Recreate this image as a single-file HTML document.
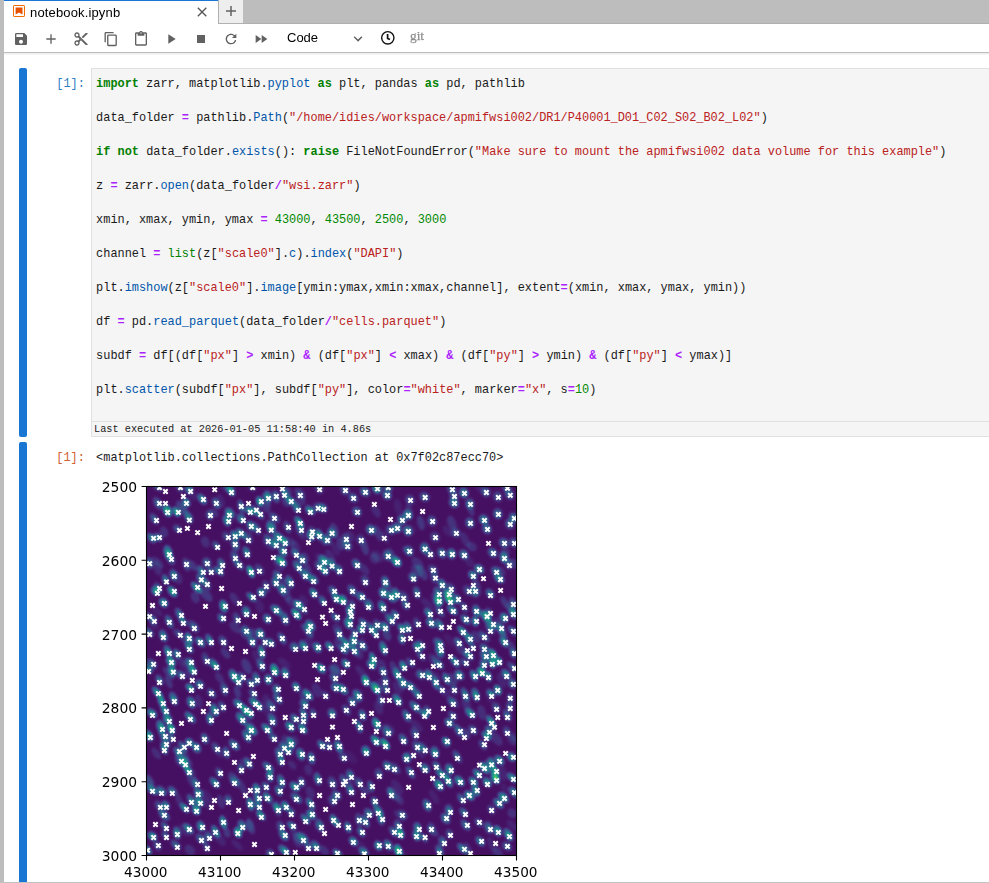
<!DOCTYPE html>
<html>
<head>
<meta charset="utf-8">
<title>notebook.ipynb</title>
<style>
*{box-sizing:border-box;margin:0;padding:0}
html,body{width:989px;height:883px;overflow:hidden;background:#fff}
body{position:relative;font-family:"Liberation Sans",sans-serif;color:#212121}
.abs{position:absolute}
#leftstrip{left:0;top:0;width:4px;height:883px;background:#bdbdbd}
#tabbar{left:0;top:0;width:989px;height:24px;background:#bdbdbd;border-bottom:1px solid #b0b0b0}
#tab{left:4px;top:0;width:214px;height:24px;background:#fff;border-top:1px solid #1976d2}
#tabicon{left:13px;top:5px;width:12px;height:12px}
#tablabel{left:30px;top:5px;font-size:13px;line-height:16px;color:#000;white-space:nowrap;letter-spacing:0.15px}
#tabclose{left:196px;top:6px;width:12px;height:12px}
#addbtn{left:218px;top:0;width:25px;height:24px;background:#eee;border-left:1px solid #b0b0b0;border-bottom:1px solid #b0b0b0}
#toolbar{left:4px;top:24px;width:985px;height:29px;background:#fff;border-bottom:1px solid #bdbdbd}
#tbshadow{left:4px;top:53px;width:985px;height:2px;background:linear-gradient(#e9e9e9,#fbfbfb)}
.tbi{position:absolute;fill:#616161}
#celltype{left:287px;top:30px;font-size:13px;line-height:16px;color:#000}
#git{left:410.4px;top:28.3px;-webkit-text-stroke:0.25px #8e8e8e;font-family:"Liberation Serif",serif;font-size:13.33px;line-height:16px;color:#8e8e8e}
.collapser{position:absolute;left:19px;width:8px;background:#1976d2;border-radius:2px}
.mono{font-family:"Liberation Mono",monospace;font-size:11.917px;line-height:17px;white-space:pre;color:#1a1a1a}
#inprompt{left:56.3px;top:76px;color:#307fc1}
#outprompt{left:56.3px;top:450px;color:#d0602f}
#bottomline{left:0;top:882px;width:989px;height:1px;background:#c2c2c2}
.gray{will-change:transform}
#editor{left:91px;top:68px;width:900px;height:369px;background:#f5f5f5;border:1px solid #e0e0e0}
#code{left:96.1px;top:76px}
#exectime{left:91px;top:421px;width:900px;height:16px;border-top:1px solid #e0e0e0}
#exectxt{left:94px;top:421.5px;font-size:10.27px;line-height:14px;color:#212121}
#outtxt{left:96.1px;top:450px}
.k{color:#008000;font-weight:bold}
.o{color:#aa22ff;font-weight:bold}
.n{color:#008800}
.s{color:#ba2121}
.p{color:#0055aa}
.b{color:#008000}
#plot{left:91px;top:470px}
</style>
</head>
<body>
<div id="tabbar" class="abs"></div>
<div id="leftstrip" class="abs"></div>
<div id="tab" class="abs"></div>
<svg id="tabicon" class="abs" viewBox="0 0 12 12"><rect x="0.5" y="0.5" width="11" height="11" rx="0.6" fill="#fff" stroke="#ef6c00" stroke-width="1"/><path d="M2.6 2.6h6.9v7L6 7.500 2.600 9.600z" fill="#e65100"/></svg>
<div id="tablabel" class="abs gray">notebook.ipynb</div>
<svg id="tabclose" class="abs" viewBox="0 0 12 12"><path d="M1.800 1.800l8.500 8.500M10.300 1.800l-8.500 8.500" stroke="#555" stroke-width="1.300" fill="none"/></svg>
<div id="addbtn" class="abs"></div>
<svg class="abs" style="left:225px;top:5px;width:12px;height:12px" viewBox="0 0 12 12"><path d="M6 1v10M1 6h10" stroke="#616161" stroke-width="1.500" fill="none"/></svg>

<div id="toolbar" class="abs"></div><div id="tbshadow" class="abs"></div>
<!-- toolbar icons -->
<svg class="tbi" style="left:13px;top:31px;width:16px;height:16px" viewBox="0 0 24 24"><path d="M17 3H5c-1.110 0-2 .9-2 2v14c0 1.100.89 2 2 2h14c1.100 0 2-.9 2-2V7l-4-4zm-5 16c-1.660 0-3-1.340-3-3s1.340-3 3-3 3 1.340 3 3-1.340 3-3 3zm3-10H5V5h10v4z"/></svg>
<svg class="tbi" style="left:43px;top:31px;width:16px;height:16px" viewBox="0 0 24 24"><path d="M19 13h-6v6h-2v-6H5v-2h6V5h2v6h6v2z"/></svg>
<svg class="tbi" style="left:73px;top:31px;width:16px;height:16px" viewBox="0 0 24 24"><path d="M9.640 7.640c.23-.5.36-1.050.36-1.640 0-2.210-1.790-4-4-4S2 3.790 2 6s1.790 4 4 4c.59 0 1.140-.13 1.640-.36L10 12l-2.360 2.360C7.140 14.130 6.590 14 6 14c-2.210 0-4 1.790-4 4s1.790 4 4 4 4-1.790 4-4c0-.59-.13-1.140-.36-1.640L12 14l7 7h3v-1L9.640 7.640zM6 8c-1.100 0-2-.89-2-2s.9-2 2-2 2 .89 2 2-.9 2-2 2zm0 12c-1.100 0-2-.89-2-2s.9-2 2-2 2 .89 2 2-.9 2-2 2zm6-7.500c-.28 0-.5-.22-.5-.5s.22-.5.5-.5.500.22.500.5-.22.500-.5.500zM19 3l-6 6 2 2 7-7V3z"/></svg>
<svg class="tbi" style="left:103px;top:31px;width:16px;height:16px" viewBox="0 0 18 18"><path d="M11.900 1H3.200c-.8 0-1.500.7-1.500 1.500v10.200h1.500V2.500h8.700V1zm2.200 2.900h-8c-.8 0-1.500.7-1.500 1.500v10.200c0 .8.700 1.500 1.500 1.500h8c.8 0 1.500-.7 1.500-1.500V5.400c-.1-.8-.7-1.500-1.500-1.500zm0 11.600h-8V5.400h8v10.100z"/></svg>
<svg class="tbi" style="left:133px;top:31px;width:16px;height:16px" viewBox="0 0 24 24"><path d="M19 2h-4.180C14.400.84 13.300 0 12 0c-1.300 0-2.400.84-2.820 2H5c-1.100 0-2 .9-2 2v16c0 1.100.9 2 2 2h14c1.100 0 2-.9 2-2V4c0-1.100-.9-2-2-2zm-7 0c.55 0 1 .45 1 1s-.45 1-1 1-1-.45-1-1 .45-1 1-1zm7 18H5V4h2v3h10V4h2v16z"/></svg>
<svg class="tbi" style="left:163px;top:31px;width:16px;height:16px" viewBox="0 0 24 24"><path d="M8 5v14l11-7z"/></svg>
<svg class="tbi" style="left:193px;top:31px;width:16px;height:16px" viewBox="0 0 24 24"><path d="M6 6h12v12H6z"/></svg>
<svg class="tbi" style="left:223px;top:31px;width:16px;height:16px" viewBox="0 0 18 18"><path d="M9 13.500c-2.490 0-4.500-2.010-4.500-4.500S6.510 4.500 9 4.500c1.240 0 2.360.52 3.170 1.330L10 8h5V3l-1.760 1.760C12.150 3.680 10.660 3 9 3 5.690 3 3.010 5.690 3.010 9S5.690 15 9 15c2.970 0 5.430-2.160 5.900-5h-1.520c-.46 2-2.240 3.500-4.380 3.500z"/></svg>
<svg class="tbi" style="left:253px;top:31px;width:16px;height:16px" viewBox="0 0 24 24"><path d="M4 18l8.500-6L4 6v12zm9-12v12l8.500-6L13 6z"/></svg>
<div id="celltype" class="abs gray">Code</div>
<svg class="tbi" style="left:350px;top:31px;width:16px;height:16px" viewBox="0 0 18 18"><path d="M5.200 5.900L9 9.700l3.800-3.800 1.200 1.200-4.900 5-4.900-5z"/></svg>
<svg class="abs" style="left:380px;top:30px;width:16px;height:16px" viewBox="0 0 16 16"><circle cx="7.800" cy="7.800" r="6.150" fill="none" stroke="#111" stroke-width="1.400"/><path d="M7.600 4.100v4.300l2.400 1.200" fill="none" stroke="#111" stroke-width="1.700"/></svg>
<div id="git" class="abs gray">git</div>

<!-- cell -->
<div class="collapser" style="top:68px;height:369px"></div>
<div class="collapser" style="top:442px;height:460px"></div>
<div id="inprompt" class="abs mono">[1]:</div>
<div id="editor" class="abs"></div>
<div id="code" class="abs mono"><span class="k">import</span> zarr, matplotlib.<span class="p">pyplot</span> <span class="k">as</span> plt, pandas <span class="k">as</span> pd, pathlib

data_folder <span class="o">=</span> pathlib.<span class="p">Path</span>(<span class="s">"/home/idies/workspace/apmifwsi002/DR1/P40001_D01_C02_S02_B02_L02"</span>)

<span class="k">if</span> <span class="k">not</span> data_folder.<span class="p">exists</span>(): <span class="k">raise</span> FileNotFoundError(<span class="s">"Make sure to mount the apmifwsi002 data volume for this example"</span>)

z <span class="o">=</span> zarr.<span class="p">open</span>(data_folder<span class="o">/</span><span class="s">"wsi.zarr"</span>)

xmin, xmax, ymin, ymax <span class="o">=</span> <span class="n">43000</span>, <span class="n">43500</span>, <span class="n">2500</span>, <span class="n">3000</span>

channel <span class="o">=</span> <span class="b">list</span>(z[<span class="s">"scale0"</span>].<span class="p">c</span>).<span class="p">index</span>(<span class="s">"DAPI"</span>)

plt.<span class="p">imshow</span>(z[<span class="s">"scale0"</span>].<span class="p">image</span>[ymin:ymax,xmin:xmax,channel], extent<span class="o">=</span>(xmin, xmax, ymax, ymin))

df <span class="o">=</span> pd.<span class="p">read_parquet</span>(data_folder<span class="o">/</span><span class="s">"cells.parquet"</span>)

subdf <span class="o">=</span> df[(df[<span class="s">"px"</span>] <span class="o">&gt;</span> xmin) <span class="o">&amp;</span> (df[<span class="s">"px"</span>] <span class="o">&lt;</span> xmax) <span class="o">&amp;</span> (df[<span class="s">"py"</span>] <span class="o">&gt;</span> ymin) <span class="o">&amp;</span> (df[<span class="s">"py"</span>] <span class="o">&lt;</span> ymax)]

plt.<span class="p">scatter</span>(subdf[<span class="s">"px"</span>], subdf[<span class="s">"py"</span>], color<span class="o">=</span><span class="s">"white"</span>, marker<span class="o">=</span><span class="s">"x"</span>, s<span class="o">=</span><span class="n">10</span>)</div>
<div id="exectime" class="abs"></div>
<div id="exectxt" class="abs mono" style="font-size:10.27px;line-height:14px">Last executed at 2026-01-05 11:58:40 in 4.86s</div>
<div id="outprompt" class="abs mono">[1]:</div>
<div id="outtxt" class="abs mono">&lt;matplotlib.collections.PathCollection at 0x7f02c87ecc70&gt;</div>

<div id="bottomline" class="abs"></div>
<!-- PLOT -->
<svg id="plot" class="abs gray" width="470" height="413" viewBox="91 470 470 413">
<defs>
<filter id="vir" x="0" y="0" width="100%" height="100%" filterUnits="objectBoundingBox" color-interpolation-filters="sRGB"><feGaussianBlur stdDeviation="1.3"/><feComponentTransfer><feFuncR type="table" tableValues="0.267 0.278 0.282 0.271 0.255 0.231 0.204 0.180 0.161 0.141 0.129 0.122 0.145 0.208 0.306 0.427 0.525 0.647 0.761 0.875 0.992"/><feFuncG type="table" tableValues="0.004 0.075 0.141 0.204 0.267 0.322 0.376 0.427 0.475 0.525 0.569 0.616 0.671 0.718 0.765 0.804 0.835 0.859 0.875 0.890 0.906"/><feFuncB type="table" tableValues="0.329 0.396 0.459 0.498 0.529 0.545 0.553 0.557 0.557 0.557 0.549 0.537 0.510 0.475 0.420 0.349 0.286 0.212 0.137 0.094 0.145"/></feComponentTransfer></filter>
<clipPath id="axclip"><rect x="147" y="487" width="369" height="368"/></clipPath>
</defs>
<g clip-path="url(#axclip)">
<g filter="url(#vir)">
<rect x="141" y="481" width="381" height="380" fill="#0b0b0b"/>
<ellipse cx="157.4" cy="486.3" rx="3.8" ry="6.4" transform="rotate(-47 157.4 486.3)" fill="#fff" fill-opacity="0.14"/>
<ellipse cx="157.8" cy="486.6" rx="1.8" ry="3.1" transform="rotate(-47 157.8 486.6)" fill="#fff" fill-opacity="0.20"/>
<ellipse cx="178.9" cy="486.7" rx="3.5" ry="7.1" transform="rotate(-35 178.9 486.7)" fill="#fff" fill-opacity="0.12"/>
<ellipse cx="179.2" cy="486.8" rx="1.7" ry="3.5" transform="rotate(-35 179.2 486.8)" fill="#fff" fill-opacity="0.18"/>
<ellipse cx="189.0" cy="489.1" rx="4.3" ry="5.3" transform="rotate(-15 189.0 489.1)" fill="#fff" fill-opacity="0.21"/>
<ellipse cx="189.3" cy="489.6" rx="2.1" ry="2.5" transform="rotate(-15 189.3 489.6)" fill="#fff" fill-opacity="0.31"/>
<ellipse cx="230.6" cy="489.9" rx="3.8" ry="6.7" transform="rotate(-29 230.6 489.9)" fill="#fff" fill-opacity="0.25"/>
<ellipse cx="230.8" cy="490.4" rx="1.8" ry="3.3" transform="rotate(-29 230.8 490.4)" fill="#fff" fill-opacity="0.37"/>
<ellipse cx="202.0" cy="499.1" rx="3.9" ry="6.5" transform="rotate(-39 202.0 499.1)" fill="#fff" fill-opacity="0.23"/>
<ellipse cx="202.3" cy="499.1" rx="1.9" ry="3.2" transform="rotate(-39 202.3 499.1)" fill="#fff" fill-opacity="0.33"/>
<ellipse cx="158.0" cy="503.5" rx="4.1" ry="7.2" transform="rotate(-31 158.0 503.5)" fill="#fff" fill-opacity="0.15"/>
<ellipse cx="158.3" cy="503.5" rx="2.1" ry="3.6" transform="rotate(-31 158.3 503.5)" fill="#fff" fill-opacity="0.22"/>
<ellipse cx="186.2" cy="502.3" rx="4.1" ry="5.3" transform="rotate(-32 186.2 502.3)" fill="#fff" fill-opacity="0.24"/>
<ellipse cx="186.3" cy="502.5" rx="2.0" ry="2.5" transform="rotate(-32 186.3 502.5)" fill="#fff" fill-opacity="0.35"/>
<ellipse cx="216.2" cy="503.4" rx="3.9" ry="6.5" transform="rotate(-29 216.2 503.4)" fill="#fff" fill-opacity="0.17"/>
<ellipse cx="216.2" cy="503.4" rx="1.9" ry="3.2" transform="rotate(-29 216.2 503.4)" fill="#fff" fill-opacity="0.24"/>
<ellipse cx="167.4" cy="510.6" rx="4.4" ry="6.7" transform="rotate(-25 167.4 510.6)" fill="#fff" fill-opacity="0.34"/>
<ellipse cx="167.4" cy="511.0" rx="2.2" ry="3.3" transform="rotate(-25 167.4 511.0)" fill="#fff" fill-opacity="0.49"/>
<ellipse cx="176.4" cy="511.8" rx="3.5" ry="5.6" transform="rotate(-33 176.4 511.8)" fill="#fff" fill-opacity="0.34"/>
<ellipse cx="176.8" cy="511.9" rx="1.7" ry="2.6" transform="rotate(-33 176.8 511.9)" fill="#fff" fill-opacity="0.49"/>
<ellipse cx="209.6" cy="515.3" rx="3.8" ry="5.4" transform="rotate(-19 209.6 515.3)" fill="#fff" fill-opacity="0.15"/>
<ellipse cx="209.8" cy="515.4" rx="1.9" ry="2.5" transform="rotate(-19 209.8 515.4)" fill="#fff" fill-opacity="0.22"/>
<ellipse cx="229.6" cy="512.9" rx="4.3" ry="6.0" transform="rotate(-35 229.6 512.9)" fill="#fff" fill-opacity="0.26"/>
<ellipse cx="229.6" cy="513.4" rx="2.2" ry="2.9" transform="rotate(-35 229.6 513.4)" fill="#fff" fill-opacity="0.38"/>
<ellipse cx="154.3" cy="519.0" rx="3.7" ry="6.6" transform="rotate(-33 154.3 519.0)" fill="#fff" fill-opacity="0.15"/>
<ellipse cx="154.8" cy="519.3" rx="1.8" ry="3.2" transform="rotate(-33 154.8 519.3)" fill="#fff" fill-opacity="0.22"/>
<ellipse cx="188.8" cy="517.6" rx="4.0" ry="6.4" transform="rotate(-25 188.8 517.6)" fill="#fff" fill-opacity="0.21"/>
<ellipse cx="188.9" cy="518.1" rx="2.0" ry="3.1" transform="rotate(-25 188.9 518.1)" fill="#fff" fill-opacity="0.30"/>
<ellipse cx="226.7" cy="520.7" rx="3.8" ry="6.1" transform="rotate(-21 226.7 520.7)" fill="#fff" fill-opacity="0.25"/>
<ellipse cx="227.1" cy="520.9" rx="1.9" ry="2.9" transform="rotate(-21 227.1 520.9)" fill="#fff" fill-opacity="0.36"/>
<ellipse cx="177.5" cy="528.7" rx="3.6" ry="5.2" transform="rotate(-48 177.5 528.7)" fill="#fff" fill-opacity="0.14"/>
<ellipse cx="177.9" cy="529.1" rx="1.7" ry="2.4" transform="rotate(-48 177.9 529.1)" fill="#fff" fill-opacity="0.20"/>
<ellipse cx="151.7" cy="538.1" rx="3.8" ry="6.0" transform="rotate(-41 151.7 538.1)" fill="#fff" fill-opacity="0.22"/>
<ellipse cx="152.1" cy="538.1" rx="1.8" ry="2.9" transform="rotate(-41 152.1 538.1)" fill="#fff" fill-opacity="0.32"/>
<ellipse cx="157.9" cy="537.3" rx="3.7" ry="5.4" transform="rotate(-47 157.9 537.3)" fill="#fff" fill-opacity="0.19"/>
<ellipse cx="158.2" cy="537.4" rx="1.8" ry="2.5" transform="rotate(-47 158.2 537.4)" fill="#fff" fill-opacity="0.28"/>
<ellipse cx="226.2" cy="536.4" rx="3.9" ry="5.5" transform="rotate(-31 226.2 536.4)" fill="#fff" fill-opacity="0.11"/>
<ellipse cx="226.7" cy="536.6" rx="1.9" ry="2.6" transform="rotate(-31 226.7 536.6)" fill="#fff" fill-opacity="0.17"/>
<ellipse cx="235.0" cy="535.4" rx="3.6" ry="6.0" transform="rotate(-41 235.0 535.4)" fill="#fff" fill-opacity="0.26"/>
<ellipse cx="235.0" cy="535.6" rx="1.7" ry="2.9" transform="rotate(-41 235.0 535.6)" fill="#fff" fill-opacity="0.38"/>
<ellipse cx="235.0" cy="544.1" rx="4.3" ry="7.5" transform="rotate(-21 235.0 544.1)" fill="#fff" fill-opacity="0.17"/>
<ellipse cx="235.1" cy="544.2" rx="2.1" ry="3.8" transform="rotate(-21 235.1 544.2)" fill="#fff" fill-opacity="0.24"/>
<ellipse cx="216.1" cy="545.4" rx="3.4" ry="5.3" transform="rotate(-37 216.1 545.4)" fill="#fff" fill-opacity="0.15"/>
<ellipse cx="216.4" cy="545.8" rx="1.6" ry="2.4" transform="rotate(-37 216.4 545.8)" fill="#fff" fill-opacity="0.22"/>
<ellipse cx="168.1" cy="552.5" rx="4.4" ry="7.5" transform="rotate(-16 168.1 552.5)" fill="#fff" fill-opacity="0.28"/>
<ellipse cx="168.3" cy="553.0" rx="2.2" ry="3.8" transform="rotate(-16 168.3 553.0)" fill="#fff" fill-opacity="0.40"/>
<ellipse cx="170.4" cy="558.6" rx="4.2" ry="7.3" transform="rotate(-28 170.4 558.6)" fill="#fff" fill-opacity="0.14"/>
<ellipse cx="170.6" cy="558.7" rx="2.1" ry="3.6" transform="rotate(-28 170.6 558.7)" fill="#fff" fill-opacity="0.21"/>
<ellipse cx="234.5" cy="556.2" rx="4.2" ry="7.0" transform="rotate(-17 234.5 556.2)" fill="#fff" fill-opacity="0.12"/>
<ellipse cx="234.7" cy="556.7" rx="2.1" ry="3.5" transform="rotate(-17 234.7 556.7)" fill="#fff" fill-opacity="0.18"/>
<ellipse cx="149.8" cy="563.1" rx="3.8" ry="6.1" transform="rotate(-15 149.8 563.1)" fill="#fff" fill-opacity="0.17"/>
<ellipse cx="149.7" cy="563.2" rx="1.9" ry="2.9" transform="rotate(-15 149.7 563.2)" fill="#fff" fill-opacity="0.25"/>
<ellipse cx="186.3" cy="564.6" rx="3.5" ry="7.1" transform="rotate(-17 186.3 564.6)" fill="#fff" fill-opacity="0.13"/>
<ellipse cx="186.4" cy="564.6" rx="1.7" ry="3.5" transform="rotate(-17 186.4 564.6)" fill="#fff" fill-opacity="0.19"/>
<ellipse cx="206.8" cy="562.4" rx="4.4" ry="5.2" transform="rotate(-45 206.8 562.4)" fill="#fff" fill-opacity="0.17"/>
<ellipse cx="206.9" cy="562.6" rx="2.2" ry="2.4" transform="rotate(-45 206.9 562.6)" fill="#fff" fill-opacity="0.25"/>
<ellipse cx="221.1" cy="563.4" rx="3.7" ry="5.7" transform="rotate(-20 221.1 563.4)" fill="#fff" fill-opacity="0.19"/>
<ellipse cx="221.4" cy="563.9" rx="1.8" ry="2.7" transform="rotate(-20 221.4 563.9)" fill="#fff" fill-opacity="0.27"/>
<ellipse cx="238.5" cy="564.3" rx="3.8" ry="7.3" transform="rotate(-45 238.5 564.3)" fill="#fff" fill-opacity="0.16"/>
<ellipse cx="238.8" cy="564.5" rx="1.8" ry="3.7" transform="rotate(-45 238.8 564.5)" fill="#fff" fill-opacity="0.23"/>
<ellipse cx="201.2" cy="570.9" rx="3.9" ry="6.4" transform="rotate(-32 201.2 570.9)" fill="#fff" fill-opacity="0.18"/>
<ellipse cx="201.7" cy="571.2" rx="1.9" ry="3.1" transform="rotate(-32 201.7 571.2)" fill="#fff" fill-opacity="0.27"/>
<ellipse cx="210.4" cy="570.5" rx="4.1" ry="6.3" transform="rotate(-44 210.4 570.5)" fill="#fff" fill-opacity="0.11"/>
<ellipse cx="210.6" cy="570.9" rx="2.1" ry="3.1" transform="rotate(-44 210.6 570.9)" fill="#fff" fill-opacity="0.16"/>
<ellipse cx="219.0" cy="571.0" rx="3.6" ry="6.5" transform="rotate(-46 219.0 571.0)" fill="#fff" fill-opacity="0.21"/>
<ellipse cx="219.3" cy="571.1" rx="1.8" ry="3.2" transform="rotate(-46 219.3 571.1)" fill="#fff" fill-opacity="0.30"/>
<ellipse cx="173.5" cy="575.1" rx="4.0" ry="6.2" transform="rotate(-17 173.5 575.1)" fill="#fff" fill-opacity="0.21"/>
<ellipse cx="173.6" cy="575.4" rx="2.0" ry="3.0" transform="rotate(-17 173.6 575.4)" fill="#fff" fill-opacity="0.30"/>
<ellipse cx="201.3" cy="579.8" rx="4.1" ry="7.4" transform="rotate(-33 201.3 579.8)" fill="#fff" fill-opacity="0.19"/>
<ellipse cx="201.3" cy="579.8" rx="2.0" ry="3.7" transform="rotate(-33 201.3 579.8)" fill="#fff" fill-opacity="0.28"/>
<ellipse cx="165.4" cy="579.4" rx="3.5" ry="5.5" transform="rotate(-20 165.4 579.4)" fill="#fff" fill-opacity="0.21"/>
<ellipse cx="165.6" cy="579.9" rx="1.7" ry="2.6" transform="rotate(-20 165.6 579.9)" fill="#fff" fill-opacity="0.30"/>
<ellipse cx="206.9" cy="583.7" rx="3.6" ry="7.3" transform="rotate(-22 206.9 583.7)" fill="#fff" fill-opacity="0.12"/>
<ellipse cx="207.0" cy="583.8" rx="1.7" ry="3.6" transform="rotate(-22 207.0 583.8)" fill="#fff" fill-opacity="0.18"/>
<ellipse cx="196.6" cy="587.6" rx="3.8" ry="7.4" transform="rotate(-42 196.6 587.6)" fill="#fff" fill-opacity="0.27"/>
<ellipse cx="196.8" cy="587.6" rx="1.9" ry="3.7" transform="rotate(-42 196.8 587.6)" fill="#fff" fill-opacity="0.39"/>
<ellipse cx="158.0" cy="587.8" rx="3.6" ry="6.0" transform="rotate(-31 158.0 587.8)" fill="#fff" fill-opacity="0.14"/>
<ellipse cx="158.3" cy="588.0" rx="1.7" ry="2.9" transform="rotate(-31 158.3 588.0)" fill="#fff" fill-opacity="0.20"/>
<ellipse cx="172.4" cy="591.6" rx="3.9" ry="6.6" transform="rotate(-38 172.4 591.6)" fill="#fff" fill-opacity="0.30"/>
<ellipse cx="172.8" cy="591.6" rx="1.9" ry="3.3" transform="rotate(-38 172.8 591.6)" fill="#fff" fill-opacity="0.43"/>
<ellipse cx="155.8" cy="591.0" rx="4.2" ry="5.3" transform="rotate(-40 155.8 591.0)" fill="#fff" fill-opacity="0.28"/>
<ellipse cx="156.1" cy="591.5" rx="2.1" ry="2.5" transform="rotate(-40 156.1 591.5)" fill="#fff" fill-opacity="0.41"/>
<ellipse cx="163.6" cy="602.7" rx="4.3" ry="5.5" transform="rotate(-41 163.6 602.7)" fill="#fff" fill-opacity="0.27"/>
<ellipse cx="163.8" cy="602.9" rx="2.2" ry="2.6" transform="rotate(-41 163.8 602.9)" fill="#fff" fill-opacity="0.39"/>
<ellipse cx="223.5" cy="606.2" rx="4.2" ry="6.7" transform="rotate(-16 223.5 606.2)" fill="#fff" fill-opacity="0.29"/>
<ellipse cx="223.9" cy="606.2" rx="2.1" ry="3.3" transform="rotate(-16 223.9 606.2)" fill="#fff" fill-opacity="0.43"/>
<ellipse cx="179.6" cy="614.3" rx="3.7" ry="7.3" transform="rotate(-30 179.6 614.3)" fill="#fff" fill-opacity="0.19"/>
<ellipse cx="180.0" cy="614.6" rx="1.8" ry="3.7" transform="rotate(-30 180.0 614.6)" fill="#fff" fill-opacity="0.28"/>
<ellipse cx="148.2" cy="616.1" rx="3.7" ry="5.7" transform="rotate(-48 148.2 616.1)" fill="#fff" fill-opacity="0.13"/>
<ellipse cx="148.5" cy="616.2" rx="1.8" ry="2.7" transform="rotate(-48 148.5 616.2)" fill="#fff" fill-opacity="0.19"/>
<ellipse cx="221.5" cy="617.9" rx="3.7" ry="5.2" transform="rotate(-38 221.5 617.9)" fill="#fff" fill-opacity="0.20"/>
<ellipse cx="221.9" cy="618.0" rx="1.8" ry="2.4" transform="rotate(-38 221.9 618.0)" fill="#fff" fill-opacity="0.29"/>
<ellipse cx="153.3" cy="620.1" rx="4.2" ry="5.4" transform="rotate(-16 153.3 620.1)" fill="#fff" fill-opacity="0.14"/>
<ellipse cx="153.5" cy="620.4" rx="2.1" ry="2.5" transform="rotate(-16 153.5 620.4)" fill="#fff" fill-opacity="0.21"/>
<ellipse cx="169.2" cy="621.7" rx="3.7" ry="7.5" transform="rotate(-25 169.2 621.7)" fill="#fff" fill-opacity="0.18"/>
<ellipse cx="169.2" cy="621.8" rx="1.8" ry="3.8" transform="rotate(-25 169.2 621.8)" fill="#fff" fill-opacity="0.26"/>
<ellipse cx="183.0" cy="621.4" rx="3.5" ry="5.5" transform="rotate(-48 183.0 621.4)" fill="#fff" fill-opacity="0.18"/>
<ellipse cx="183.1" cy="621.8" rx="1.7" ry="2.6" transform="rotate(-48 183.1 621.8)" fill="#fff" fill-opacity="0.26"/>
<ellipse cx="236.7" cy="618.5" rx="3.7" ry="6.7" transform="rotate(-19 236.7 618.5)" fill="#fff" fill-opacity="0.12"/>
<ellipse cx="237.0" cy="618.9" rx="1.8" ry="3.3" transform="rotate(-19 237.0 618.9)" fill="#fff" fill-opacity="0.18"/>
<ellipse cx="193.6" cy="626.4" rx="4.4" ry="7.4" transform="rotate(-41 193.6 626.4)" fill="#fff" fill-opacity="0.14"/>
<ellipse cx="193.7" cy="626.8" rx="2.2" ry="3.7" transform="rotate(-41 193.7 626.8)" fill="#fff" fill-opacity="0.20"/>
<ellipse cx="148.7" cy="632.3" rx="3.9" ry="6.1" transform="rotate(-50 148.7 632.3)" fill="#fff" fill-opacity="0.16"/>
<ellipse cx="148.9" cy="632.7" rx="1.9" ry="2.9" transform="rotate(-50 148.9 632.7)" fill="#fff" fill-opacity="0.24"/>
<ellipse cx="178.3" cy="633.5" rx="3.4" ry="6.1" transform="rotate(-47 178.3 633.5)" fill="#fff" fill-opacity="0.11"/>
<ellipse cx="178.7" cy="633.8" rx="1.6" ry="3.0" transform="rotate(-47 178.7 633.8)" fill="#fff" fill-opacity="0.16"/>
<ellipse cx="163.3" cy="635.8" rx="4.1" ry="6.7" transform="rotate(-23 163.3 635.8)" fill="#fff" fill-opacity="0.21"/>
<ellipse cx="163.3" cy="636.1" rx="2.1" ry="3.3" transform="rotate(-23 163.3 636.1)" fill="#fff" fill-opacity="0.31"/>
<ellipse cx="189.2" cy="638.4" rx="3.4" ry="6.7" transform="rotate(-24 189.2 638.4)" fill="#fff" fill-opacity="0.28"/>
<ellipse cx="189.2" cy="638.4" rx="1.6" ry="3.3" transform="rotate(-24 189.2 638.4)" fill="#fff" fill-opacity="0.41"/>
<ellipse cx="200.3" cy="642.1" rx="3.9" ry="6.4" transform="rotate(-45 200.3 642.1)" fill="#fff" fill-opacity="0.24"/>
<ellipse cx="200.3" cy="642.2" rx="1.9" ry="3.1" transform="rotate(-45 200.3 642.2)" fill="#fff" fill-opacity="0.35"/>
<ellipse cx="209.4" cy="640.1" rx="3.6" ry="6.8" transform="rotate(-25 209.4 640.1)" fill="#fff" fill-opacity="0.21"/>
<ellipse cx="209.8" cy="640.6" rx="1.8" ry="3.4" transform="rotate(-25 209.8 640.6)" fill="#fff" fill-opacity="0.31"/>
<ellipse cx="223.1" cy="641.2" rx="4.0" ry="6.6" transform="rotate(-30 223.1 641.2)" fill="#fff" fill-opacity="0.13"/>
<ellipse cx="223.2" cy="641.4" rx="2.0" ry="3.3" transform="rotate(-30 223.2 641.4)" fill="#fff" fill-opacity="0.19"/>
<ellipse cx="189.0" cy="647.3" rx="3.5" ry="6.7" transform="rotate(-31 189.0 647.3)" fill="#fff" fill-opacity="0.24"/>
<ellipse cx="189.0" cy="647.7" rx="1.7" ry="3.3" transform="rotate(-31 189.0 647.7)" fill="#fff" fill-opacity="0.35"/>
<ellipse cx="168.1" cy="652.1" rx="3.9" ry="7.4" transform="rotate(-23 168.1 652.1)" fill="#fff" fill-opacity="0.24"/>
<ellipse cx="168.4" cy="652.4" rx="1.9" ry="3.7" transform="rotate(-23 168.4 652.4)" fill="#fff" fill-opacity="0.35"/>
<ellipse cx="176.8" cy="653.9" rx="3.5" ry="5.4" transform="rotate(-27 176.8 653.9)" fill="#fff" fill-opacity="0.24"/>
<ellipse cx="177.2" cy="654.1" rx="1.7" ry="2.5" transform="rotate(-27 177.2 654.1)" fill="#fff" fill-opacity="0.36"/>
<ellipse cx="170.9" cy="661.7" rx="4.1" ry="5.8" transform="rotate(-48 170.9 661.7)" fill="#fff" fill-opacity="0.32"/>
<ellipse cx="171.1" cy="661.9" rx="2.0" ry="2.8" transform="rotate(-48 171.1 661.9)" fill="#fff" fill-opacity="0.47"/>
<ellipse cx="189.8" cy="662.7" rx="4.3" ry="5.5" transform="rotate(-33 189.8 662.7)" fill="#fff" fill-opacity="0.20"/>
<ellipse cx="190.1" cy="662.6" rx="2.2" ry="2.6" transform="rotate(-33 190.1 662.6)" fill="#fff" fill-opacity="0.29"/>
<ellipse cx="205.8" cy="659.2" rx="3.8" ry="7.4" transform="rotate(-20 205.8 659.2)" fill="#fff" fill-opacity="0.11"/>
<ellipse cx="206.2" cy="659.6" rx="1.9" ry="3.7" transform="rotate(-20 206.2 659.6)" fill="#fff" fill-opacity="0.16"/>
<ellipse cx="151.7" cy="664.0" rx="4.4" ry="6.4" transform="rotate(-45 151.7 664.0)" fill="#fff" fill-opacity="0.15"/>
<ellipse cx="152.1" cy="664.0" rx="2.2" ry="3.1" transform="rotate(-45 152.1 664.0)" fill="#fff" fill-opacity="0.21"/>
<ellipse cx="214.2" cy="664.5" rx="3.9" ry="7.3" transform="rotate(-42 214.2 664.5)" fill="#fff" fill-opacity="0.27"/>
<ellipse cx="214.6" cy="665.0" rx="1.9" ry="3.6" transform="rotate(-42 214.6 665.0)" fill="#fff" fill-opacity="0.39"/>
<ellipse cx="148.4" cy="668.7" rx="3.7" ry="6.0" transform="rotate(-45 148.4 668.7)" fill="#fff" fill-opacity="0.19"/>
<ellipse cx="148.5" cy="669.2" rx="1.8" ry="2.9" transform="rotate(-45 148.5 669.2)" fill="#fff" fill-opacity="0.28"/>
<ellipse cx="171.9" cy="670.5" rx="4.3" ry="6.8" transform="rotate(-17 171.9 670.5)" fill="#fff" fill-opacity="0.26"/>
<ellipse cx="172.2" cy="670.8" rx="2.2" ry="3.4" transform="rotate(-17 172.2 670.8)" fill="#fff" fill-opacity="0.37"/>
<ellipse cx="192.4" cy="669.7" rx="3.7" ry="6.2" transform="rotate(-37 192.4 669.7)" fill="#fff" fill-opacity="0.29"/>
<ellipse cx="192.8" cy="670.2" rx="1.8" ry="3.0" transform="rotate(-37 192.8 670.2)" fill="#fff" fill-opacity="0.42"/>
<ellipse cx="180.8" cy="674.8" rx="3.9" ry="5.8" transform="rotate(-41 180.8 674.8)" fill="#fff" fill-opacity="0.16"/>
<ellipse cx="181.2" cy="675.2" rx="1.9" ry="2.8" transform="rotate(-41 181.2 675.2)" fill="#fff" fill-opacity="0.23"/>
<ellipse cx="233.6" cy="675.9" rx="4.3" ry="7.3" transform="rotate(-27 233.6 675.9)" fill="#fff" fill-opacity="0.27"/>
<ellipse cx="233.8" cy="676.0" rx="2.2" ry="3.7" transform="rotate(-27 233.8 676.0)" fill="#fff" fill-opacity="0.39"/>
<ellipse cx="159.5" cy="680.1" rx="3.4" ry="5.9" transform="rotate(-27 159.5 680.1)" fill="#fff" fill-opacity="0.19"/>
<ellipse cx="159.5" cy="680.6" rx="1.6" ry="2.8" transform="rotate(-27 159.5 680.6)" fill="#fff" fill-opacity="0.28"/>
<ellipse cx="238.0" cy="680.6" rx="3.7" ry="7.4" transform="rotate(-23 238.0 680.6)" fill="#fff" fill-opacity="0.17"/>
<ellipse cx="238.1" cy="681.0" rx="1.8" ry="3.7" transform="rotate(-23 238.1 681.0)" fill="#fff" fill-opacity="0.25"/>
<ellipse cx="199.4" cy="684.3" rx="4.3" ry="5.7" transform="rotate(-44 199.4 684.3)" fill="#fff" fill-opacity="0.18"/>
<ellipse cx="199.6" cy="684.7" rx="2.2" ry="2.7" transform="rotate(-44 199.6 684.7)" fill="#fff" fill-opacity="0.26"/>
<ellipse cx="190.1" cy="687.9" rx="3.5" ry="5.6" transform="rotate(-45 190.1 687.9)" fill="#fff" fill-opacity="0.29"/>
<ellipse cx="190.4" cy="688.4" rx="1.7" ry="2.7" transform="rotate(-45 190.4 688.4)" fill="#fff" fill-opacity="0.42"/>
<ellipse cx="224.3" cy="689.2" rx="3.8" ry="6.9" transform="rotate(-18 224.3 689.2)" fill="#fff" fill-opacity="0.16"/>
<ellipse cx="224.6" cy="689.4" rx="1.9" ry="3.4" transform="rotate(-18 224.6 689.4)" fill="#fff" fill-opacity="0.23"/>
<ellipse cx="157.4" cy="692.7" rx="3.5" ry="7.4" transform="rotate(-40 157.4 692.7)" fill="#fff" fill-opacity="0.28"/>
<ellipse cx="157.6" cy="692.9" rx="1.7" ry="3.7" transform="rotate(-40 157.6 692.9)" fill="#fff" fill-opacity="0.41"/>
<ellipse cx="211.6" cy="693.3" rx="3.8" ry="6.1" transform="rotate(-41 211.6 693.3)" fill="#fff" fill-opacity="0.15"/>
<ellipse cx="211.6" cy="693.4" rx="1.9" ry="3.0" transform="rotate(-41 211.6 693.4)" fill="#fff" fill-opacity="0.22"/>
<ellipse cx="173.6" cy="698.7" rx="3.9" ry="7.3" transform="rotate(-24 173.6 698.7)" fill="#fff" fill-opacity="0.22"/>
<ellipse cx="173.8" cy="699.3" rx="1.9" ry="3.6" transform="rotate(-24 173.8 699.3)" fill="#fff" fill-opacity="0.33"/>
<ellipse cx="161.4" cy="701.3" rx="3.6" ry="7.4" transform="rotate(-19 161.4 701.3)" fill="#fff" fill-opacity="0.27"/>
<ellipse cx="161.8" cy="701.7" rx="1.8" ry="3.7" transform="rotate(-19 161.8 701.7)" fill="#fff" fill-opacity="0.40"/>
<ellipse cx="191.2" cy="702.5" rx="4.2" ry="6.7" transform="rotate(-24 191.2 702.5)" fill="#fff" fill-opacity="0.23"/>
<ellipse cx="191.5" cy="702.7" rx="2.1" ry="3.3" transform="rotate(-24 191.5 702.7)" fill="#fff" fill-opacity="0.33"/>
<ellipse cx="222.0" cy="706.6" rx="3.5" ry="5.9" transform="rotate(-27 222.0 706.6)" fill="#fff" fill-opacity="0.15"/>
<ellipse cx="222.3" cy="706.8" rx="1.7" ry="2.8" transform="rotate(-27 222.3 706.8)" fill="#fff" fill-opacity="0.22"/>
<ellipse cx="164.9" cy="710.5" rx="3.8" ry="6.5" transform="rotate(-31 164.9 710.5)" fill="#fff" fill-opacity="0.24"/>
<ellipse cx="165.2" cy="710.7" rx="1.9" ry="3.2" transform="rotate(-31 165.2 710.7)" fill="#fff" fill-opacity="0.35"/>
<ellipse cx="214.7" cy="709.4" rx="3.9" ry="7.2" transform="rotate(-27 214.7 709.4)" fill="#fff" fill-opacity="0.19"/>
<ellipse cx="215.0" cy="709.8" rx="1.9" ry="3.6" transform="rotate(-27 215.0 709.8)" fill="#fff" fill-opacity="0.28"/>
<ellipse cx="238.3" cy="703.6" rx="4.1" ry="6.3" transform="rotate(-49 238.3 703.6)" fill="#fff" fill-opacity="0.23"/>
<ellipse cx="238.6" cy="704.0" rx="2.0" ry="3.1" transform="rotate(-49 238.6 704.0)" fill="#fff" fill-opacity="0.34"/>
<ellipse cx="152.0" cy="713.2" rx="3.8" ry="6.0" transform="rotate(-49 152.0 713.2)" fill="#fff" fill-opacity="0.27"/>
<ellipse cx="152.1" cy="713.6" rx="1.9" ry="2.9" transform="rotate(-49 152.1 713.6)" fill="#fff" fill-opacity="0.40"/>
<ellipse cx="190.2" cy="717.3" rx="3.7" ry="7.4" transform="rotate(-43 190.2 717.3)" fill="#fff" fill-opacity="0.24"/>
<ellipse cx="190.3" cy="717.7" rx="1.8" ry="3.7" transform="rotate(-43 190.3 717.7)" fill="#fff" fill-opacity="0.35"/>
<ellipse cx="209.8" cy="718.9" rx="3.6" ry="6.3" transform="rotate(-16 209.8 718.9)" fill="#fff" fill-opacity="0.24"/>
<ellipse cx="210.2" cy="719.2" rx="1.7" ry="3.1" transform="rotate(-16 210.2 719.2)" fill="#fff" fill-opacity="0.35"/>
<ellipse cx="167.5" cy="718.9" rx="4.4" ry="5.7" transform="rotate(-36 167.5 718.9)" fill="#fff" fill-opacity="0.28"/>
<ellipse cx="167.9" cy="719.4" rx="2.2" ry="2.7" transform="rotate(-36 167.9 719.4)" fill="#fff" fill-opacity="0.40"/>
<ellipse cx="161.1" cy="727.2" rx="4.3" ry="7.5" transform="rotate(-24 161.1 727.2)" fill="#fff" fill-opacity="0.27"/>
<ellipse cx="161.4" cy="727.6" rx="2.2" ry="3.8" transform="rotate(-24 161.4 727.6)" fill="#fff" fill-opacity="0.39"/>
<ellipse cx="170.9" cy="728.2" rx="3.8" ry="6.1" transform="rotate(-26 170.9 728.2)" fill="#fff" fill-opacity="0.35"/>
<ellipse cx="171.2" cy="728.6" rx="1.8" ry="2.9" transform="rotate(-26 171.2 728.6)" fill="#fff" fill-opacity="0.51"/>
<ellipse cx="164.1" cy="736.1" rx="3.6" ry="7.4" transform="rotate(-46 164.1 736.1)" fill="#fff" fill-opacity="0.17"/>
<ellipse cx="164.4" cy="736.2" rx="1.7" ry="3.7" transform="rotate(-46 164.4 736.2)" fill="#fff" fill-opacity="0.25"/>
<ellipse cx="148.7" cy="735.8" rx="4.3" ry="6.1" transform="rotate(-33 148.7 735.8)" fill="#fff" fill-opacity="0.30"/>
<ellipse cx="149.0" cy="736.1" rx="2.2" ry="2.9" transform="rotate(-33 149.0 736.1)" fill="#fff" fill-opacity="0.43"/>
<ellipse cx="171.3" cy="736.8" rx="3.4" ry="7.0" transform="rotate(-21 171.3 736.8)" fill="#fff" fill-opacity="0.12"/>
<ellipse cx="171.7" cy="737.3" rx="1.6" ry="3.5" transform="rotate(-21 171.7 737.3)" fill="#fff" fill-opacity="0.17"/>
<ellipse cx="204.6" cy="738.5" rx="3.7" ry="6.0" transform="rotate(-18 204.6 738.5)" fill="#fff" fill-opacity="0.16"/>
<ellipse cx="204.5" cy="738.6" rx="1.8" ry="2.9" transform="rotate(-18 204.5 738.6)" fill="#fff" fill-opacity="0.23"/>
<ellipse cx="189.4" cy="742.5" rx="4.2" ry="5.2" transform="rotate(-40 189.4 742.5)" fill="#fff" fill-opacity="0.24"/>
<ellipse cx="189.4" cy="742.7" rx="2.1" ry="2.4" transform="rotate(-40 189.4 742.7)" fill="#fff" fill-opacity="0.34"/>
<ellipse cx="165.3" cy="742.4" rx="4.4" ry="7.4" transform="rotate(-33 165.3 742.4)" fill="#fff" fill-opacity="0.11"/>
<ellipse cx="165.5" cy="742.8" rx="2.2" ry="3.7" transform="rotate(-33 165.5 742.8)" fill="#fff" fill-opacity="0.17"/>
<ellipse cx="234.2" cy="744.9" rx="4.1" ry="7.0" transform="rotate(-43 234.2 744.9)" fill="#fff" fill-opacity="0.20"/>
<ellipse cx="234.3" cy="745.0" rx="2.1" ry="3.5" transform="rotate(-43 234.3 745.0)" fill="#fff" fill-opacity="0.29"/>
<ellipse cx="182.7" cy="746.8" rx="3.5" ry="7.0" transform="rotate(-37 182.7 746.8)" fill="#fff" fill-opacity="0.17"/>
<ellipse cx="183.1" cy="746.9" rx="1.7" ry="3.5" transform="rotate(-37 183.1 746.9)" fill="#fff" fill-opacity="0.24"/>
<ellipse cx="196.5" cy="747.7" rx="4.4" ry="5.9" transform="rotate(-30 196.5 747.7)" fill="#fff" fill-opacity="0.23"/>
<ellipse cx="196.5" cy="747.6" rx="2.2" ry="2.8" transform="rotate(-30 196.5 747.6)" fill="#fff" fill-opacity="0.34"/>
<ellipse cx="216.0" cy="747.9" rx="3.8" ry="6.8" transform="rotate(-32 216.0 747.9)" fill="#fff" fill-opacity="0.12"/>
<ellipse cx="216.3" cy="748.2" rx="1.9" ry="3.4" transform="rotate(-32 216.3 748.2)" fill="#fff" fill-opacity="0.18"/>
<ellipse cx="164.2" cy="748.5" rx="3.5" ry="6.7" transform="rotate(-20 164.2 748.5)" fill="#fff" fill-opacity="0.23"/>
<ellipse cx="164.3" cy="748.9" rx="1.7" ry="3.3" transform="rotate(-20 164.3 748.9)" fill="#fff" fill-opacity="0.33"/>
<ellipse cx="177.7" cy="751.4" rx="3.6" ry="5.8" transform="rotate(-43 177.7 751.4)" fill="#fff" fill-opacity="0.18"/>
<ellipse cx="178.0" cy="751.4" rx="1.8" ry="2.7" transform="rotate(-43 178.0 751.4)" fill="#fff" fill-opacity="0.26"/>
<ellipse cx="226.3" cy="752.6" rx="3.6" ry="6.4" transform="rotate(-14 226.3 752.6)" fill="#fff" fill-opacity="0.17"/>
<ellipse cx="226.4" cy="752.7" rx="1.8" ry="3.1" transform="rotate(-14 226.4 752.7)" fill="#fff" fill-opacity="0.24"/>
<ellipse cx="179.4" cy="759.4" rx="4.3" ry="7.1" transform="rotate(-21 179.4 759.4)" fill="#fff" fill-opacity="0.13"/>
<ellipse cx="179.8" cy="759.8" rx="2.2" ry="3.6" transform="rotate(-21 179.8 759.8)" fill="#fff" fill-opacity="0.19"/>
<ellipse cx="184.4" cy="762.8" rx="4.3" ry="6.1" transform="rotate(-17 184.4 762.8)" fill="#fff" fill-opacity="0.28"/>
<ellipse cx="184.6" cy="763.2" rx="2.1" ry="2.9" transform="rotate(-17 184.6 763.2)" fill="#fff" fill-opacity="0.41"/>
<ellipse cx="188.1" cy="770.2" rx="3.6" ry="6.6" transform="rotate(-29 188.1 770.2)" fill="#fff" fill-opacity="0.28"/>
<ellipse cx="188.3" cy="770.7" rx="1.7" ry="3.3" transform="rotate(-29 188.3 770.7)" fill="#fff" fill-opacity="0.40"/>
<ellipse cx="219.2" cy="772.7" rx="3.4" ry="5.7" transform="rotate(-27 219.2 772.7)" fill="#fff" fill-opacity="0.15"/>
<ellipse cx="219.4" cy="772.8" rx="1.6" ry="2.7" transform="rotate(-27 219.4 772.8)" fill="#fff" fill-opacity="0.23"/>
<ellipse cx="195.7" cy="782.9" rx="3.5" ry="6.5" transform="rotate(-21 195.7 782.9)" fill="#fff" fill-opacity="0.16"/>
<ellipse cx="196.0" cy="783.2" rx="1.7" ry="3.2" transform="rotate(-21 196.0 783.2)" fill="#fff" fill-opacity="0.24"/>
<ellipse cx="214.8" cy="782.6" rx="3.8" ry="6.8" transform="rotate(-44 214.8 782.6)" fill="#fff" fill-opacity="0.22"/>
<ellipse cx="215.1" cy="783.0" rx="1.9" ry="3.4" transform="rotate(-44 215.1 783.0)" fill="#fff" fill-opacity="0.32"/>
<ellipse cx="234.7" cy="781.7" rx="4.3" ry="6.2" transform="rotate(-37 234.7 781.7)" fill="#fff" fill-opacity="0.16"/>
<ellipse cx="234.6" cy="782.1" rx="2.1" ry="3.0" transform="rotate(-37 234.6 782.1)" fill="#fff" fill-opacity="0.24"/>
<ellipse cx="152.3" cy="789.7" rx="3.8" ry="7.3" transform="rotate(-50 152.3 789.7)" fill="#fff" fill-opacity="0.24"/>
<ellipse cx="152.3" cy="790.1" rx="1.9" ry="3.6" transform="rotate(-50 152.3 790.1)" fill="#fff" fill-opacity="0.35"/>
<ellipse cx="161.5" cy="790.9" rx="4.0" ry="6.5" transform="rotate(-49 161.5 790.9)" fill="#fff" fill-opacity="0.19"/>
<ellipse cx="161.5" cy="791.4" rx="2.0" ry="3.2" transform="rotate(-49 161.5 791.4)" fill="#fff" fill-opacity="0.28"/>
<ellipse cx="172.4" cy="791.0" rx="3.9" ry="5.9" transform="rotate(-45 172.4 791.0)" fill="#fff" fill-opacity="0.18"/>
<ellipse cx="172.3" cy="791.5" rx="1.9" ry="2.8" transform="rotate(-45 172.3 791.5)" fill="#fff" fill-opacity="0.25"/>
<ellipse cx="198.5" cy="793.1" rx="4.3" ry="5.5" transform="rotate(-43 198.5 793.1)" fill="#fff" fill-opacity="0.25"/>
<ellipse cx="198.5" cy="793.4" rx="2.2" ry="2.6" transform="rotate(-43 198.5 793.4)" fill="#fff" fill-opacity="0.37"/>
<ellipse cx="191.2" cy="800.3" rx="3.6" ry="7.1" transform="rotate(-28 191.2 800.3)" fill="#fff" fill-opacity="0.18"/>
<ellipse cx="191.2" cy="800.7" rx="1.7" ry="3.5" transform="rotate(-28 191.2 800.7)" fill="#fff" fill-opacity="0.26"/>
<ellipse cx="199.5" cy="801.8" rx="3.8" ry="5.7" transform="rotate(-43 199.5 801.8)" fill="#fff" fill-opacity="0.26"/>
<ellipse cx="199.7" cy="802.1" rx="1.9" ry="2.7" transform="rotate(-43 199.7 802.1)" fill="#fff" fill-opacity="0.38"/>
<ellipse cx="228.1" cy="799.7" rx="4.0" ry="5.3" transform="rotate(-18 228.1 799.7)" fill="#fff" fill-opacity="0.15"/>
<ellipse cx="228.2" cy="800.2" rx="2.0" ry="2.5" transform="rotate(-18 228.2 800.2)" fill="#fff" fill-opacity="0.22"/>
<ellipse cx="159.2" cy="806.4" rx="3.7" ry="6.6" transform="rotate(-30 159.2 806.4)" fill="#fff" fill-opacity="0.13"/>
<ellipse cx="159.5" cy="806.6" rx="1.8" ry="3.3" transform="rotate(-30 159.5 806.6)" fill="#fff" fill-opacity="0.19"/>
<ellipse cx="165.5" cy="805.4" rx="4.0" ry="5.3" transform="rotate(-34 165.5 805.4)" fill="#fff" fill-opacity="0.23"/>
<ellipse cx="165.7" cy="805.8" rx="2.0" ry="2.4" transform="rotate(-34 165.7 805.8)" fill="#fff" fill-opacity="0.33"/>
<ellipse cx="184.7" cy="807.9" rx="3.5" ry="6.3" transform="rotate(-44 184.7 807.9)" fill="#fff" fill-opacity="0.25"/>
<ellipse cx="185.0" cy="808.2" rx="1.7" ry="3.1" transform="rotate(-44 185.0 808.2)" fill="#fff" fill-opacity="0.36"/>
<ellipse cx="196.2" cy="810.1" rx="4.1" ry="5.4" transform="rotate(-27 196.2 810.1)" fill="#fff" fill-opacity="0.31"/>
<ellipse cx="196.3" cy="810.3" rx="2.1" ry="2.5" transform="rotate(-27 196.3 810.3)" fill="#fff" fill-opacity="0.45"/>
<ellipse cx="164.0" cy="815.0" rx="4.4" ry="7.2" transform="rotate(-45 164.0 815.0)" fill="#fff" fill-opacity="0.18"/>
<ellipse cx="164.1" cy="815.1" rx="2.2" ry="3.6" transform="rotate(-45 164.1 815.1)" fill="#fff" fill-opacity="0.26"/>
<ellipse cx="223.3" cy="822.4" rx="3.6" ry="7.3" transform="rotate(-16 223.3 822.4)" fill="#fff" fill-opacity="0.28"/>
<ellipse cx="223.4" cy="822.4" rx="1.7" ry="3.7" transform="rotate(-16 223.4 822.4)" fill="#fff" fill-opacity="0.41"/>
<ellipse cx="200.7" cy="826.2" rx="4.2" ry="5.8" transform="rotate(-18 200.7 826.2)" fill="#fff" fill-opacity="0.24"/>
<ellipse cx="201.1" cy="826.4" rx="2.1" ry="2.8" transform="rotate(-18 201.1 826.4)" fill="#fff" fill-opacity="0.35"/>
<ellipse cx="164.8" cy="826.2" rx="3.4" ry="5.9" transform="rotate(-32 164.8 826.2)" fill="#fff" fill-opacity="0.15"/>
<ellipse cx="165.1" cy="826.7" rx="1.6" ry="2.8" transform="rotate(-32 165.1 826.7)" fill="#fff" fill-opacity="0.21"/>
<ellipse cx="188.5" cy="828.6" rx="3.5" ry="7.0" transform="rotate(-44 188.5 828.6)" fill="#fff" fill-opacity="0.23"/>
<ellipse cx="188.7" cy="828.7" rx="1.7" ry="3.5" transform="rotate(-44 188.7 828.7)" fill="#fff" fill-opacity="0.33"/>
<ellipse cx="215.7" cy="831.5" rx="3.5" ry="7.2" transform="rotate(-29 215.7 831.5)" fill="#fff" fill-opacity="0.26"/>
<ellipse cx="215.7" cy="831.7" rx="1.7" ry="3.6" transform="rotate(-29 215.7 831.7)" fill="#fff" fill-opacity="0.38"/>
<ellipse cx="177.0" cy="833.0" rx="3.8" ry="6.5" transform="rotate(-14 177.0 833.0)" fill="#fff" fill-opacity="0.25"/>
<ellipse cx="177.1" cy="833.3" rx="1.8" ry="3.2" transform="rotate(-14 177.1 833.3)" fill="#fff" fill-opacity="0.36"/>
<ellipse cx="238.0" cy="832.4" rx="4.0" ry="5.8" transform="rotate(-20 238.0 832.4)" fill="#fff" fill-opacity="0.35"/>
<ellipse cx="237.9" cy="832.6" rx="2.0" ry="2.8" transform="rotate(-20 237.9 832.6)" fill="#fff" fill-opacity="0.51"/>
<ellipse cx="152.4" cy="836.2" rx="4.0" ry="5.5" transform="rotate(-49 152.4 836.2)" fill="#fff" fill-opacity="0.28"/>
<ellipse cx="152.7" cy="836.5" rx="2.0" ry="2.6" transform="rotate(-49 152.7 836.5)" fill="#fff" fill-opacity="0.40"/>
<ellipse cx="165.2" cy="835.0" rx="3.4" ry="5.3" transform="rotate(-26 165.2 835.0)" fill="#fff" fill-opacity="0.13"/>
<ellipse cx="165.5" cy="835.5" rx="1.6" ry="2.4" transform="rotate(-26 165.5 835.5)" fill="#fff" fill-opacity="0.19"/>
<ellipse cx="208.4" cy="836.0" rx="4.0" ry="5.7" transform="rotate(-29 208.4 836.0)" fill="#fff" fill-opacity="0.15"/>
<ellipse cx="208.7" cy="836.5" rx="2.0" ry="2.7" transform="rotate(-29 208.7 836.5)" fill="#fff" fill-opacity="0.22"/>
<ellipse cx="201.2" cy="838.9" rx="4.3" ry="6.7" transform="rotate(-47 201.2 838.9)" fill="#fff" fill-opacity="0.15"/>
<ellipse cx="201.2" cy="839.2" rx="2.2" ry="3.3" transform="rotate(-47 201.2 839.2)" fill="#fff" fill-opacity="0.22"/>
<ellipse cx="157.3" cy="845.6" rx="4.0" ry="6.0" transform="rotate(-30 157.3 845.6)" fill="#fff" fill-opacity="0.11"/>
<ellipse cx="157.5" cy="845.6" rx="2.0" ry="2.9" transform="rotate(-30 157.5 845.6)" fill="#fff" fill-opacity="0.16"/>
<ellipse cx="175.8" cy="844.7" rx="3.8" ry="6.4" transform="rotate(-48 175.8 844.7)" fill="#fff" fill-opacity="0.15"/>
<ellipse cx="176.1" cy="845.3" rx="1.9" ry="3.1" transform="rotate(-48 176.1 845.3)" fill="#fff" fill-opacity="0.22"/>
<ellipse cx="206.7" cy="847.2" rx="3.6" ry="5.5" transform="rotate(-16 206.7 847.2)" fill="#fff" fill-opacity="0.11"/>
<ellipse cx="206.8" cy="847.5" rx="1.7" ry="2.6" transform="rotate(-16 206.8 847.5)" fill="#fff" fill-opacity="0.16"/>
<ellipse cx="147.5" cy="849.9" rx="3.4" ry="5.9" transform="rotate(-39 147.5 849.9)" fill="#fff" fill-opacity="0.25"/>
<ellipse cx="147.5" cy="850.0" rx="1.6" ry="2.8" transform="rotate(-39 147.5 850.0)" fill="#fff" fill-opacity="0.37"/>
<ellipse cx="251.6" cy="485.5" rx="4.1" ry="6.3" transform="rotate(-23 251.6 485.5)" fill="#fff" fill-opacity="0.11"/>
<ellipse cx="251.8" cy="485.9" rx="2.1" ry="3.0" transform="rotate(-23 251.8 485.9)" fill="#fff" fill-opacity="0.16"/>
<ellipse cx="319.0" cy="488.1" rx="4.4" ry="6.5" transform="rotate(-23 319.0 488.1)" fill="#fff" fill-opacity="0.11"/>
<ellipse cx="319.2" cy="488.4" rx="2.4" ry="3.5" transform="rotate(-23 319.2 488.4)" fill="#fff" fill-opacity="0.14"/>
<ellipse cx="284.6" cy="493.1" rx="4.0" ry="5.8" transform="rotate(-31 284.6 493.1)" fill="#fff" fill-opacity="0.19"/>
<ellipse cx="284.6" cy="493.5" rx="2.0" ry="2.8" transform="rotate(-31 284.6 493.5)" fill="#fff" fill-opacity="0.27"/>
<ellipse cx="300.0" cy="493.7" rx="4.3" ry="6.9" transform="rotate(-42 300.0 493.7)" fill="#fff" fill-opacity="0.11"/>
<ellipse cx="300.1" cy="494.0" rx="2.2" ry="3.4" transform="rotate(-42 300.1 494.0)" fill="#fff" fill-opacity="0.16"/>
<ellipse cx="275.8" cy="496.7" rx="4.1" ry="6.7" transform="rotate(-17 275.8 496.7)" fill="#fff" fill-opacity="0.17"/>
<ellipse cx="275.9" cy="496.6" rx="2.0" ry="3.3" transform="rotate(-17 275.9 496.6)" fill="#fff" fill-opacity="0.24"/>
<ellipse cx="267.7" cy="496.6" rx="4.1" ry="6.2" transform="rotate(-19 267.7 496.6)" fill="#fff" fill-opacity="0.26"/>
<ellipse cx="267.8" cy="496.9" rx="2.1" ry="3.0" transform="rotate(-19 267.8 496.9)" fill="#fff" fill-opacity="0.37"/>
<ellipse cx="259.5" cy="501.6" rx="3.4" ry="5.5" transform="rotate(-17 259.5 501.6)" fill="#fff" fill-opacity="0.33"/>
<ellipse cx="259.9" cy="501.6" rx="1.6" ry="2.6" transform="rotate(-17 259.9 501.6)" fill="#fff" fill-opacity="0.48"/>
<ellipse cx="290.8" cy="501.0" rx="4.0" ry="6.8" transform="rotate(-49 290.8 501.0)" fill="#fff" fill-opacity="0.24"/>
<ellipse cx="290.9" cy="501.1" rx="2.0" ry="3.4" transform="rotate(-49 290.9 501.1)" fill="#fff" fill-opacity="0.36"/>
<ellipse cx="241.2" cy="506.5" rx="3.5" ry="7.2" transform="rotate(-20 241.2 506.5)" fill="#fff" fill-opacity="0.17"/>
<ellipse cx="241.2" cy="506.5" rx="1.7" ry="3.6" transform="rotate(-20 241.2 506.5)" fill="#fff" fill-opacity="0.25"/>
<ellipse cx="317.9" cy="507.5" rx="4.4" ry="5.4" transform="rotate(-46 317.9 507.5)" fill="#fff" fill-opacity="0.12"/>
<ellipse cx="317.9" cy="507.7" rx="2.4" ry="2.7" transform="rotate(-46 317.9 507.7)" fill="#fff" fill-opacity="0.16"/>
<ellipse cx="322.5" cy="508.0" rx="4.4" ry="5.6" transform="rotate(-46 322.5 508.0)" fill="#fff" fill-opacity="0.20"/>
<ellipse cx="322.7" cy="508.2" rx="2.5" ry="2.9" transform="rotate(-46 322.7 508.2)" fill="#fff" fill-opacity="0.26"/>
<ellipse cx="254.9" cy="510.3" rx="3.8" ry="6.8" transform="rotate(-40 254.9 510.3)" fill="#fff" fill-opacity="0.11"/>
<ellipse cx="255.2" cy="510.3" rx="1.8" ry="3.4" transform="rotate(-40 255.2 510.3)" fill="#fff" fill-opacity="0.17"/>
<ellipse cx="249.9" cy="510.6" rx="3.8" ry="6.1" transform="rotate(-49 249.9 510.6)" fill="#fff" fill-opacity="0.26"/>
<ellipse cx="250.0" cy="510.9" rx="1.9" ry="3.0" transform="rotate(-49 250.0 510.9)" fill="#fff" fill-opacity="0.38"/>
<ellipse cx="296.7" cy="507.6" rx="4.2" ry="5.4" transform="rotate(-19 296.7 507.6)" fill="#fff" fill-opacity="0.20"/>
<ellipse cx="297.1" cy="508.2" rx="2.1" ry="2.5" transform="rotate(-19 297.1 508.2)" fill="#fff" fill-opacity="0.30"/>
<ellipse cx="310.1" cy="510.3" rx="4.0" ry="6.3" transform="rotate(-50 310.1 510.3)" fill="#fff" fill-opacity="0.23"/>
<ellipse cx="310.1" cy="510.7" rx="2.1" ry="3.2" transform="rotate(-50 310.1 510.7)" fill="#fff" fill-opacity="0.32"/>
<ellipse cx="258.9" cy="513.7" rx="3.7" ry="7.4" transform="rotate(-41 258.9 513.7)" fill="#fff" fill-opacity="0.17"/>
<ellipse cx="259.2" cy="513.9" rx="1.8" ry="3.7" transform="rotate(-41 259.2 513.9)" fill="#fff" fill-opacity="0.25"/>
<ellipse cx="274.2" cy="517.5" rx="4.1" ry="7.0" transform="rotate(-47 274.2 517.5)" fill="#fff" fill-opacity="0.13"/>
<ellipse cx="274.2" cy="517.7" rx="2.0" ry="3.5" transform="rotate(-47 274.2 517.7)" fill="#fff" fill-opacity="0.19"/>
<ellipse cx="241.3" cy="518.4" rx="4.3" ry="5.4" transform="rotate(-18 241.3 518.4)" fill="#fff" fill-opacity="0.18"/>
<ellipse cx="241.7" cy="518.8" rx="2.2" ry="2.5" transform="rotate(-18 241.7 518.8)" fill="#fff" fill-opacity="0.26"/>
<ellipse cx="299.3" cy="522.2" rx="3.6" ry="7.2" transform="rotate(-36 299.3 522.2)" fill="#fff" fill-opacity="0.27"/>
<ellipse cx="299.5" cy="522.4" rx="1.8" ry="3.6" transform="rotate(-36 299.5 522.4)" fill="#fff" fill-opacity="0.39"/>
<ellipse cx="251.3" cy="525.7" rx="3.6" ry="6.0" transform="rotate(-37 251.3 525.7)" fill="#fff" fill-opacity="0.24"/>
<ellipse cx="251.3" cy="525.9" rx="1.7" ry="2.9" transform="rotate(-37 251.3 525.9)" fill="#fff" fill-opacity="0.35"/>
<ellipse cx="287.4" cy="527.2" rx="3.5" ry="6.5" transform="rotate(-22 287.4 527.2)" fill="#fff" fill-opacity="0.14"/>
<ellipse cx="287.6" cy="527.3" rx="1.7" ry="3.2" transform="rotate(-22 287.6 527.3)" fill="#fff" fill-opacity="0.20"/>
<ellipse cx="256.7" cy="528.4" rx="3.6" ry="7.1" transform="rotate(-25 256.7 528.4)" fill="#fff" fill-opacity="0.14"/>
<ellipse cx="257.0" cy="528.8" rx="1.7" ry="3.6" transform="rotate(-25 257.0 528.8)" fill="#fff" fill-opacity="0.21"/>
<ellipse cx="270.9" cy="527.7" rx="4.4" ry="5.6" transform="rotate(-38 270.9 527.7)" fill="#fff" fill-opacity="0.20"/>
<ellipse cx="271.0" cy="528.2" rx="2.2" ry="2.7" transform="rotate(-38 271.0 528.2)" fill="#fff" fill-opacity="0.29"/>
<ellipse cx="300.3" cy="528.3" rx="4.1" ry="7.0" transform="rotate(-15 300.3 528.3)" fill="#fff" fill-opacity="0.13"/>
<ellipse cx="300.5" cy="528.7" rx="2.1" ry="3.5" transform="rotate(-15 300.5 528.7)" fill="#fff" fill-opacity="0.18"/>
<ellipse cx="312.1" cy="531.3" rx="4.0" ry="5.4" transform="rotate(-36 312.1 531.3)" fill="#fff" fill-opacity="0.12"/>
<ellipse cx="312.1" cy="531.5" rx="2.1" ry="2.7" transform="rotate(-36 312.1 531.5)" fill="#fff" fill-opacity="0.17"/>
<ellipse cx="240.9" cy="533.3" rx="3.8" ry="6.6" transform="rotate(-45 240.9 533.3)" fill="#fff" fill-opacity="0.22"/>
<ellipse cx="241.0" cy="533.3" rx="1.9" ry="3.2" transform="rotate(-45 241.0 533.3)" fill="#fff" fill-opacity="0.32"/>
<ellipse cx="331.8" cy="532.9" rx="4.4" ry="5.8" transform="rotate(-35 331.8 532.9)" fill="#fff" fill-opacity="0.18"/>
<ellipse cx="331.8" cy="533.0" rx="2.6" ry="3.2" transform="rotate(-35 331.8 533.0)" fill="#fff" fill-opacity="0.23"/>
<ellipse cx="318.9" cy="534.4" rx="4.0" ry="6.1" transform="rotate(-27 318.9 534.4)" fill="#fff" fill-opacity="0.24"/>
<ellipse cx="319.0" cy="534.8" rx="2.2" ry="3.2" transform="rotate(-27 319.0 534.8)" fill="#fff" fill-opacity="0.32"/>
<ellipse cx="310.6" cy="535.9" rx="4.0" ry="5.8" transform="rotate(-27 310.6 535.9)" fill="#fff" fill-opacity="0.24"/>
<ellipse cx="310.9" cy="536.1" rx="2.1" ry="2.9" transform="rotate(-27 310.9 536.1)" fill="#fff" fill-opacity="0.32"/>
<ellipse cx="278.3" cy="537.0" rx="4.2" ry="6.7" transform="rotate(-43 278.3 537.0)" fill="#fff" fill-opacity="0.23"/>
<ellipse cx="278.5" cy="537.3" rx="2.1" ry="3.3" transform="rotate(-43 278.5 537.3)" fill="#fff" fill-opacity="0.33"/>
<ellipse cx="247.5" cy="538.0" rx="4.3" ry="7.0" transform="rotate(-44 247.5 538.0)" fill="#fff" fill-opacity="0.12"/>
<ellipse cx="247.7" cy="538.5" rx="2.2" ry="3.5" transform="rotate(-44 247.7 538.5)" fill="#fff" fill-opacity="0.17"/>
<ellipse cx="326.7" cy="539.3" rx="4.5" ry="6.3" transform="rotate(-32 326.7 539.3)" fill="#fff" fill-opacity="0.18"/>
<ellipse cx="326.8" cy="539.5" rx="2.5" ry="3.5" transform="rotate(-32 326.8 539.5)" fill="#fff" fill-opacity="0.23"/>
<ellipse cx="268.4" cy="539.8" rx="3.5" ry="7.0" transform="rotate(-36 268.4 539.8)" fill="#fff" fill-opacity="0.15"/>
<ellipse cx="268.4" cy="540.1" rx="1.7" ry="3.5" transform="rotate(-36 268.4 540.1)" fill="#fff" fill-opacity="0.21"/>
<ellipse cx="284.0" cy="541.4" rx="4.1" ry="6.2" transform="rotate(-35 284.0 541.4)" fill="#fff" fill-opacity="0.29"/>
<ellipse cx="284.3" cy="541.8" rx="2.0" ry="3.0" transform="rotate(-35 284.3 541.8)" fill="#fff" fill-opacity="0.42"/>
<ellipse cx="275.1" cy="543.3" rx="4.2" ry="5.7" transform="rotate(-31 275.1 543.3)" fill="#fff" fill-opacity="0.24"/>
<ellipse cx="275.4" cy="543.8" rx="2.1" ry="2.7" transform="rotate(-31 275.4 543.8)" fill="#fff" fill-opacity="0.35"/>
<ellipse cx="282.8" cy="551.4" rx="4.0" ry="6.3" transform="rotate(-27 282.8 551.4)" fill="#fff" fill-opacity="0.25"/>
<ellipse cx="283.2" cy="551.4" rx="2.0" ry="3.0" transform="rotate(-27 283.2 551.4)" fill="#fff" fill-opacity="0.36"/>
<ellipse cx="246.5" cy="552.2" rx="3.7" ry="6.3" transform="rotate(-21 246.5 552.2)" fill="#fff" fill-opacity="0.22"/>
<ellipse cx="246.7" cy="552.7" rx="1.8" ry="3.0" transform="rotate(-21 246.7 552.7)" fill="#fff" fill-opacity="0.32"/>
<ellipse cx="295.2" cy="553.1" rx="3.7" ry="6.1" transform="rotate(-40 295.2 553.1)" fill="#fff" fill-opacity="0.17"/>
<ellipse cx="295.5" cy="553.5" rx="1.8" ry="2.9" transform="rotate(-40 295.5 553.5)" fill="#fff" fill-opacity="0.25"/>
<ellipse cx="301.8" cy="559.6" rx="3.9" ry="6.3" transform="rotate(-39 301.8 559.6)" fill="#fff" fill-opacity="0.16"/>
<ellipse cx="302.0" cy="559.8" rx="1.9" ry="3.1" transform="rotate(-39 302.0 559.8)" fill="#fff" fill-opacity="0.23"/>
<ellipse cx="324.1" cy="560.4" rx="4.4" ry="6.8" transform="rotate(-48 324.1 560.4)" fill="#fff" fill-opacity="0.25"/>
<ellipse cx="324.2" cy="560.8" rx="2.4" ry="3.6" transform="rotate(-48 324.2 560.8)" fill="#fff" fill-opacity="0.34"/>
<ellipse cx="280.8" cy="560.9" rx="4.1" ry="7.4" transform="rotate(-50 280.8 560.9)" fill="#fff" fill-opacity="0.33"/>
<ellipse cx="281.1" cy="561.4" rx="2.0" ry="3.7" transform="rotate(-50 281.1 561.4)" fill="#fff" fill-opacity="0.48"/>
<ellipse cx="319.2" cy="565.4" rx="4.4" ry="5.6" transform="rotate(-38 319.2 565.4)" fill="#fff" fill-opacity="0.14"/>
<ellipse cx="319.3" cy="565.8" rx="2.3" ry="2.8" transform="rotate(-38 319.3 565.8)" fill="#fff" fill-opacity="0.20"/>
<ellipse cx="331.8" cy="564.4" rx="4.4" ry="6.8" transform="rotate(-26 331.8 564.4)" fill="#fff" fill-opacity="0.20"/>
<ellipse cx="331.9" cy="564.8" rx="2.4" ry="3.7" transform="rotate(-26 331.9 564.8)" fill="#fff" fill-opacity="0.26"/>
<ellipse cx="297.8" cy="566.3" rx="4.0" ry="7.2" transform="rotate(-34 297.8 566.3)" fill="#fff" fill-opacity="0.20"/>
<ellipse cx="298.1" cy="566.7" rx="2.0" ry="3.6" transform="rotate(-34 298.1 566.7)" fill="#fff" fill-opacity="0.30"/>
<ellipse cx="324.4" cy="570.2" rx="4.1" ry="5.6" transform="rotate(-33 324.4 570.2)" fill="#fff" fill-opacity="0.29"/>
<ellipse cx="324.6" cy="570.5" rx="2.2" ry="2.8" transform="rotate(-33 324.6 570.5)" fill="#fff" fill-opacity="0.39"/>
<ellipse cx="259.4" cy="569.6" rx="4.1" ry="6.5" transform="rotate(-33 259.4 569.6)" fill="#fff" fill-opacity="0.11"/>
<ellipse cx="259.4" cy="570.0" rx="2.0" ry="3.2" transform="rotate(-33 259.4 570.0)" fill="#fff" fill-opacity="0.16"/>
<ellipse cx="250.7" cy="571.6" rx="3.4" ry="6.7" transform="rotate(-27 250.7 571.6)" fill="#fff" fill-opacity="0.39"/>
<ellipse cx="250.8" cy="571.8" rx="1.6" ry="3.3" transform="rotate(-27 250.8 571.8)" fill="#fff" fill-opacity="0.57"/>
<ellipse cx="277.4" cy="575.7" rx="4.3" ry="6.3" transform="rotate(-32 277.4 575.7)" fill="#fff" fill-opacity="0.17"/>
<ellipse cx="277.9" cy="575.9" rx="2.2" ry="3.1" transform="rotate(-32 277.9 575.9)" fill="#fff" fill-opacity="0.24"/>
<ellipse cx="305.0" cy="574.3" rx="4.0" ry="6.3" transform="rotate(-37 305.0 574.3)" fill="#fff" fill-opacity="0.17"/>
<ellipse cx="305.1" cy="574.7" rx="2.0" ry="3.1" transform="rotate(-37 305.1 574.7)" fill="#fff" fill-opacity="0.24"/>
<ellipse cx="275.2" cy="582.2" rx="4.2" ry="5.9" transform="rotate(-20 275.2 582.2)" fill="#fff" fill-opacity="0.18"/>
<ellipse cx="275.4" cy="582.5" rx="2.1" ry="2.8" transform="rotate(-20 275.4 582.5)" fill="#fff" fill-opacity="0.27"/>
<ellipse cx="289.9" cy="581.6" rx="3.7" ry="7.0" transform="rotate(-26 289.9 581.6)" fill="#fff" fill-opacity="0.20"/>
<ellipse cx="290.2" cy="582.0" rx="1.8" ry="3.5" transform="rotate(-26 290.2 582.0)" fill="#fff" fill-opacity="0.29"/>
<ellipse cx="312.7" cy="579.1" rx="4.3" ry="6.8" transform="rotate(-49 312.7 579.1)" fill="#fff" fill-opacity="0.22"/>
<ellipse cx="312.9" cy="579.6" rx="2.2" ry="3.4" transform="rotate(-49 312.9 579.6)" fill="#fff" fill-opacity="0.31"/>
<ellipse cx="266.1" cy="586.5" rx="4.1" ry="6.6" transform="rotate(-17 266.1 586.5)" fill="#fff" fill-opacity="0.11"/>
<ellipse cx="266.1" cy="586.5" rx="2.0" ry="3.2" transform="rotate(-17 266.1 586.5)" fill="#fff" fill-opacity="0.16"/>
<ellipse cx="281.8" cy="589.6" rx="4.1" ry="6.6" transform="rotate(-25 281.8 589.6)" fill="#fff" fill-opacity="0.22"/>
<ellipse cx="282.1" cy="589.7" rx="2.0" ry="3.2" transform="rotate(-25 282.1 589.7)" fill="#fff" fill-opacity="0.32"/>
<ellipse cx="261.4" cy="592.6" rx="4.2" ry="5.3" transform="rotate(-43 261.4 592.6)" fill="#fff" fill-opacity="0.24"/>
<ellipse cx="261.4" cy="592.8" rx="2.1" ry="2.5" transform="rotate(-43 261.4 592.8)" fill="#fff" fill-opacity="0.36"/>
<ellipse cx="313.5" cy="592.8" rx="3.8" ry="5.8" transform="rotate(-30 313.5 592.8)" fill="#fff" fill-opacity="0.25"/>
<ellipse cx="313.7" cy="593.2" rx="1.9" ry="2.8" transform="rotate(-30 313.7 593.2)" fill="#fff" fill-opacity="0.36"/>
<ellipse cx="251.5" cy="597.1" rx="3.4" ry="6.5" transform="rotate(-48 251.5 597.1)" fill="#fff" fill-opacity="0.22"/>
<ellipse cx="251.9" cy="597.1" rx="1.6" ry="3.2" transform="rotate(-48 251.9 597.1)" fill="#fff" fill-opacity="0.32"/>
<ellipse cx="298.6" cy="604.6" rx="4.0" ry="6.1" transform="rotate(-49 298.6 604.6)" fill="#fff" fill-opacity="0.27"/>
<ellipse cx="298.5" cy="604.6" rx="2.0" ry="2.9" transform="rotate(-49 298.5 604.6)" fill="#fff" fill-opacity="0.40"/>
<ellipse cx="322.4" cy="600.7" rx="3.6" ry="5.7" transform="rotate(-27 322.4 600.7)" fill="#fff" fill-opacity="0.18"/>
<ellipse cx="322.8" cy="601.3" rx="1.7" ry="2.7" transform="rotate(-27 322.8 601.3)" fill="#fff" fill-opacity="0.26"/>
<ellipse cx="302.4" cy="608.9" rx="3.5" ry="7.2" transform="rotate(-47 302.4 608.9)" fill="#fff" fill-opacity="0.13"/>
<ellipse cx="302.8" cy="609.0" rx="1.7" ry="3.6" transform="rotate(-47 302.8 609.0)" fill="#fff" fill-opacity="0.19"/>
<ellipse cx="276.2" cy="610.0" rx="4.1" ry="7.0" transform="rotate(-48 276.2 610.0)" fill="#fff" fill-opacity="0.24"/>
<ellipse cx="276.3" cy="610.1" rx="2.1" ry="3.5" transform="rotate(-48 276.3 610.1)" fill="#fff" fill-opacity="0.35"/>
<ellipse cx="246.1" cy="611.7" rx="4.4" ry="5.8" transform="rotate(-16 246.1 611.7)" fill="#fff" fill-opacity="0.23"/>
<ellipse cx="246.2" cy="612.3" rx="2.2" ry="2.8" transform="rotate(-16 246.2 612.3)" fill="#fff" fill-opacity="0.34"/>
<ellipse cx="296.3" cy="614.0" rx="3.6" ry="6.9" transform="rotate(-39 296.3 614.0)" fill="#fff" fill-opacity="0.36"/>
<ellipse cx="296.3" cy="614.3" rx="1.7" ry="3.4" transform="rotate(-39 296.3 614.3)" fill="#fff" fill-opacity="0.53"/>
<ellipse cx="267.2" cy="618.7" rx="4.2" ry="5.5" transform="rotate(-26 267.2 618.7)" fill="#fff" fill-opacity="0.21"/>
<ellipse cx="267.4" cy="618.9" rx="2.1" ry="2.6" transform="rotate(-26 267.4 618.9)" fill="#fff" fill-opacity="0.31"/>
<ellipse cx="284.7" cy="618.5" rx="4.2" ry="7.4" transform="rotate(-22 284.7 618.5)" fill="#fff" fill-opacity="0.18"/>
<ellipse cx="284.9" cy="618.9" rx="2.1" ry="3.7" transform="rotate(-22 284.9 618.9)" fill="#fff" fill-opacity="0.27"/>
<ellipse cx="310.4" cy="625.4" rx="4.4" ry="6.6" transform="rotate(-38 310.4 625.4)" fill="#fff" fill-opacity="0.23"/>
<ellipse cx="310.5" cy="625.6" rx="2.2" ry="3.2" transform="rotate(-38 310.5 625.6)" fill="#fff" fill-opacity="0.34"/>
<ellipse cx="246.5" cy="631.0" rx="4.0" ry="6.8" transform="rotate(-36 246.5 631.0)" fill="#fff" fill-opacity="0.19"/>
<ellipse cx="246.5" cy="631.0" rx="2.0" ry="3.3" transform="rotate(-36 246.5 631.0)" fill="#fff" fill-opacity="0.27"/>
<ellipse cx="308.4" cy="628.7" rx="4.2" ry="6.5" transform="rotate(-35 308.4 628.7)" fill="#fff" fill-opacity="0.11"/>
<ellipse cx="308.5" cy="629.2" rx="2.1" ry="3.2" transform="rotate(-35 308.5 629.2)" fill="#fff" fill-opacity="0.16"/>
<ellipse cx="260.3" cy="633.5" rx="4.3" ry="5.8" transform="rotate(-29 260.3 633.5)" fill="#fff" fill-opacity="0.25"/>
<ellipse cx="260.4" cy="633.7" rx="2.1" ry="2.8" transform="rotate(-29 260.4 633.7)" fill="#fff" fill-opacity="0.37"/>
<ellipse cx="282.0" cy="638.5" rx="3.6" ry="7.0" transform="rotate(-30 282.0 638.5)" fill="#fff" fill-opacity="0.17"/>
<ellipse cx="282.1" cy="638.5" rx="1.7" ry="3.5" transform="rotate(-30 282.1 638.5)" fill="#fff" fill-opacity="0.25"/>
<ellipse cx="252.1" cy="642.1" rx="3.7" ry="5.7" transform="rotate(-33 252.1 642.1)" fill="#fff" fill-opacity="0.22"/>
<ellipse cx="252.2" cy="642.2" rx="1.8" ry="2.7" transform="rotate(-33 252.2 642.2)" fill="#fff" fill-opacity="0.32"/>
<ellipse cx="265.3" cy="642.4" rx="4.0" ry="5.7" transform="rotate(-22 265.3 642.4)" fill="#fff" fill-opacity="0.13"/>
<ellipse cx="265.3" cy="642.4" rx="2.0" ry="2.7" transform="rotate(-22 265.3 642.4)" fill="#fff" fill-opacity="0.18"/>
<ellipse cx="270.9" cy="642.6" rx="3.6" ry="5.6" transform="rotate(-43 270.9 642.6)" fill="#fff" fill-opacity="0.19"/>
<ellipse cx="271.0" cy="642.9" rx="1.7" ry="2.7" transform="rotate(-43 271.0 642.9)" fill="#fff" fill-opacity="0.28"/>
<ellipse cx="294.3" cy="646.9" rx="4.4" ry="5.3" transform="rotate(-45 294.3 646.9)" fill="#fff" fill-opacity="0.18"/>
<ellipse cx="294.5" cy="647.4" rx="2.2" ry="2.5" transform="rotate(-45 294.5 647.4)" fill="#fff" fill-opacity="0.26"/>
<ellipse cx="303.4" cy="645.8" rx="3.9" ry="6.0" transform="rotate(-29 303.4 645.8)" fill="#fff" fill-opacity="0.25"/>
<ellipse cx="303.8" cy="646.4" rx="1.9" ry="2.9" transform="rotate(-29 303.8 646.4)" fill="#fff" fill-opacity="0.36"/>
<ellipse cx="317.3" cy="647.5" rx="4.2" ry="5.8" transform="rotate(-30 317.3 647.5)" fill="#fff" fill-opacity="0.26"/>
<ellipse cx="317.6" cy="647.5" rx="2.1" ry="2.8" transform="rotate(-30 317.6 647.5)" fill="#fff" fill-opacity="0.38"/>
<ellipse cx="329.3" cy="646.0" rx="3.6" ry="5.3" transform="rotate(-41 329.3 646.0)" fill="#fff" fill-opacity="0.25"/>
<ellipse cx="329.6" cy="646.5" rx="1.7" ry="2.5" transform="rotate(-41 329.6 646.5)" fill="#fff" fill-opacity="0.37"/>
<ellipse cx="261.6" cy="651.9" rx="3.5" ry="7.3" transform="rotate(-16 261.6 651.9)" fill="#fff" fill-opacity="0.26"/>
<ellipse cx="261.8" cy="652.2" rx="1.7" ry="3.7" transform="rotate(-16 261.8 652.2)" fill="#fff" fill-opacity="0.38"/>
<ellipse cx="261.1" cy="665.0" rx="4.1" ry="7.4" transform="rotate(-27 261.1 665.0)" fill="#fff" fill-opacity="0.16"/>
<ellipse cx="261.4" cy="665.3" rx="2.0" ry="3.7" transform="rotate(-27 261.4 665.3)" fill="#fff" fill-opacity="0.23"/>
<ellipse cx="321.2" cy="668.2" rx="3.7" ry="5.3" transform="rotate(-42 321.2 668.2)" fill="#fff" fill-opacity="0.28"/>
<ellipse cx="321.4" cy="668.2" rx="1.8" ry="2.5" transform="rotate(-42 321.4 668.2)" fill="#fff" fill-opacity="0.41"/>
<ellipse cx="274.7" cy="670.0" rx="4.0" ry="6.8" transform="rotate(-22 274.7 670.0)" fill="#fff" fill-opacity="0.37"/>
<ellipse cx="274.6" cy="670.5" rx="2.0" ry="3.4" transform="rotate(-22 274.6 670.5)" fill="#fff" fill-opacity="0.53"/>
<ellipse cx="285.2" cy="673.0" rx="4.0" ry="5.9" transform="rotate(-26 285.2 673.0)" fill="#fff" fill-opacity="0.24"/>
<ellipse cx="285.2" cy="673.5" rx="2.0" ry="2.8" transform="rotate(-26 285.2 673.5)" fill="#fff" fill-opacity="0.35"/>
<ellipse cx="241.6" cy="676.7" rx="3.6" ry="5.6" transform="rotate(-33 241.6 676.7)" fill="#fff" fill-opacity="0.16"/>
<ellipse cx="241.9" cy="676.9" rx="1.8" ry="2.6" transform="rotate(-33 241.9 676.9)" fill="#fff" fill-opacity="0.23"/>
<ellipse cx="268.4" cy="679.4" rx="4.3" ry="5.7" transform="rotate(-17 268.4 679.4)" fill="#fff" fill-opacity="0.25"/>
<ellipse cx="268.4" cy="679.5" rx="2.2" ry="2.7" transform="rotate(-17 268.4 679.5)" fill="#fff" fill-opacity="0.37"/>
<ellipse cx="256.3" cy="678.6" rx="4.0" ry="7.1" transform="rotate(-17 256.3 678.6)" fill="#fff" fill-opacity="0.19"/>
<ellipse cx="256.5" cy="679.0" rx="2.0" ry="3.6" transform="rotate(-17 256.5 679.0)" fill="#fff" fill-opacity="0.27"/>
<ellipse cx="250.9" cy="683.3" rx="3.5" ry="5.7" transform="rotate(-45 250.9 683.3)" fill="#fff" fill-opacity="0.19"/>
<ellipse cx="251.0" cy="683.5" rx="1.6" ry="2.7" transform="rotate(-45 251.0 683.5)" fill="#fff" fill-opacity="0.28"/>
<ellipse cx="296.2" cy="686.8" rx="3.7" ry="5.6" transform="rotate(-35 296.2 686.8)" fill="#fff" fill-opacity="0.26"/>
<ellipse cx="296.3" cy="687.2" rx="1.8" ry="2.6" transform="rotate(-35 296.3 687.2)" fill="#fff" fill-opacity="0.38"/>
<ellipse cx="276.4" cy="689.3" rx="4.4" ry="5.5" transform="rotate(-17 276.4 689.3)" fill="#fff" fill-opacity="0.20"/>
<ellipse cx="276.8" cy="689.3" rx="2.2" ry="2.6" transform="rotate(-17 276.8 689.3)" fill="#fff" fill-opacity="0.29"/>
<ellipse cx="253.2" cy="693.8" rx="3.6" ry="5.8" transform="rotate(-40 253.2 693.8)" fill="#fff" fill-opacity="0.15"/>
<ellipse cx="253.4" cy="693.7" rx="1.7" ry="2.8" transform="rotate(-40 253.4 693.7)" fill="#fff" fill-opacity="0.21"/>
<ellipse cx="308.1" cy="694.5" rx="3.5" ry="7.3" transform="rotate(-40 308.1 694.5)" fill="#fff" fill-opacity="0.27"/>
<ellipse cx="308.1" cy="694.9" rx="1.6" ry="3.6" transform="rotate(-40 308.1 694.9)" fill="#fff" fill-opacity="0.40"/>
<ellipse cx="325.4" cy="695.2" rx="3.4" ry="5.5" transform="rotate(-38 325.4 695.2)" fill="#fff" fill-opacity="0.11"/>
<ellipse cx="325.4" cy="695.5" rx="1.6" ry="2.6" transform="rotate(-38 325.4 695.5)" fill="#fff" fill-opacity="0.16"/>
<ellipse cx="277.8" cy="698.9" rx="3.5" ry="6.5" transform="rotate(-42 277.8 698.9)" fill="#fff" fill-opacity="0.19"/>
<ellipse cx="278.1" cy="699.0" rx="1.7" ry="3.2" transform="rotate(-42 278.1 699.0)" fill="#fff" fill-opacity="0.27"/>
<ellipse cx="254.0" cy="702.3" rx="3.9" ry="6.6" transform="rotate(-47 254.0 702.3)" fill="#fff" fill-opacity="0.25"/>
<ellipse cx="254.3" cy="702.7" rx="1.9" ry="3.2" transform="rotate(-47 254.3 702.7)" fill="#fff" fill-opacity="0.37"/>
<ellipse cx="259.1" cy="705.9" rx="3.5" ry="5.7" transform="rotate(-29 259.1 705.9)" fill="#fff" fill-opacity="0.23"/>
<ellipse cx="259.2" cy="706.2" rx="1.7" ry="2.7" transform="rotate(-29 259.2 706.2)" fill="#fff" fill-opacity="0.34"/>
<ellipse cx="271.5" cy="705.8" rx="4.3" ry="7.1" transform="rotate(-38 271.5 705.8)" fill="#fff" fill-opacity="0.12"/>
<ellipse cx="271.7" cy="706.3" rx="2.1" ry="3.6" transform="rotate(-38 271.7 706.3)" fill="#fff" fill-opacity="0.17"/>
<ellipse cx="304.2" cy="704.1" rx="4.2" ry="5.6" transform="rotate(-40 304.2 704.1)" fill="#fff" fill-opacity="0.19"/>
<ellipse cx="304.5" cy="704.6" rx="2.1" ry="2.7" transform="rotate(-40 304.5 704.6)" fill="#fff" fill-opacity="0.28"/>
<ellipse cx="244.7" cy="709.8" rx="3.9" ry="6.2" transform="rotate(-31 244.7 709.8)" fill="#fff" fill-opacity="0.32"/>
<ellipse cx="245.1" cy="709.9" rx="1.9" ry="3.0" transform="rotate(-31 245.1 709.9)" fill="#fff" fill-opacity="0.47"/>
<ellipse cx="249.4" cy="713.2" rx="4.2" ry="6.1" transform="rotate(-24 249.4 713.2)" fill="#fff" fill-opacity="0.26"/>
<ellipse cx="249.8" cy="713.2" rx="2.1" ry="2.9" transform="rotate(-24 249.8 713.2)" fill="#fff" fill-opacity="0.38"/>
<ellipse cx="303.6" cy="713.3" rx="3.4" ry="6.4" transform="rotate(-31 303.6 713.3)" fill="#fff" fill-opacity="0.20"/>
<ellipse cx="303.6" cy="713.7" rx="1.6" ry="3.1" transform="rotate(-31 303.6 713.7)" fill="#fff" fill-opacity="0.29"/>
<ellipse cx="313.0" cy="713.2" rx="3.5" ry="5.3" transform="rotate(-21 313.0 713.2)" fill="#fff" fill-opacity="0.13"/>
<ellipse cx="313.2" cy="713.6" rx="1.7" ry="2.4" transform="rotate(-21 313.2 713.6)" fill="#fff" fill-opacity="0.19"/>
<ellipse cx="332.0" cy="713.3" rx="4.3" ry="5.4" transform="rotate(-25 332.0 713.3)" fill="#fff" fill-opacity="0.21"/>
<ellipse cx="332.1" cy="713.8" rx="2.2" ry="2.5" transform="rotate(-25 332.1 713.8)" fill="#fff" fill-opacity="0.31"/>
<ellipse cx="294.5" cy="718.4" rx="3.8" ry="5.5" transform="rotate(-40 294.5 718.4)" fill="#fff" fill-opacity="0.20"/>
<ellipse cx="294.9" cy="718.6" rx="1.9" ry="2.6" transform="rotate(-40 294.9 718.6)" fill="#fff" fill-opacity="0.29"/>
<ellipse cx="303.5" cy="719.9" rx="4.2" ry="5.6" transform="rotate(-23 303.5 719.9)" fill="#fff" fill-opacity="0.14"/>
<ellipse cx="303.5" cy="720.2" rx="2.1" ry="2.6" transform="rotate(-23 303.5 720.2)" fill="#fff" fill-opacity="0.20"/>
<ellipse cx="241.3" cy="718.4" rx="4.2" ry="7.4" transform="rotate(-36 241.3 718.4)" fill="#fff" fill-opacity="0.26"/>
<ellipse cx="241.6" cy="718.8" rx="2.1" ry="3.7" transform="rotate(-36 241.6 718.8)" fill="#fff" fill-opacity="0.37"/>
<ellipse cx="272.3" cy="719.7" rx="4.2" ry="7.3" transform="rotate(-21 272.3 719.7)" fill="#fff" fill-opacity="0.19"/>
<ellipse cx="272.4" cy="720.2" rx="2.1" ry="3.7" transform="rotate(-21 272.4 720.2)" fill="#fff" fill-opacity="0.27"/>
<ellipse cx="290.0" cy="726.3" rx="4.0" ry="6.2" transform="rotate(-41 290.0 726.3)" fill="#fff" fill-opacity="0.28"/>
<ellipse cx="290.3" cy="726.5" rx="2.0" ry="3.0" transform="rotate(-41 290.3 726.5)" fill="#fff" fill-opacity="0.41"/>
<ellipse cx="251.5" cy="729.6" rx="4.2" ry="7.4" transform="rotate(-45 251.5 729.6)" fill="#fff" fill-opacity="0.31"/>
<ellipse cx="251.5" cy="729.7" rx="2.1" ry="3.7" transform="rotate(-45 251.5 729.7)" fill="#fff" fill-opacity="0.45"/>
<ellipse cx="266.9" cy="728.5" rx="3.7" ry="6.7" transform="rotate(-49 266.9 728.5)" fill="#fff" fill-opacity="0.27"/>
<ellipse cx="267.0" cy="728.9" rx="1.8" ry="3.3" transform="rotate(-49 267.0 728.9)" fill="#fff" fill-opacity="0.39"/>
<ellipse cx="302.6" cy="728.5" rx="3.8" ry="6.4" transform="rotate(-41 302.6 728.5)" fill="#fff" fill-opacity="0.27"/>
<ellipse cx="302.6" cy="728.9" rx="1.9" ry="3.1" transform="rotate(-41 302.6 728.9)" fill="#fff" fill-opacity="0.40"/>
<ellipse cx="246.9" cy="736.1" rx="3.9" ry="7.4" transform="rotate(-29 246.9 736.1)" fill="#fff" fill-opacity="0.22"/>
<ellipse cx="247.2" cy="736.4" rx="1.9" ry="3.7" transform="rotate(-29 247.2 736.4)" fill="#fff" fill-opacity="0.33"/>
<ellipse cx="273.0" cy="737.3" rx="3.8" ry="5.9" transform="rotate(-45 273.0 737.3)" fill="#fff" fill-opacity="0.14"/>
<ellipse cx="273.3" cy="737.8" rx="1.9" ry="2.8" transform="rotate(-45 273.3 737.8)" fill="#fff" fill-opacity="0.20"/>
<ellipse cx="290.9" cy="743.0" rx="3.6" ry="6.7" transform="rotate(-29 290.9 743.0)" fill="#fff" fill-opacity="0.26"/>
<ellipse cx="290.9" cy="743.3" rx="1.7" ry="3.3" transform="rotate(-29 290.9 743.3)" fill="#fff" fill-opacity="0.37"/>
<ellipse cx="321.6" cy="744.8" rx="3.6" ry="5.8" transform="rotate(-39 321.6 744.8)" fill="#fff" fill-opacity="0.22"/>
<ellipse cx="321.7" cy="745.1" rx="1.7" ry="2.7" transform="rotate(-39 321.7 745.1)" fill="#fff" fill-opacity="0.32"/>
<ellipse cx="328.6" cy="745.6" rx="4.0" ry="5.7" transform="rotate(-19 328.6 745.6)" fill="#fff" fill-opacity="0.11"/>
<ellipse cx="328.8" cy="746.0" rx="2.0" ry="2.7" transform="rotate(-19 328.8 746.0)" fill="#fff" fill-opacity="0.16"/>
<ellipse cx="283.4" cy="745.7" rx="4.3" ry="5.4" transform="rotate(-44 283.4 745.7)" fill="#fff" fill-opacity="0.16"/>
<ellipse cx="283.6" cy="746.3" rx="2.2" ry="2.5" transform="rotate(-44 283.6 746.3)" fill="#fff" fill-opacity="0.24"/>
<ellipse cx="288.1" cy="750.2" rx="4.4" ry="5.7" transform="rotate(-46 288.1 750.2)" fill="#fff" fill-opacity="0.19"/>
<ellipse cx="288.2" cy="750.7" rx="2.2" ry="2.7" transform="rotate(-46 288.2 750.7)" fill="#fff" fill-opacity="0.27"/>
<ellipse cx="279.4" cy="753.8" rx="4.2" ry="7.2" transform="rotate(-28 279.4 753.8)" fill="#fff" fill-opacity="0.17"/>
<ellipse cx="279.6" cy="753.9" rx="2.1" ry="3.6" transform="rotate(-28 279.6 753.9)" fill="#fff" fill-opacity="0.25"/>
<ellipse cx="300.6" cy="754.2" rx="4.3" ry="6.8" transform="rotate(-22 300.6 754.2)" fill="#fff" fill-opacity="0.24"/>
<ellipse cx="301.0" cy="754.2" rx="2.2" ry="3.4" transform="rotate(-22 301.0 754.2)" fill="#fff" fill-opacity="0.35"/>
<ellipse cx="311.4" cy="758.2" rx="3.8" ry="6.5" transform="rotate(-15 311.4 758.2)" fill="#fff" fill-opacity="0.21"/>
<ellipse cx="311.4" cy="758.2" rx="1.9" ry="3.2" transform="rotate(-15 311.4 758.2)" fill="#fff" fill-opacity="0.31"/>
<ellipse cx="248.3" cy="762.9" rx="3.7" ry="6.9" transform="rotate(-34 248.3 762.9)" fill="#fff" fill-opacity="0.18"/>
<ellipse cx="248.5" cy="763.1" rx="1.8" ry="3.4" transform="rotate(-34 248.5 763.1)" fill="#fff" fill-opacity="0.26"/>
<ellipse cx="280.6" cy="760.5" rx="3.8" ry="6.3" transform="rotate(-19 280.6 760.5)" fill="#fff" fill-opacity="0.17"/>
<ellipse cx="281.0" cy="760.9" rx="1.9" ry="3.1" transform="rotate(-19 281.0 760.9)" fill="#fff" fill-opacity="0.24"/>
<ellipse cx="268.3" cy="767.3" rx="3.7" ry="7.3" transform="rotate(-47 268.3 767.3)" fill="#fff" fill-opacity="0.21"/>
<ellipse cx="268.3" cy="767.4" rx="1.8" ry="3.7" transform="rotate(-47 268.3 767.4)" fill="#fff" fill-opacity="0.31"/>
<ellipse cx="240.8" cy="769.2" rx="3.4" ry="5.2" transform="rotate(-17 240.8 769.2)" fill="#fff" fill-opacity="0.15"/>
<ellipse cx="241.0" cy="769.4" rx="1.6" ry="2.4" transform="rotate(-17 241.0 769.4)" fill="#fff" fill-opacity="0.21"/>
<ellipse cx="269.8" cy="775.8" rx="3.9" ry="6.4" transform="rotate(-14 269.8 775.8)" fill="#fff" fill-opacity="0.25"/>
<ellipse cx="269.9" cy="776.1" rx="1.9" ry="3.1" transform="rotate(-14 269.9 776.1)" fill="#fff" fill-opacity="0.36"/>
<ellipse cx="317.6" cy="778.9" rx="3.9" ry="6.8" transform="rotate(-16 317.6 778.9)" fill="#fff" fill-opacity="0.21"/>
<ellipse cx="318.0" cy="779.2" rx="1.9" ry="3.3" transform="rotate(-16 318.0 779.2)" fill="#fff" fill-opacity="0.31"/>
<ellipse cx="281.2" cy="781.5" rx="3.9" ry="7.4" transform="rotate(-18 281.2 781.5)" fill="#fff" fill-opacity="0.21"/>
<ellipse cx="281.5" cy="781.6" rx="1.9" ry="3.7" transform="rotate(-18 281.5 781.6)" fill="#fff" fill-opacity="0.30"/>
<ellipse cx="301.6" cy="782.1" rx="3.7" ry="5.6" transform="rotate(-21 301.6 782.1)" fill="#fff" fill-opacity="0.17"/>
<ellipse cx="301.6" cy="782.1" rx="1.8" ry="2.6" transform="rotate(-21 301.6 782.1)" fill="#fff" fill-opacity="0.25"/>
<ellipse cx="332.5" cy="782.9" rx="4.4" ry="7.1" transform="rotate(-25 332.5 782.9)" fill="#fff" fill-opacity="0.13"/>
<ellipse cx="332.5" cy="783.3" rx="2.2" ry="3.5" transform="rotate(-25 332.5 783.3)" fill="#fff" fill-opacity="0.19"/>
<ellipse cx="265.7" cy="786.4" rx="3.6" ry="5.6" transform="rotate(-32 265.7 786.4)" fill="#fff" fill-opacity="0.16"/>
<ellipse cx="265.8" cy="786.6" rx="1.7" ry="2.7" transform="rotate(-32 265.8 786.6)" fill="#fff" fill-opacity="0.23"/>
<ellipse cx="294.9" cy="786.7" rx="4.2" ry="6.1" transform="rotate(-48 294.9 786.7)" fill="#fff" fill-opacity="0.28"/>
<ellipse cx="295.2" cy="786.9" rx="2.1" ry="3.0" transform="rotate(-48 295.2 786.9)" fill="#fff" fill-opacity="0.41"/>
<ellipse cx="256.6" cy="788.5" rx="3.9" ry="5.7" transform="rotate(-26 256.6 788.5)" fill="#fff" fill-opacity="0.26"/>
<ellipse cx="256.7" cy="788.9" rx="1.9" ry="2.7" transform="rotate(-26 256.7 788.9)" fill="#fff" fill-opacity="0.38"/>
<ellipse cx="278.6" cy="790.8" rx="3.5" ry="6.1" transform="rotate(-29 278.6 790.8)" fill="#fff" fill-opacity="0.20"/>
<ellipse cx="278.9" cy="790.9" rx="1.7" ry="3.0" transform="rotate(-29 278.9 790.9)" fill="#fff" fill-opacity="0.30"/>
<ellipse cx="257.4" cy="798.0" rx="3.5" ry="7.1" transform="rotate(-28 257.4 798.0)" fill="#fff" fill-opacity="0.20"/>
<ellipse cx="257.8" cy="798.1" rx="1.7" ry="3.5" transform="rotate(-28 257.8 798.1)" fill="#fff" fill-opacity="0.29"/>
<ellipse cx="267.4" cy="797.4" rx="3.5" ry="5.8" transform="rotate(-44 267.4 797.4)" fill="#fff" fill-opacity="0.24"/>
<ellipse cx="267.4" cy="797.7" rx="1.7" ry="2.8" transform="rotate(-44 267.4 797.7)" fill="#fff" fill-opacity="0.34"/>
<ellipse cx="296.5" cy="798.0" rx="4.0" ry="7.2" transform="rotate(-48 296.5 798.0)" fill="#fff" fill-opacity="0.19"/>
<ellipse cx="296.5" cy="798.3" rx="2.0" ry="3.6" transform="rotate(-48 296.5 798.3)" fill="#fff" fill-opacity="0.28"/>
<ellipse cx="250.3" cy="804.1" rx="3.7" ry="7.2" transform="rotate(-16 250.3 804.1)" fill="#fff" fill-opacity="0.26"/>
<ellipse cx="250.3" cy="804.2" rx="1.8" ry="3.6" transform="rotate(-16 250.3 804.2)" fill="#fff" fill-opacity="0.38"/>
<ellipse cx="310.4" cy="803.9" rx="3.6" ry="7.4" transform="rotate(-32 310.4 803.9)" fill="#fff" fill-opacity="0.22"/>
<ellipse cx="310.7" cy="804.0" rx="1.8" ry="3.7" transform="rotate(-32 310.7 804.0)" fill="#fff" fill-opacity="0.31"/>
<ellipse cx="257.8" cy="805.7" rx="3.6" ry="7.0" transform="rotate(-33 257.8 805.7)" fill="#fff" fill-opacity="0.16"/>
<ellipse cx="258.1" cy="806.1" rx="1.8" ry="3.5" transform="rotate(-33 258.1 806.1)" fill="#fff" fill-opacity="0.24"/>
<ellipse cx="285.1" cy="805.9" rx="3.9" ry="5.5" transform="rotate(-30 285.1 805.9)" fill="#fff" fill-opacity="0.28"/>
<ellipse cx="285.4" cy="806.2" rx="1.9" ry="2.6" transform="rotate(-30 285.4 806.2)" fill="#fff" fill-opacity="0.41"/>
<ellipse cx="276.9" cy="807.8" rx="3.7" ry="5.6" transform="rotate(-41 276.9 807.8)" fill="#fff" fill-opacity="0.26"/>
<ellipse cx="277.2" cy="808.3" rx="1.8" ry="2.7" transform="rotate(-41 277.2 808.3)" fill="#fff" fill-opacity="0.37"/>
<ellipse cx="291.1" cy="812.1" rx="3.7" ry="5.4" transform="rotate(-25 291.1 812.1)" fill="#fff" fill-opacity="0.17"/>
<ellipse cx="291.2" cy="812.6" rx="1.8" ry="2.5" transform="rotate(-25 291.2 812.6)" fill="#fff" fill-opacity="0.25"/>
<ellipse cx="311.1" cy="814.6" rx="4.1" ry="6.0" transform="rotate(-44 311.1 814.6)" fill="#fff" fill-opacity="0.26"/>
<ellipse cx="311.4" cy="814.6" rx="2.1" ry="2.9" transform="rotate(-44 311.4 814.6)" fill="#fff" fill-opacity="0.37"/>
<ellipse cx="260.9" cy="815.3" rx="3.5" ry="6.2" transform="rotate(-42 260.9 815.3)" fill="#fff" fill-opacity="0.28"/>
<ellipse cx="261.0" cy="815.7" rx="1.7" ry="3.0" transform="rotate(-42 261.0 815.7)" fill="#fff" fill-opacity="0.40"/>
<ellipse cx="305.5" cy="819.1" rx="3.6" ry="6.6" transform="rotate(-41 305.5 819.1)" fill="#fff" fill-opacity="0.21"/>
<ellipse cx="305.5" cy="819.6" rx="1.7" ry="3.2" transform="rotate(-41 305.5 819.6)" fill="#fff" fill-opacity="0.31"/>
<ellipse cx="241.8" cy="825.6" rx="4.1" ry="6.1" transform="rotate(-22 241.8 825.6)" fill="#fff" fill-opacity="0.21"/>
<ellipse cx="242.0" cy="826.0" rx="2.0" ry="2.9" transform="rotate(-22 242.0 826.0)" fill="#fff" fill-opacity="0.30"/>
<ellipse cx="280.5" cy="826.3" rx="4.1" ry="5.9" transform="rotate(-19 280.5 826.3)" fill="#fff" fill-opacity="0.13"/>
<ellipse cx="280.8" cy="826.6" rx="2.0" ry="2.8" transform="rotate(-19 280.8 826.6)" fill="#fff" fill-opacity="0.18"/>
<ellipse cx="291.6" cy="825.8" rx="3.6" ry="5.9" transform="rotate(-48 291.6 825.8)" fill="#fff" fill-opacity="0.20"/>
<ellipse cx="291.9" cy="825.9" rx="1.8" ry="2.8" transform="rotate(-48 291.9 825.9)" fill="#fff" fill-opacity="0.29"/>
<ellipse cx="319.6" cy="825.5" rx="4.3" ry="7.2" transform="rotate(-22 319.6 825.5)" fill="#fff" fill-opacity="0.18"/>
<ellipse cx="320.0" cy="825.9" rx="2.1" ry="3.6" transform="rotate(-22 320.0 825.9)" fill="#fff" fill-opacity="0.26"/>
<ellipse cx="283.7" cy="835.1" rx="4.1" ry="6.7" transform="rotate(-35 283.7 835.1)" fill="#fff" fill-opacity="0.23"/>
<ellipse cx="284.1" cy="835.1" rx="2.0" ry="3.3" transform="rotate(-35 284.1 835.1)" fill="#fff" fill-opacity="0.33"/>
<ellipse cx="303.0" cy="837.8" rx="4.1" ry="7.3" transform="rotate(-46 303.0 837.8)" fill="#fff" fill-opacity="0.22"/>
<ellipse cx="303.1" cy="838.4" rx="2.1" ry="3.7" transform="rotate(-46 303.1 838.4)" fill="#fff" fill-opacity="0.32"/>
<ellipse cx="307.8" cy="846.3" rx="3.7" ry="5.3" transform="rotate(-36 307.8 846.3)" fill="#fff" fill-opacity="0.14"/>
<ellipse cx="308.0" cy="846.7" rx="1.8" ry="2.5" transform="rotate(-36 308.0 846.7)" fill="#fff" fill-opacity="0.21"/>
<ellipse cx="315.3" cy="845.7" rx="4.1" ry="6.2" transform="rotate(-41 315.3 845.7)" fill="#fff" fill-opacity="0.21"/>
<ellipse cx="315.5" cy="846.3" rx="2.0" ry="3.0" transform="rotate(-41 315.5 846.3)" fill="#fff" fill-opacity="0.31"/>
<ellipse cx="284.3" cy="850.4" rx="4.0" ry="7.2" transform="rotate(-48 284.3 850.4)" fill="#fff" fill-opacity="0.25"/>
<ellipse cx="284.7" cy="850.8" rx="2.0" ry="3.6" transform="rotate(-48 284.7 850.8)" fill="#fff" fill-opacity="0.36"/>
<ellipse cx="270.2" cy="854.0" rx="4.1" ry="5.4" transform="rotate(-23 270.2 854.0)" fill="#fff" fill-opacity="0.15"/>
<ellipse cx="270.4" cy="854.1" rx="2.0" ry="2.5" transform="rotate(-23 270.4 854.1)" fill="#fff" fill-opacity="0.21"/>
<ellipse cx="344.9" cy="489.9" rx="4.6" ry="5.9" transform="rotate(-16 344.9 489.9)" fill="#fff" fill-opacity="0.13"/>
<ellipse cx="345.0" cy="490.1" rx="2.9" ry="3.5" transform="rotate(-16 345.0 490.1)" fill="#fff" fill-opacity="0.15"/>
<ellipse cx="364.9" cy="491.8" rx="4.7" ry="5.9" transform="rotate(-48 364.9 491.8)" fill="#fff" fill-opacity="0.16"/>
<ellipse cx="365.0" cy="491.9" rx="3.2" ry="3.7" transform="rotate(-48 365.0 491.9)" fill="#fff" fill-opacity="0.16"/>
<ellipse cx="376.9" cy="488.3" rx="4.8" ry="5.8" transform="rotate(-25 376.9 488.3)" fill="#fff" fill-opacity="0.25"/>
<ellipse cx="377.0" cy="488.5" rx="3.3" ry="3.7" transform="rotate(-25 377.0 488.5)" fill="#fff" fill-opacity="0.25"/>
<ellipse cx="387.7" cy="487.0" rx="4.8" ry="5.8" transform="rotate(-48 387.7 487.0)" fill="#fff" fill-opacity="0.14"/>
<ellipse cx="387.9" cy="487.1" rx="3.3" ry="3.7" transform="rotate(-48 387.9 487.1)" fill="#fff" fill-opacity="0.14"/>
<ellipse cx="386.9" cy="494.9" rx="4.8" ry="5.8" transform="rotate(-41 386.9 494.9)" fill="#fff" fill-opacity="0.16"/>
<ellipse cx="387.0" cy="495.0" rx="3.3" ry="3.7" transform="rotate(-41 387.0 495.0)" fill="#fff" fill-opacity="0.16"/>
<ellipse cx="353.1" cy="497.7" rx="4.6" ry="6.0" transform="rotate(-45 353.1 497.7)" fill="#fff" fill-opacity="0.13"/>
<ellipse cx="353.2" cy="497.8" rx="2.9" ry="3.6" transform="rotate(-45 353.2 497.8)" fill="#fff" fill-opacity="0.14"/>
<ellipse cx="409.9" cy="499.8" rx="4.8" ry="5.8" transform="rotate(-28 409.9 499.8)" fill="#fff" fill-opacity="0.10"/>
<ellipse cx="410.0" cy="499.9" rx="3.3" ry="3.7" transform="rotate(-28 410.0 499.9)" fill="#fff" fill-opacity="0.10"/>
<ellipse cx="424.6" cy="496.9" rx="4.8" ry="5.8" transform="rotate(-48 424.6 496.9)" fill="#fff" fill-opacity="0.12"/>
<ellipse cx="424.7" cy="497.0" rx="3.3" ry="3.7" transform="rotate(-48 424.7 497.0)" fill="#fff" fill-opacity="0.12"/>
<ellipse cx="357.0" cy="511.7" rx="4.6" ry="5.7" transform="rotate(-44 357.0 511.7)" fill="#fff" fill-opacity="0.15"/>
<ellipse cx="357.1" cy="511.9" rx="2.9" ry="3.5" transform="rotate(-44 357.1 511.9)" fill="#fff" fill-opacity="0.16"/>
<ellipse cx="407.8" cy="514.9" rx="4.8" ry="5.8" transform="rotate(-46 407.8 514.9)" fill="#fff" fill-opacity="0.20"/>
<ellipse cx="407.9" cy="515.0" rx="3.3" ry="3.7" transform="rotate(-46 407.9 515.0)" fill="#fff" fill-opacity="0.20"/>
<ellipse cx="401.8" cy="519.8" rx="4.8" ry="5.8" transform="rotate(-16 401.8 519.8)" fill="#fff" fill-opacity="0.16"/>
<ellipse cx="401.9" cy="520.0" rx="3.3" ry="3.7" transform="rotate(-16 401.9 520.0)" fill="#fff" fill-opacity="0.16"/>
<ellipse cx="396.9" cy="527.8" rx="4.8" ry="5.8" transform="rotate(-43 396.9 527.8)" fill="#fff" fill-opacity="0.18"/>
<ellipse cx="397.0" cy="528.0" rx="3.3" ry="3.7" transform="rotate(-43 397.0 528.0)" fill="#fff" fill-opacity="0.18"/>
<ellipse cx="370.9" cy="529.8" rx="4.8" ry="5.8" transform="rotate(-38 370.9 529.8)" fill="#fff" fill-opacity="0.18"/>
<ellipse cx="371.0" cy="530.0" rx="3.3" ry="3.7" transform="rotate(-38 371.0 530.0)" fill="#fff" fill-opacity="0.18"/>
<ellipse cx="390.9" cy="529.8" rx="4.8" ry="5.8" transform="rotate(-41 390.9 529.8)" fill="#fff" fill-opacity="0.12"/>
<ellipse cx="391.0" cy="530.0" rx="3.3" ry="3.7" transform="rotate(-41 391.0 530.0)" fill="#fff" fill-opacity="0.12"/>
<ellipse cx="407.8" cy="530.9" rx="4.8" ry="5.8" transform="rotate(-32 407.8 530.9)" fill="#fff" fill-opacity="0.19"/>
<ellipse cx="407.9" cy="531.0" rx="3.3" ry="3.7" transform="rotate(-32 407.9 531.0)" fill="#fff" fill-opacity="0.19"/>
<ellipse cx="345.6" cy="538.4" rx="4.3" ry="5.7" transform="rotate(-15 345.6 538.4)" fill="#fff" fill-opacity="0.11"/>
<ellipse cx="345.8" cy="538.6" rx="2.7" ry="3.3" transform="rotate(-15 345.8 538.6)" fill="#fff" fill-opacity="0.13"/>
<ellipse cx="360.6" cy="539.8" rx="4.7" ry="6.0" transform="rotate(-19 360.6 539.8)" fill="#fff" fill-opacity="0.08"/>
<ellipse cx="360.7" cy="539.9" rx="3.1" ry="3.7" transform="rotate(-19 360.7 539.9)" fill="#fff" fill-opacity="0.09"/>
<ellipse cx="347.2" cy="545.3" rx="4.6" ry="6.2" transform="rotate(-34 347.2 545.3)" fill="#fff" fill-opacity="0.15"/>
<ellipse cx="347.3" cy="545.6" rx="2.8" ry="3.6" transform="rotate(-34 347.3 545.6)" fill="#fff" fill-opacity="0.18"/>
<ellipse cx="408.9" cy="550.6" rx="4.6" ry="5.8" transform="rotate(-37 408.9 550.6)" fill="#fff" fill-opacity="0.14"/>
<ellipse cx="409.0" cy="550.7" rx="3.0" ry="3.5" transform="rotate(-37 409.0 550.7)" fill="#fff" fill-opacity="0.15"/>
<ellipse cx="424.6" cy="548.3" rx="4.7" ry="6.0" transform="rotate(-15 424.6 548.3)" fill="#fff" fill-opacity="0.20"/>
<ellipse cx="424.7" cy="548.5" rx="3.1" ry="3.7" transform="rotate(-15 424.7 548.5)" fill="#fff" fill-opacity="0.21"/>
<ellipse cx="387.7" cy="555.5" rx="4.6" ry="6.2" transform="rotate(-29 387.7 555.5)" fill="#fff" fill-opacity="0.17"/>
<ellipse cx="387.9" cy="555.6" rx="2.9" ry="3.7" transform="rotate(-29 387.9 555.6)" fill="#fff" fill-opacity="0.19"/>
<ellipse cx="396.5" cy="561.7" rx="4.5" ry="6.1" transform="rotate(-43 396.5 561.7)" fill="#fff" fill-opacity="0.30"/>
<ellipse cx="396.7" cy="561.8" rx="2.8" ry="3.6" transform="rotate(-43 396.7 561.8)" fill="#fff" fill-opacity="0.34"/>
<ellipse cx="356.3" cy="564.1" rx="4.3" ry="6.1" transform="rotate(-31 356.3 564.1)" fill="#fff" fill-opacity="0.18"/>
<ellipse cx="356.5" cy="564.4" rx="2.5" ry="3.5" transform="rotate(-31 356.5 564.4)" fill="#fff" fill-opacity="0.22"/>
<ellipse cx="338.8" cy="569.9" rx="3.9" ry="5.8" transform="rotate(-19 338.8 569.9)" fill="#fff" fill-opacity="0.19"/>
<ellipse cx="338.9" cy="570.2" rx="2.1" ry="3.0" transform="rotate(-19 338.9 570.2)" fill="#fff" fill-opacity="0.25"/>
<ellipse cx="412.9" cy="577.4" rx="4.3" ry="5.6" transform="rotate(-29 412.9 577.4)" fill="#fff" fill-opacity="0.18"/>
<ellipse cx="413.1" cy="577.7" rx="2.5" ry="3.0" transform="rotate(-29 413.1 577.7)" fill="#fff" fill-opacity="0.23"/>
<ellipse cx="365.0" cy="580.7" rx="4.4" ry="6.2" transform="rotate(-19 365.0 580.7)" fill="#fff" fill-opacity="0.11"/>
<ellipse cx="365.1" cy="581.1" rx="2.5" ry="3.4" transform="rotate(-19 365.1 581.1)" fill="#fff" fill-opacity="0.14"/>
<ellipse cx="385.3" cy="581.6" rx="4.1" ry="6.0" transform="rotate(-20 385.3 581.6)" fill="#fff" fill-opacity="0.21"/>
<ellipse cx="385.4" cy="581.7" rx="2.3" ry="3.2" transform="rotate(-20 385.4 581.7)" fill="#fff" fill-opacity="0.27"/>
<ellipse cx="332.7" cy="590.5" rx="3.9" ry="5.8" transform="rotate(-48 332.7 590.5)" fill="#fff" fill-opacity="0.13"/>
<ellipse cx="333.1" cy="590.7" rx="2.0" ry="2.9" transform="rotate(-48 333.1 590.7)" fill="#fff" fill-opacity="0.18"/>
<ellipse cx="352.3" cy="590.4" rx="4.2" ry="7.0" transform="rotate(-35 352.3 590.4)" fill="#fff" fill-opacity="0.15"/>
<ellipse cx="352.4" cy="590.6" rx="2.2" ry="3.7" transform="rotate(-35 352.4 590.6)" fill="#fff" fill-opacity="0.21"/>
<ellipse cx="383.0" cy="593.0" rx="4.3" ry="5.9" transform="rotate(-23 383.0 593.0)" fill="#fff" fill-opacity="0.24"/>
<ellipse cx="383.1" cy="593.1" rx="2.3" ry="3.1" transform="rotate(-23 383.1 593.1)" fill="#fff" fill-opacity="0.33"/>
<ellipse cx="416.8" cy="592.5" rx="3.7" ry="6.6" transform="rotate(-16 416.8 592.5)" fill="#fff" fill-opacity="0.16"/>
<ellipse cx="416.9" cy="592.9" rx="2.0" ry="3.5" transform="rotate(-16 416.9 592.9)" fill="#fff" fill-opacity="0.22"/>
<ellipse cx="396.0" cy="594.0" rx="3.9" ry="6.6" transform="rotate(-17 396.0 594.0)" fill="#fff" fill-opacity="0.24"/>
<ellipse cx="396.3" cy="594.3" rx="2.0" ry="3.4" transform="rotate(-17 396.3 594.3)" fill="#fff" fill-opacity="0.32"/>
<ellipse cx="361.0" cy="596.4" rx="4.3" ry="5.5" transform="rotate(-49 361.0 596.4)" fill="#fff" fill-opacity="0.20"/>
<ellipse cx="361.3" cy="596.6" rx="2.3" ry="2.7" transform="rotate(-49 361.3 596.6)" fill="#fff" fill-opacity="0.28"/>
<ellipse cx="391.0" cy="597.0" rx="4.1" ry="7.0" transform="rotate(-45 391.0 597.0)" fill="#fff" fill-opacity="0.22"/>
<ellipse cx="391.1" cy="597.1" rx="2.2" ry="3.7" transform="rotate(-45 391.1 597.1)" fill="#fff" fill-opacity="0.30"/>
<ellipse cx="403.3" cy="596.1" rx="4.4" ry="6.3" transform="rotate(-45 403.3 596.1)" fill="#fff" fill-opacity="0.11"/>
<ellipse cx="403.4" cy="596.6" rx="2.3" ry="3.2" transform="rotate(-45 403.4 596.6)" fill="#fff" fill-opacity="0.15"/>
<ellipse cx="336.2" cy="598.0" rx="3.7" ry="6.3" transform="rotate(-36 336.2 598.0)" fill="#fff" fill-opacity="0.25"/>
<ellipse cx="336.3" cy="598.3" rx="1.8" ry="3.1" transform="rotate(-36 336.3 598.3)" fill="#fff" fill-opacity="0.35"/>
<ellipse cx="342.6" cy="599.9" rx="4.3" ry="5.7" transform="rotate(-38 342.6 599.9)" fill="#fff" fill-opacity="0.32"/>
<ellipse cx="342.8" cy="600.4" rx="2.2" ry="2.8" transform="rotate(-38 342.8 600.4)" fill="#fff" fill-opacity="0.46"/>
<ellipse cx="405.5" cy="604.3" rx="3.8" ry="6.1" transform="rotate(-29 405.5 604.3)" fill="#fff" fill-opacity="0.17"/>
<ellipse cx="406.0" cy="604.5" rx="1.9" ry="3.0" transform="rotate(-29 406.0 604.5)" fill="#fff" fill-opacity="0.24"/>
<ellipse cx="351.9" cy="604.5" rx="3.6" ry="5.3" transform="rotate(-14 351.9 604.5)" fill="#fff" fill-opacity="0.11"/>
<ellipse cx="352.1" cy="604.8" rx="1.8" ry="2.5" transform="rotate(-14 352.1 604.8)" fill="#fff" fill-opacity="0.16"/>
<ellipse cx="368.7" cy="604.8" rx="4.4" ry="6.4" transform="rotate(-30 368.7 604.8)" fill="#fff" fill-opacity="0.20"/>
<ellipse cx="368.7" cy="605.3" rx="2.2" ry="3.2" transform="rotate(-30 368.7 605.3)" fill="#fff" fill-opacity="0.28"/>
<ellipse cx="382.3" cy="606.6" rx="4.1" ry="6.6" transform="rotate(-22 382.3 606.6)" fill="#fff" fill-opacity="0.24"/>
<ellipse cx="382.6" cy="606.9" rx="2.0" ry="3.3" transform="rotate(-22 382.6 606.9)" fill="#fff" fill-opacity="0.35"/>
<ellipse cx="350.0" cy="610.4" rx="4.2" ry="5.9" transform="rotate(-25 350.0 610.4)" fill="#fff" fill-opacity="0.26"/>
<ellipse cx="350.1" cy="610.6" rx="2.1" ry="2.8" transform="rotate(-25 350.1 610.6)" fill="#fff" fill-opacity="0.38"/>
<ellipse cx="350.1" cy="616.6" rx="3.7" ry="5.3" transform="rotate(-35 350.1 616.6)" fill="#fff" fill-opacity="0.17"/>
<ellipse cx="350.3" cy="616.5" rx="1.8" ry="2.5" transform="rotate(-35 350.3 616.5)" fill="#fff" fill-opacity="0.25"/>
<ellipse cx="335.3" cy="617.3" rx="3.5" ry="6.0" transform="rotate(-42 335.3 617.3)" fill="#fff" fill-opacity="0.17"/>
<ellipse cx="335.7" cy="617.3" rx="1.7" ry="2.9" transform="rotate(-42 335.7 617.3)" fill="#fff" fill-opacity="0.25"/>
<ellipse cx="395.0" cy="614.5" rx="3.5" ry="5.6" transform="rotate(-39 395.0 614.5)" fill="#fff" fill-opacity="0.19"/>
<ellipse cx="395.3" cy="614.9" rx="1.7" ry="2.6" transform="rotate(-39 395.3 614.9)" fill="#fff" fill-opacity="0.27"/>
<ellipse cx="390.3" cy="619.2" rx="4.0" ry="7.3" transform="rotate(-38 390.3 619.2)" fill="#fff" fill-opacity="0.21"/>
<ellipse cx="390.7" cy="619.6" rx="2.0" ry="3.7" transform="rotate(-38 390.7 619.6)" fill="#fff" fill-opacity="0.30"/>
<ellipse cx="348.4" cy="623.2" rx="4.3" ry="6.2" transform="rotate(-22 348.4 623.2)" fill="#fff" fill-opacity="0.28"/>
<ellipse cx="348.8" cy="623.4" rx="2.2" ry="3.0" transform="rotate(-22 348.8 623.4)" fill="#fff" fill-opacity="0.41"/>
<ellipse cx="362.9" cy="622.4" rx="3.7" ry="5.6" transform="rotate(-49 362.9 622.4)" fill="#fff" fill-opacity="0.16"/>
<ellipse cx="363.0" cy="622.8" rx="1.8" ry="2.6" transform="rotate(-49 363.0 622.8)" fill="#fff" fill-opacity="0.23"/>
<ellipse cx="377.1" cy="625.4" rx="3.6" ry="6.7" transform="rotate(-19 377.1 625.4)" fill="#fff" fill-opacity="0.15"/>
<ellipse cx="377.1" cy="625.4" rx="1.7" ry="3.3" transform="rotate(-19 377.1 625.4)" fill="#fff" fill-opacity="0.21"/>
<ellipse cx="416.8" cy="623.3" rx="3.5" ry="6.0" transform="rotate(-18 416.8 623.3)" fill="#fff" fill-opacity="0.12"/>
<ellipse cx="417.2" cy="623.5" rx="1.7" ry="2.9" transform="rotate(-18 417.2 623.5)" fill="#fff" fill-opacity="0.18"/>
<ellipse cx="384.9" cy="626.9" rx="4.1" ry="6.0" transform="rotate(-42 384.9 626.9)" fill="#fff" fill-opacity="0.22"/>
<ellipse cx="385.0" cy="627.2" rx="2.1" ry="2.9" transform="rotate(-42 385.0 627.2)" fill="#fff" fill-opacity="0.32"/>
<ellipse cx="361.1" cy="629.1" rx="4.0" ry="5.3" transform="rotate(-35 361.1 629.1)" fill="#fff" fill-opacity="0.28"/>
<ellipse cx="361.4" cy="629.3" rx="2.0" ry="2.5" transform="rotate(-35 361.4 629.3)" fill="#fff" fill-opacity="0.41"/>
<ellipse cx="371.7" cy="627.8" rx="4.0" ry="7.3" transform="rotate(-50 371.7 627.8)" fill="#fff" fill-opacity="0.16"/>
<ellipse cx="371.6" cy="628.3" rx="2.0" ry="3.7" transform="rotate(-50 371.6 628.3)" fill="#fff" fill-opacity="0.23"/>
<ellipse cx="402.0" cy="627.9" rx="3.5" ry="5.6" transform="rotate(-47 402.0 627.9)" fill="#fff" fill-opacity="0.24"/>
<ellipse cx="402.1" cy="628.4" rx="1.7" ry="2.6" transform="rotate(-47 402.1 628.4)" fill="#fff" fill-opacity="0.35"/>
<ellipse cx="407.8" cy="627.5" rx="4.1" ry="6.5" transform="rotate(-29 407.8 627.5)" fill="#fff" fill-opacity="0.18"/>
<ellipse cx="408.0" cy="627.9" rx="2.0" ry="3.2" transform="rotate(-29 408.0 627.9)" fill="#fff" fill-opacity="0.27"/>
<ellipse cx="339.2" cy="634.6" rx="3.7" ry="7.0" transform="rotate(-23 339.2 634.6)" fill="#fff" fill-opacity="0.16"/>
<ellipse cx="339.3" cy="634.6" rx="1.8" ry="3.5" transform="rotate(-23 339.3 634.6)" fill="#fff" fill-opacity="0.23"/>
<ellipse cx="354.3" cy="633.7" rx="3.4" ry="5.5" transform="rotate(-16 354.3 633.7)" fill="#fff" fill-opacity="0.16"/>
<ellipse cx="354.5" cy="633.8" rx="1.6" ry="2.6" transform="rotate(-16 354.5 633.8)" fill="#fff" fill-opacity="0.23"/>
<ellipse cx="374.3" cy="633.2" rx="3.5" ry="6.9" transform="rotate(-42 374.3 633.2)" fill="#fff" fill-opacity="0.17"/>
<ellipse cx="374.7" cy="633.6" rx="1.7" ry="3.4" transform="rotate(-42 374.7 633.6)" fill="#fff" fill-opacity="0.25"/>
<ellipse cx="401.6" cy="638.8" rx="3.5" ry="6.0" transform="rotate(-16 401.6 638.8)" fill="#fff" fill-opacity="0.21"/>
<ellipse cx="402.0" cy="638.9" rx="1.7" ry="2.9" transform="rotate(-16 402.0 638.9)" fill="#fff" fill-opacity="0.30"/>
<ellipse cx="353.4" cy="640.6" rx="4.4" ry="5.8" transform="rotate(-22 353.4 640.6)" fill="#fff" fill-opacity="0.25"/>
<ellipse cx="353.6" cy="640.7" rx="2.2" ry="2.7" transform="rotate(-22 353.6 640.7)" fill="#fff" fill-opacity="0.36"/>
<ellipse cx="346.0" cy="643.0" rx="3.5" ry="7.3" transform="rotate(-38 346.0 643.0)" fill="#fff" fill-opacity="0.25"/>
<ellipse cx="346.1" cy="643.5" rx="1.7" ry="3.6" transform="rotate(-38 346.1 643.5)" fill="#fff" fill-opacity="0.36"/>
<ellipse cx="362.5" cy="645.6" rx="3.8" ry="6.5" transform="rotate(-48 362.5 645.6)" fill="#fff" fill-opacity="0.18"/>
<ellipse cx="362.5" cy="645.6" rx="1.9" ry="3.2" transform="rotate(-48 362.5 645.6)" fill="#fff" fill-opacity="0.26"/>
<ellipse cx="420.9" cy="645.0" rx="3.6" ry="6.2" transform="rotate(-41 420.9 645.0)" fill="#fff" fill-opacity="0.15"/>
<ellipse cx="421.2" cy="645.1" rx="1.8" ry="3.0" transform="rotate(-41 421.2 645.1)" fill="#fff" fill-opacity="0.22"/>
<ellipse cx="343.2" cy="649.2" rx="3.6" ry="6.5" transform="rotate(-42 343.2 649.2)" fill="#fff" fill-opacity="0.16"/>
<ellipse cx="343.3" cy="649.2" rx="1.7" ry="3.2" transform="rotate(-42 343.3 649.2)" fill="#fff" fill-opacity="0.24"/>
<ellipse cx="417.5" cy="647.0" rx="3.9" ry="6.0" transform="rotate(-40 417.5 647.0)" fill="#fff" fill-opacity="0.24"/>
<ellipse cx="417.5" cy="647.5" rx="1.9" ry="2.9" transform="rotate(-40 417.5 647.5)" fill="#fff" fill-opacity="0.35"/>
<ellipse cx="354.4" cy="649.7" rx="3.6" ry="7.2" transform="rotate(-29 354.4 649.7)" fill="#fff" fill-opacity="0.22"/>
<ellipse cx="354.4" cy="650.1" rx="1.7" ry="3.6" transform="rotate(-29 354.4 650.1)" fill="#fff" fill-opacity="0.31"/>
<ellipse cx="383.4" cy="648.2" rx="3.7" ry="7.5" transform="rotate(-19 383.4 648.2)" fill="#fff" fill-opacity="0.26"/>
<ellipse cx="383.8" cy="648.6" rx="1.8" ry="3.8" transform="rotate(-19 383.8 648.6)" fill="#fff" fill-opacity="0.38"/>
<ellipse cx="420.8" cy="655.7" rx="3.5" ry="6.9" transform="rotate(-45 420.8 655.7)" fill="#fff" fill-opacity="0.11"/>
<ellipse cx="421.1" cy="655.8" rx="1.7" ry="3.4" transform="rotate(-45 421.1 655.8)" fill="#fff" fill-opacity="0.16"/>
<ellipse cx="372.8" cy="659.1" rx="3.4" ry="7.5" transform="rotate(-18 372.8 659.1)" fill="#fff" fill-opacity="0.27"/>
<ellipse cx="373.1" cy="659.2" rx="1.6" ry="3.8" transform="rotate(-18 373.1 659.2)" fill="#fff" fill-opacity="0.40"/>
<ellipse cx="410.4" cy="662.7" rx="3.5" ry="6.2" transform="rotate(-42 410.4 662.7)" fill="#fff" fill-opacity="0.12"/>
<ellipse cx="410.9" cy="662.7" rx="1.7" ry="3.0" transform="rotate(-42 410.9 662.7)" fill="#fff" fill-opacity="0.17"/>
<ellipse cx="345.7" cy="663.6" rx="3.8" ry="5.5" transform="rotate(-32 345.7 663.6)" fill="#fff" fill-opacity="0.26"/>
<ellipse cx="346.1" cy="663.7" rx="1.9" ry="2.6" transform="rotate(-32 346.1 663.7)" fill="#fff" fill-opacity="0.38"/>
<ellipse cx="371.5" cy="664.7" rx="3.9" ry="6.0" transform="rotate(-46 371.5 664.7)" fill="#fff" fill-opacity="0.24"/>
<ellipse cx="371.5" cy="665.0" rx="1.9" ry="2.9" transform="rotate(-46 371.5 665.0)" fill="#fff" fill-opacity="0.35"/>
<ellipse cx="403.1" cy="665.7" rx="3.6" ry="5.8" transform="rotate(-24 403.1 665.7)" fill="#fff" fill-opacity="0.28"/>
<ellipse cx="403.4" cy="666.2" rx="1.7" ry="2.8" transform="rotate(-24 403.4 666.2)" fill="#fff" fill-opacity="0.41"/>
<ellipse cx="383.0" cy="671.5" rx="4.1" ry="5.2" transform="rotate(-37 383.0 671.5)" fill="#fff" fill-opacity="0.18"/>
<ellipse cx="383.1" cy="671.7" rx="2.0" ry="2.4" transform="rotate(-37 383.1 671.7)" fill="#fff" fill-opacity="0.26"/>
<ellipse cx="397.1" cy="673.9" rx="3.8" ry="6.9" transform="rotate(-19 397.1 673.9)" fill="#fff" fill-opacity="0.23"/>
<ellipse cx="397.4" cy="674.2" rx="1.9" ry="3.4" transform="rotate(-19 397.4 674.2)" fill="#fff" fill-opacity="0.34"/>
<ellipse cx="420.4" cy="674.5" rx="4.4" ry="5.5" transform="rotate(-35 420.4 674.5)" fill="#fff" fill-opacity="0.18"/>
<ellipse cx="420.8" cy="674.7" rx="2.2" ry="2.6" transform="rotate(-35 420.8 674.7)" fill="#fff" fill-opacity="0.26"/>
<ellipse cx="333.8" cy="678.3" rx="3.6" ry="5.8" transform="rotate(-36 333.8 678.3)" fill="#fff" fill-opacity="0.15"/>
<ellipse cx="334.1" cy="678.3" rx="1.7" ry="2.7" transform="rotate(-36 334.1 678.3)" fill="#fff" fill-opacity="0.23"/>
<ellipse cx="365.6" cy="680.7" rx="4.0" ry="5.9" transform="rotate(-25 365.6 680.7)" fill="#fff" fill-opacity="0.38"/>
<ellipse cx="365.7" cy="681.0" rx="2.0" ry="2.8" transform="rotate(-25 365.7 681.0)" fill="#fff" fill-opacity="0.55"/>
<ellipse cx="385.7" cy="680.4" rx="4.0" ry="6.4" transform="rotate(-19 385.7 680.4)" fill="#fff" fill-opacity="0.11"/>
<ellipse cx="385.7" cy="680.9" rx="2.0" ry="3.1" transform="rotate(-19 385.7 680.9)" fill="#fff" fill-opacity="0.16"/>
<ellipse cx="402.9" cy="682.6" rx="3.9" ry="6.1" transform="rotate(-24 402.9 682.6)" fill="#fff" fill-opacity="0.24"/>
<ellipse cx="403.0" cy="682.8" rx="1.9" ry="2.9" transform="rotate(-24 403.0 682.8)" fill="#fff" fill-opacity="0.35"/>
<ellipse cx="410.4" cy="686.2" rx="3.7" ry="6.6" transform="rotate(-42 410.4 686.2)" fill="#fff" fill-opacity="0.22"/>
<ellipse cx="410.5" cy="686.5" rx="1.8" ry="3.2" transform="rotate(-42 410.5 686.5)" fill="#fff" fill-opacity="0.32"/>
<ellipse cx="335.5" cy="687.4" rx="4.3" ry="5.5" transform="rotate(-42 335.5 687.4)" fill="#fff" fill-opacity="0.20"/>
<ellipse cx="335.7" cy="687.7" rx="2.2" ry="2.6" transform="rotate(-42 335.7 687.7)" fill="#fff" fill-opacity="0.29"/>
<ellipse cx="342.7" cy="689.1" rx="3.9" ry="7.1" transform="rotate(-44 342.7 689.1)" fill="#fff" fill-opacity="0.25"/>
<ellipse cx="342.8" cy="689.1" rx="1.9" ry="3.5" transform="rotate(-44 342.8 689.1)" fill="#fff" fill-opacity="0.37"/>
<ellipse cx="375.6" cy="688.1" rx="4.2" ry="7.1" transform="rotate(-36 375.6 688.1)" fill="#fff" fill-opacity="0.37"/>
<ellipse cx="376.0" cy="688.6" rx="2.1" ry="3.5" transform="rotate(-36 376.0 688.6)" fill="#fff" fill-opacity="0.54"/>
<ellipse cx="385.5" cy="688.8" rx="3.9" ry="6.4" transform="rotate(-21 385.5 688.8)" fill="#fff" fill-opacity="0.13"/>
<ellipse cx="385.9" cy="689.1" rx="1.9" ry="3.1" transform="rotate(-21 385.9 689.1)" fill="#fff" fill-opacity="0.19"/>
<ellipse cx="357.5" cy="695.7" rx="4.2" ry="7.0" transform="rotate(-33 357.5 695.7)" fill="#fff" fill-opacity="0.23"/>
<ellipse cx="357.9" cy="695.8" rx="2.1" ry="3.5" transform="rotate(-33 357.9 695.8)" fill="#fff" fill-opacity="0.34"/>
<ellipse cx="417.3" cy="694.2" rx="3.8" ry="6.0" transform="rotate(-37 417.3 694.2)" fill="#fff" fill-opacity="0.20"/>
<ellipse cx="417.7" cy="694.7" rx="1.8" ry="2.9" transform="rotate(-37 417.7 694.7)" fill="#fff" fill-opacity="0.29"/>
<ellipse cx="380.9" cy="700.1" rx="3.7" ry="5.8" transform="rotate(-24 380.9 700.1)" fill="#fff" fill-opacity="0.12"/>
<ellipse cx="381.3" cy="700.2" rx="1.8" ry="2.8" transform="rotate(-24 381.3 700.2)" fill="#fff" fill-opacity="0.17"/>
<ellipse cx="397.3" cy="699.9" rx="4.0" ry="7.0" transform="rotate(-35 397.3 699.9)" fill="#fff" fill-opacity="0.26"/>
<ellipse cx="397.5" cy="700.4" rx="2.0" ry="3.5" transform="rotate(-35 397.5 700.4)" fill="#fff" fill-opacity="0.38"/>
<ellipse cx="352.3" cy="701.6" rx="4.0" ry="6.1" transform="rotate(-39 352.3 701.6)" fill="#fff" fill-opacity="0.17"/>
<ellipse cx="352.3" cy="702.0" rx="2.0" ry="3.0" transform="rotate(-39 352.3 702.0)" fill="#fff" fill-opacity="0.25"/>
<ellipse cx="415.2" cy="706.7" rx="4.1" ry="7.4" transform="rotate(-43 415.2 706.7)" fill="#fff" fill-opacity="0.21"/>
<ellipse cx="415.4" cy="706.9" rx="2.1" ry="3.7" transform="rotate(-43 415.4 706.9)" fill="#fff" fill-opacity="0.31"/>
<ellipse cx="346.4" cy="709.9" rx="3.9" ry="6.4" transform="rotate(-36 346.4 709.9)" fill="#fff" fill-opacity="0.12"/>
<ellipse cx="346.4" cy="710.0" rx="1.9" ry="3.1" transform="rotate(-36 346.4 710.0)" fill="#fff" fill-opacity="0.18"/>
<ellipse cx="362.5" cy="715.0" rx="3.9" ry="6.2" transform="rotate(-20 362.5 715.0)" fill="#fff" fill-opacity="0.19"/>
<ellipse cx="362.5" cy="715.3" rx="1.9" ry="3.0" transform="rotate(-20 362.5 715.3)" fill="#fff" fill-opacity="0.28"/>
<ellipse cx="406.5" cy="715.7" rx="3.8" ry="6.9" transform="rotate(-26 406.5 715.7)" fill="#fff" fill-opacity="0.20"/>
<ellipse cx="406.9" cy="715.8" rx="1.9" ry="3.4" transform="rotate(-26 406.9 715.8)" fill="#fff" fill-opacity="0.29"/>
<ellipse cx="424.3" cy="714.0" rx="3.5" ry="5.7" transform="rotate(-46 424.3 714.0)" fill="#fff" fill-opacity="0.25"/>
<ellipse cx="424.4" cy="714.5" rx="1.7" ry="2.7" transform="rotate(-46 424.4 714.5)" fill="#fff" fill-opacity="0.36"/>
<ellipse cx="376.3" cy="723.6" rx="3.9" ry="6.8" transform="rotate(-25 376.3 723.6)" fill="#fff" fill-opacity="0.32"/>
<ellipse cx="376.7" cy="723.8" rx="1.9" ry="3.4" transform="rotate(-25 376.7 723.8)" fill="#fff" fill-opacity="0.46"/>
<ellipse cx="359.0" cy="726.3" rx="3.5" ry="7.2" transform="rotate(-21 359.0 726.3)" fill="#fff" fill-opacity="0.21"/>
<ellipse cx="359.3" cy="726.5" rx="1.7" ry="3.6" transform="rotate(-21 359.3 726.5)" fill="#fff" fill-opacity="0.31"/>
<ellipse cx="387.7" cy="732.1" rx="4.3" ry="5.8" transform="rotate(-39 387.7 732.1)" fill="#fff" fill-opacity="0.16"/>
<ellipse cx="387.9" cy="732.4" rx="2.1" ry="2.8" transform="rotate(-39 387.9 732.4)" fill="#fff" fill-opacity="0.23"/>
<ellipse cx="414.9" cy="733.3" rx="4.3" ry="7.0" transform="rotate(-19 414.9 733.3)" fill="#fff" fill-opacity="0.12"/>
<ellipse cx="415.2" cy="733.8" rx="2.1" ry="3.5" transform="rotate(-19 415.2 733.8)" fill="#fff" fill-opacity="0.17"/>
<ellipse cx="403.3" cy="739.3" rx="3.8" ry="6.5" transform="rotate(-32 403.3 739.3)" fill="#fff" fill-opacity="0.18"/>
<ellipse cx="403.4" cy="739.8" rx="1.8" ry="3.2" transform="rotate(-32 403.4 739.8)" fill="#fff" fill-opacity="0.26"/>
<ellipse cx="375.6" cy="740.5" rx="3.8" ry="6.4" transform="rotate(-39 375.6 740.5)" fill="#fff" fill-opacity="0.32"/>
<ellipse cx="375.8" cy="740.9" rx="1.9" ry="3.1" transform="rotate(-39 375.8 740.9)" fill="#fff" fill-opacity="0.46"/>
<ellipse cx="338.5" cy="746.5" rx="4.0" ry="7.0" transform="rotate(-24 338.5 746.5)" fill="#fff" fill-opacity="0.25"/>
<ellipse cx="338.7" cy="746.5" rx="2.0" ry="3.5" transform="rotate(-24 338.7 746.5)" fill="#fff" fill-opacity="0.36"/>
<ellipse cx="385.4" cy="743.9" rx="3.4" ry="6.7" transform="rotate(-34 385.4 743.9)" fill="#fff" fill-opacity="0.37"/>
<ellipse cx="385.4" cy="744.4" rx="1.6" ry="3.3" transform="rotate(-34 385.4 744.4)" fill="#fff" fill-opacity="0.54"/>
<ellipse cx="416.9" cy="746.7" rx="3.9" ry="7.0" transform="rotate(-30 416.9 746.7)" fill="#fff" fill-opacity="0.14"/>
<ellipse cx="417.1" cy="746.9" rx="1.9" ry="3.5" transform="rotate(-30 417.1 746.9)" fill="#fff" fill-opacity="0.21"/>
<ellipse cx="423.3" cy="748.0" rx="3.6" ry="7.3" transform="rotate(-45 423.3 748.0)" fill="#fff" fill-opacity="0.15"/>
<ellipse cx="423.7" cy="748.5" rx="1.7" ry="3.7" transform="rotate(-45 423.7 748.5)" fill="#fff" fill-opacity="0.21"/>
<ellipse cx="365.9" cy="751.1" rx="4.3" ry="5.8" transform="rotate(-26 365.9 751.1)" fill="#fff" fill-opacity="0.28"/>
<ellipse cx="366.0" cy="751.5" rx="2.2" ry="2.8" transform="rotate(-26 366.0 751.5)" fill="#fff" fill-opacity="0.40"/>
<ellipse cx="343.0" cy="757.2" rx="4.0" ry="5.7" transform="rotate(-39 343.0 757.2)" fill="#fff" fill-opacity="0.12"/>
<ellipse cx="343.3" cy="757.5" rx="2.0" ry="2.7" transform="rotate(-39 343.3 757.5)" fill="#fff" fill-opacity="0.17"/>
<ellipse cx="406.7" cy="757.8" rx="4.2" ry="5.5" transform="rotate(-20 406.7 757.8)" fill="#fff" fill-opacity="0.27"/>
<ellipse cx="406.7" cy="758.1" rx="2.1" ry="2.6" transform="rotate(-20 406.7 758.1)" fill="#fff" fill-opacity="0.39"/>
<ellipse cx="387.1" cy="765.8" rx="3.9" ry="5.4" transform="rotate(-30 387.1 765.8)" fill="#fff" fill-opacity="0.22"/>
<ellipse cx="387.1" cy="766.1" rx="1.9" ry="2.5" transform="rotate(-30 387.1 766.1)" fill="#fff" fill-opacity="0.32"/>
<ellipse cx="394.5" cy="768.3" rx="4.4" ry="7.3" transform="rotate(-46 394.5 768.3)" fill="#fff" fill-opacity="0.13"/>
<ellipse cx="394.5" cy="768.6" rx="2.2" ry="3.7" transform="rotate(-46 394.5 768.6)" fill="#fff" fill-opacity="0.19"/>
<ellipse cx="410.5" cy="772.4" rx="3.5" ry="7.3" transform="rotate(-32 410.5 772.4)" fill="#fff" fill-opacity="0.17"/>
<ellipse cx="410.7" cy="772.4" rx="1.7" ry="3.7" transform="rotate(-32 410.7 772.4)" fill="#fff" fill-opacity="0.25"/>
<ellipse cx="424.9" cy="768.3" rx="4.3" ry="5.8" transform="rotate(-45 424.9 768.3)" fill="#fff" fill-opacity="0.21"/>
<ellipse cx="425.0" cy="768.7" rx="2.2" ry="2.8" transform="rotate(-45 425.0 768.7)" fill="#fff" fill-opacity="0.30"/>
<ellipse cx="378.8" cy="773.7" rx="4.3" ry="6.0" transform="rotate(-15 378.8 773.7)" fill="#fff" fill-opacity="0.12"/>
<ellipse cx="378.9" cy="774.3" rx="2.2" ry="2.9" transform="rotate(-15 378.9 774.3)" fill="#fff" fill-opacity="0.17"/>
<ellipse cx="350.0" cy="774.8" rx="4.2" ry="5.6" transform="rotate(-23 350.0 774.8)" fill="#fff" fill-opacity="0.19"/>
<ellipse cx="350.3" cy="775.4" rx="2.1" ry="2.6" transform="rotate(-23 350.3 775.4)" fill="#fff" fill-opacity="0.28"/>
<ellipse cx="343.4" cy="780.1" rx="3.9" ry="6.6" transform="rotate(-22 343.4 780.1)" fill="#fff" fill-opacity="0.13"/>
<ellipse cx="343.8" cy="780.3" rx="1.9" ry="3.2" transform="rotate(-22 343.8 780.3)" fill="#fff" fill-opacity="0.18"/>
<ellipse cx="358.6" cy="782.2" rx="4.1" ry="6.1" transform="rotate(-37 358.6 782.2)" fill="#fff" fill-opacity="0.13"/>
<ellipse cx="359.0" cy="782.7" rx="2.0" ry="2.9" transform="rotate(-37 359.0 782.7)" fill="#fff" fill-opacity="0.19"/>
<ellipse cx="370.6" cy="786.4" rx="3.5" ry="6.3" transform="rotate(-19 370.6 786.4)" fill="#fff" fill-opacity="0.17"/>
<ellipse cx="371.0" cy="786.5" rx="1.7" ry="3.1" transform="rotate(-19 371.0 786.5)" fill="#fff" fill-opacity="0.24"/>
<ellipse cx="350.5" cy="790.7" rx="3.9" ry="5.6" transform="rotate(-33 350.5 790.7)" fill="#fff" fill-opacity="0.20"/>
<ellipse cx="350.7" cy="791.0" rx="1.9" ry="2.6" transform="rotate(-33 350.7 791.0)" fill="#fff" fill-opacity="0.30"/>
<ellipse cx="336.5" cy="795.4" rx="4.3" ry="5.8" transform="rotate(-45 336.5 795.4)" fill="#fff" fill-opacity="0.18"/>
<ellipse cx="336.7" cy="795.4" rx="2.2" ry="2.7" transform="rotate(-45 336.7 795.4)" fill="#fff" fill-opacity="0.26"/>
<ellipse cx="391.1" cy="793.2" rx="3.6" ry="6.8" transform="rotate(-29 391.1 793.2)" fill="#fff" fill-opacity="0.20"/>
<ellipse cx="391.2" cy="793.7" rx="1.8" ry="3.4" transform="rotate(-29 391.2 793.7)" fill="#fff" fill-opacity="0.29"/>
<ellipse cx="332.6" cy="800.5" rx="4.3" ry="5.9" transform="rotate(-31 332.6 800.5)" fill="#fff" fill-opacity="0.12"/>
<ellipse cx="333.0" cy="800.7" rx="2.2" ry="2.8" transform="rotate(-31 333.0 800.7)" fill="#fff" fill-opacity="0.17"/>
<ellipse cx="374.6" cy="801.7" rx="3.6" ry="5.3" transform="rotate(-24 374.6 801.7)" fill="#fff" fill-opacity="0.21"/>
<ellipse cx="374.8" cy="801.7" rx="1.8" ry="2.5" transform="rotate(-24 374.8 801.7)" fill="#fff" fill-opacity="0.31"/>
<ellipse cx="378.4" cy="810.7" rx="3.9" ry="7.1" transform="rotate(-38 378.4 810.7)" fill="#fff" fill-opacity="0.23"/>
<ellipse cx="378.4" cy="811.2" rx="1.9" ry="3.5" transform="rotate(-38 378.4 811.2)" fill="#fff" fill-opacity="0.34"/>
<ellipse cx="368.8" cy="813.0" rx="4.1" ry="5.8" transform="rotate(-47 368.8 813.0)" fill="#fff" fill-opacity="0.18"/>
<ellipse cx="368.9" cy="813.5" rx="2.1" ry="2.7" transform="rotate(-47 368.9 813.5)" fill="#fff" fill-opacity="0.27"/>
<ellipse cx="402.5" cy="814.9" rx="4.4" ry="6.0" transform="rotate(-42 402.5 814.9)" fill="#fff" fill-opacity="0.13"/>
<ellipse cx="402.5" cy="815.0" rx="2.2" ry="2.9" transform="rotate(-42 402.5 815.0)" fill="#fff" fill-opacity="0.20"/>
<ellipse cx="380.8" cy="818.5" rx="4.0" ry="6.9" transform="rotate(-17 380.8 818.5)" fill="#fff" fill-opacity="0.20"/>
<ellipse cx="381.2" cy="818.7" rx="2.0" ry="3.4" transform="rotate(-17 381.2 818.7)" fill="#fff" fill-opacity="0.29"/>
<ellipse cx="333.7" cy="819.7" rx="3.6" ry="6.0" transform="rotate(-24 333.7 819.7)" fill="#fff" fill-opacity="0.25"/>
<ellipse cx="333.7" cy="819.9" rx="1.7" ry="2.9" transform="rotate(-24 333.7 819.9)" fill="#fff" fill-opacity="0.36"/>
<ellipse cx="359.2" cy="820.1" rx="4.1" ry="7.3" transform="rotate(-16 359.2 820.1)" fill="#fff" fill-opacity="0.13"/>
<ellipse cx="359.2" cy="820.2" rx="2.1" ry="3.6" transform="rotate(-16 359.2 820.2)" fill="#fff" fill-opacity="0.19"/>
<ellipse cx="365.6" cy="821.2" rx="3.7" ry="7.2" transform="rotate(-22 365.6 821.2)" fill="#fff" fill-opacity="0.19"/>
<ellipse cx="365.6" cy="821.4" rx="1.8" ry="3.6" transform="rotate(-22 365.6 821.4)" fill="#fff" fill-opacity="0.27"/>
<ellipse cx="336.9" cy="823.1" rx="4.2" ry="5.8" transform="rotate(-22 336.9 823.1)" fill="#fff" fill-opacity="0.13"/>
<ellipse cx="337.2" cy="823.6" rx="2.1" ry="2.7" transform="rotate(-22 337.2 823.6)" fill="#fff" fill-opacity="0.19"/>
<ellipse cx="398.1" cy="826.0" rx="4.1" ry="6.8" transform="rotate(-17 398.1 826.0)" fill="#fff" fill-opacity="0.15"/>
<ellipse cx="398.4" cy="826.0" rx="2.1" ry="3.3" transform="rotate(-17 398.4 826.0)" fill="#fff" fill-opacity="0.22"/>
<ellipse cx="347.9" cy="827.2" rx="3.5" ry="6.1" transform="rotate(-20 347.9 827.2)" fill="#fff" fill-opacity="0.23"/>
<ellipse cx="348.0" cy="827.2" rx="1.7" ry="3.0" transform="rotate(-20 348.0 827.2)" fill="#fff" fill-opacity="0.33"/>
<ellipse cx="417.3" cy="827.0" rx="3.9" ry="5.2" transform="rotate(-21 417.3 827.0)" fill="#fff" fill-opacity="0.21"/>
<ellipse cx="417.7" cy="827.5" rx="1.9" ry="2.4" transform="rotate(-21 417.7 827.5)" fill="#fff" fill-opacity="0.31"/>
<ellipse cx="361.2" cy="832.1" rx="3.6" ry="6.0" transform="rotate(-34 361.2 832.1)" fill="#fff" fill-opacity="0.18"/>
<ellipse cx="361.5" cy="832.2" rx="1.7" ry="2.9" transform="rotate(-34 361.5 832.2)" fill="#fff" fill-opacity="0.27"/>
<ellipse cx="393.8" cy="832.0" rx="3.8" ry="6.8" transform="rotate(-40 393.8 832.0)" fill="#fff" fill-opacity="0.16"/>
<ellipse cx="394.0" cy="832.1" rx="1.9" ry="3.4" transform="rotate(-40 394.0 832.1)" fill="#fff" fill-opacity="0.23"/>
<ellipse cx="400.6" cy="833.6" rx="3.7" ry="5.6" transform="rotate(-20 400.6 833.6)" fill="#fff" fill-opacity="0.34"/>
<ellipse cx="400.5" cy="834.0" rx="1.8" ry="2.7" transform="rotate(-20 400.5 834.0)" fill="#fff" fill-opacity="0.49"/>
<ellipse cx="416.6" cy="835.3" rx="3.9" ry="6.1" transform="rotate(-18 416.6 835.3)" fill="#fff" fill-opacity="0.27"/>
<ellipse cx="416.5" cy="835.6" rx="1.9" ry="2.9" transform="rotate(-18 416.5 835.6)" fill="#fff" fill-opacity="0.39"/>
<ellipse cx="423.3" cy="837.5" rx="3.4" ry="6.4" transform="rotate(-44 423.3 837.5)" fill="#fff" fill-opacity="0.14"/>
<ellipse cx="423.7" cy="837.5" rx="1.6" ry="3.1" transform="rotate(-44 423.7 837.5)" fill="#fff" fill-opacity="0.21"/>
<ellipse cx="353.2" cy="841.2" rx="4.0" ry="5.4" transform="rotate(-37 353.2 841.2)" fill="#fff" fill-opacity="0.25"/>
<ellipse cx="353.3" cy="841.4" rx="2.0" ry="2.5" transform="rotate(-37 353.3 841.4)" fill="#fff" fill-opacity="0.37"/>
<ellipse cx="378.3" cy="845.6" rx="4.0" ry="5.4" transform="rotate(-26 378.3 845.6)" fill="#fff" fill-opacity="0.27"/>
<ellipse cx="378.5" cy="845.6" rx="2.0" ry="2.5" transform="rotate(-26 378.5 845.6)" fill="#fff" fill-opacity="0.40"/>
<ellipse cx="388.3" cy="845.1" rx="4.1" ry="6.4" transform="rotate(-36 388.3 845.1)" fill="#fff" fill-opacity="0.23"/>
<ellipse cx="388.3" cy="845.4" rx="2.0" ry="3.1" transform="rotate(-36 388.3 845.4)" fill="#fff" fill-opacity="0.33"/>
<ellipse cx="398.3" cy="850.8" rx="4.0" ry="6.8" transform="rotate(-20 398.3 850.8)" fill="#fff" fill-opacity="0.39"/>
<ellipse cx="398.5" cy="850.9" rx="2.0" ry="3.3" transform="rotate(-20 398.5 850.9)" fill="#fff" fill-opacity="0.57"/>
<ellipse cx="337.6" cy="853.3" rx="3.5" ry="5.9" transform="rotate(-49 337.6 853.3)" fill="#fff" fill-opacity="0.24"/>
<ellipse cx="337.5" cy="853.4" rx="1.7" ry="2.8" transform="rotate(-49 337.5 853.4)" fill="#fff" fill-opacity="0.35"/>
<ellipse cx="363.8" cy="852.0" rx="4.1" ry="6.1" transform="rotate(-48 363.8 852.0)" fill="#fff" fill-opacity="0.21"/>
<ellipse cx="363.9" cy="852.4" rx="2.1" ry="2.9" transform="rotate(-48 363.9 852.4)" fill="#fff" fill-opacity="0.31"/>
<ellipse cx="451.8" cy="489.1" rx="4.8" ry="5.8" transform="rotate(-35 451.8 489.1)" fill="#fff" fill-opacity="0.11"/>
<ellipse cx="451.9" cy="489.2" rx="3.3" ry="3.7" transform="rotate(-35 451.9 489.2)" fill="#fff" fill-opacity="0.11"/>
<ellipse cx="463.9" cy="492.8" rx="4.8" ry="5.8" transform="rotate(-25 463.9 492.8)" fill="#fff" fill-opacity="0.20"/>
<ellipse cx="464.0" cy="492.9" rx="3.3" ry="3.7" transform="rotate(-25 464.0 492.9)" fill="#fff" fill-opacity="0.20"/>
<ellipse cx="485.8" cy="491.9" rx="4.8" ry="5.8" transform="rotate(-31 485.8 491.9)" fill="#fff" fill-opacity="0.12"/>
<ellipse cx="485.9" cy="492.1" rx="3.3" ry="3.7" transform="rotate(-31 485.9 492.1)" fill="#fff" fill-opacity="0.12"/>
<ellipse cx="506.9" cy="487.7" rx="4.8" ry="5.8" transform="rotate(-36 506.9 487.7)" fill="#fff" fill-opacity="0.08"/>
<ellipse cx="507.0" cy="487.8" rx="3.3" ry="3.7" transform="rotate(-36 507.0 487.8)" fill="#fff" fill-opacity="0.08"/>
<ellipse cx="453.9" cy="495.9" rx="4.8" ry="5.8" transform="rotate(-34 453.9 495.9)" fill="#fff" fill-opacity="0.10"/>
<ellipse cx="454.0" cy="496.1" rx="3.3" ry="3.7" transform="rotate(-34 454.0 496.1)" fill="#fff" fill-opacity="0.10"/>
<ellipse cx="497.8" cy="496.8" rx="4.8" ry="5.8" transform="rotate(-17 497.8 496.8)" fill="#fff" fill-opacity="0.11"/>
<ellipse cx="497.9" cy="496.9" rx="3.3" ry="3.7" transform="rotate(-17 497.9 496.9)" fill="#fff" fill-opacity="0.11"/>
<ellipse cx="509.7" cy="494.7" rx="4.8" ry="5.8" transform="rotate(-33 509.7 494.7)" fill="#fff" fill-opacity="0.10"/>
<ellipse cx="509.8" cy="494.8" rx="3.3" ry="3.7" transform="rotate(-33 509.8 494.8)" fill="#fff" fill-opacity="0.10"/>
<ellipse cx="453.9" cy="502.8" rx="4.8" ry="5.8" transform="rotate(-40 453.9 502.8)" fill="#fff" fill-opacity="0.19"/>
<ellipse cx="454.0" cy="502.9" rx="3.3" ry="3.7" transform="rotate(-40 454.0 502.9)" fill="#fff" fill-opacity="0.19"/>
<ellipse cx="469.9" cy="503.8" rx="4.8" ry="5.8" transform="rotate(-16 469.9 503.8)" fill="#fff" fill-opacity="0.15"/>
<ellipse cx="470.0" cy="504.0" rx="3.3" ry="3.7" transform="rotate(-16 470.0 504.0)" fill="#fff" fill-opacity="0.15"/>
<ellipse cx="497.8" cy="513.8" rx="4.8" ry="5.8" transform="rotate(-21 497.8 513.8)" fill="#fff" fill-opacity="0.16"/>
<ellipse cx="497.9" cy="514.0" rx="3.3" ry="3.7" transform="rotate(-21 497.9 514.0)" fill="#fff" fill-opacity="0.16"/>
<ellipse cx="513.7" cy="517.8" rx="4.8" ry="5.8" transform="rotate(-36 513.7 517.8)" fill="#fff" fill-opacity="0.16"/>
<ellipse cx="513.8" cy="518.0" rx="3.3" ry="3.7" transform="rotate(-36 513.8 518.0)" fill="#fff" fill-opacity="0.16"/>
<ellipse cx="432.0" cy="520.9" rx="4.8" ry="5.8" transform="rotate(-19 432.0 520.9)" fill="#fff" fill-opacity="0.12"/>
<ellipse cx="432.1" cy="521.0" rx="3.3" ry="3.7" transform="rotate(-19 432.1 521.0)" fill="#fff" fill-opacity="0.12"/>
<ellipse cx="483.9" cy="519.8" rx="4.8" ry="5.8" transform="rotate(-35 483.9 519.8)" fill="#fff" fill-opacity="0.20"/>
<ellipse cx="484.0" cy="520.0" rx="3.3" ry="3.7" transform="rotate(-35 484.0 520.0)" fill="#fff" fill-opacity="0.20"/>
<ellipse cx="469.9" cy="522.8" rx="4.8" ry="5.8" transform="rotate(-20 469.9 522.8)" fill="#fff" fill-opacity="0.15"/>
<ellipse cx="470.0" cy="522.9" rx="3.3" ry="3.7" transform="rotate(-20 470.0 522.9)" fill="#fff" fill-opacity="0.15"/>
<ellipse cx="509.7" cy="523.8" rx="4.8" ry="5.8" transform="rotate(-18 509.7 523.8)" fill="#fff" fill-opacity="0.14"/>
<ellipse cx="509.8" cy="524.0" rx="3.3" ry="3.7" transform="rotate(-18 509.8 524.0)" fill="#fff" fill-opacity="0.14"/>
<ellipse cx="486.9" cy="528.8" rx="4.8" ry="5.8" transform="rotate(-28 486.9 528.8)" fill="#fff" fill-opacity="0.16"/>
<ellipse cx="487.0" cy="528.9" rx="3.3" ry="3.7" transform="rotate(-28 487.0 528.9)" fill="#fff" fill-opacity="0.16"/>
<ellipse cx="455.8" cy="532.8" rx="4.8" ry="5.8" transform="rotate(-47 455.8 532.8)" fill="#fff" fill-opacity="0.10"/>
<ellipse cx="455.9" cy="532.9" rx="3.3" ry="3.7" transform="rotate(-47 455.9 532.9)" fill="#fff" fill-opacity="0.10"/>
<ellipse cx="434.9" cy="537.0" rx="4.8" ry="5.8" transform="rotate(-38 434.9 537.0)" fill="#fff" fill-opacity="0.09"/>
<ellipse cx="435.1" cy="537.1" rx="3.3" ry="3.7" transform="rotate(-38 435.1 537.1)" fill="#fff" fill-opacity="0.09"/>
<ellipse cx="503.9" cy="542.8" rx="4.7" ry="5.9" transform="rotate(-49 503.9 542.8)" fill="#fff" fill-opacity="0.15"/>
<ellipse cx="504.0" cy="542.9" rx="3.2" ry="3.7" transform="rotate(-49 504.0 542.9)" fill="#fff" fill-opacity="0.15"/>
<ellipse cx="513.9" cy="542.8" rx="4.7" ry="5.9" transform="rotate(-42 513.9 542.8)" fill="#fff" fill-opacity="0.12"/>
<ellipse cx="514.1" cy="542.9" rx="3.2" ry="3.7" transform="rotate(-42 514.1 542.9)" fill="#fff" fill-opacity="0.12"/>
<ellipse cx="429.6" cy="553.8" rx="4.6" ry="5.9" transform="rotate(-49 429.6 553.8)" fill="#fff" fill-opacity="0.09"/>
<ellipse cx="429.8" cy="553.9" rx="3.0" ry="3.6" transform="rotate(-49 429.8 553.9)" fill="#fff" fill-opacity="0.10"/>
<ellipse cx="441.9" cy="553.0" rx="4.6" ry="5.9" transform="rotate(-32 441.9 553.0)" fill="#fff" fill-opacity="0.16"/>
<ellipse cx="442.0" cy="553.0" rx="3.0" ry="3.6" transform="rotate(-32 442.0 553.0)" fill="#fff" fill-opacity="0.18"/>
<ellipse cx="451.5" cy="553.7" rx="4.6" ry="5.7" transform="rotate(-14 451.5 553.7)" fill="#fff" fill-opacity="0.21"/>
<ellipse cx="451.7" cy="553.8" rx="3.0" ry="3.4" transform="rotate(-14 451.7 553.8)" fill="#fff" fill-opacity="0.23"/>
<ellipse cx="463.7" cy="554.6" rx="4.6" ry="5.8" transform="rotate(-38 463.7 554.6)" fill="#fff" fill-opacity="0.18"/>
<ellipse cx="463.9" cy="554.7" rx="2.9" ry="3.4" transform="rotate(-38 463.9 554.7)" fill="#fff" fill-opacity="0.20"/>
<ellipse cx="492.7" cy="552.7" rx="4.6" ry="6.0" transform="rotate(-43 492.7 552.7)" fill="#fff" fill-opacity="0.15"/>
<ellipse cx="492.8" cy="552.8" rx="2.9" ry="3.7" transform="rotate(-43 492.8 552.8)" fill="#fff" fill-opacity="0.17"/>
<ellipse cx="504.0" cy="557.3" rx="4.6" ry="6.2" transform="rotate(-16 504.0 557.3)" fill="#fff" fill-opacity="0.22"/>
<ellipse cx="504.1" cy="557.6" rx="2.9" ry="3.7" transform="rotate(-16 504.1 557.6)" fill="#fff" fill-opacity="0.25"/>
<ellipse cx="508.6" cy="564.3" rx="4.4" ry="6.1" transform="rotate(-24 508.6 564.3)" fill="#fff" fill-opacity="0.09"/>
<ellipse cx="508.8" cy="564.5" rx="2.7" ry="3.6" transform="rotate(-24 508.8 564.5)" fill="#fff" fill-opacity="0.11"/>
<ellipse cx="479.1" cy="569.0" rx="4.4" ry="5.7" transform="rotate(-48 479.1 569.0)" fill="#fff" fill-opacity="0.24"/>
<ellipse cx="479.2" cy="569.1" rx="2.6" ry="3.2" transform="rotate(-48 479.2 569.1)" fill="#fff" fill-opacity="0.28"/>
<ellipse cx="433.2" cy="569.9" rx="4.4" ry="6.3" transform="rotate(-44 433.2 569.9)" fill="#fff" fill-opacity="0.11"/>
<ellipse cx="433.2" cy="570.0" rx="2.6" ry="3.6" transform="rotate(-44 433.2 570.0)" fill="#fff" fill-opacity="0.13"/>
<ellipse cx="495.8" cy="571.0" rx="4.4" ry="5.6" transform="rotate(-45 495.8 571.0)" fill="#fff" fill-opacity="0.16"/>
<ellipse cx="496.0" cy="571.3" rx="2.6" ry="3.1" transform="rotate(-45 496.0 571.3)" fill="#fff" fill-opacity="0.20"/>
<ellipse cx="434.6" cy="577.6" rx="4.6" ry="6.7" transform="rotate(-24 434.6 577.6)" fill="#fff" fill-opacity="0.10"/>
<ellipse cx="434.8" cy="577.7" rx="2.7" ry="3.8" transform="rotate(-24 434.8 577.7)" fill="#fff" fill-opacity="0.12"/>
<ellipse cx="472.7" cy="575.2" rx="4.2" ry="5.5" transform="rotate(-45 472.7 575.2)" fill="#fff" fill-opacity="0.22"/>
<ellipse cx="472.9" cy="575.4" rx="2.4" ry="3.0" transform="rotate(-45 472.9 575.4)" fill="#fff" fill-opacity="0.27"/>
<ellipse cx="499.1" cy="578.2" rx="4.3" ry="6.6" transform="rotate(-48 499.1 578.2)" fill="#fff" fill-opacity="0.22"/>
<ellipse cx="499.3" cy="578.5" rx="2.5" ry="3.7" transform="rotate(-48 499.3 578.5)" fill="#fff" fill-opacity="0.27"/>
<ellipse cx="442.2" cy="584.2" rx="4.0" ry="5.7" transform="rotate(-27 442.2 584.2)" fill="#fff" fill-opacity="0.24"/>
<ellipse cx="442.2" cy="584.5" rx="2.2" ry="3.0" transform="rotate(-27 442.2 584.5)" fill="#fff" fill-opacity="0.31"/>
<ellipse cx="450.8" cy="588.3" rx="4.3" ry="6.3" transform="rotate(-34 450.8 588.3)" fill="#fff" fill-opacity="0.12"/>
<ellipse cx="450.9" cy="588.6" rx="2.3" ry="3.4" transform="rotate(-34 450.9 588.6)" fill="#fff" fill-opacity="0.16"/>
<ellipse cx="468.1" cy="590.6" rx="4.3" ry="6.5" transform="rotate(-36 468.1 590.6)" fill="#fff" fill-opacity="0.11"/>
<ellipse cx="468.4" cy="590.8" rx="2.4" ry="3.5" transform="rotate(-36 468.4 590.8)" fill="#fff" fill-opacity="0.15"/>
<ellipse cx="474.2" cy="591.4" rx="3.8" ry="6.4" transform="rotate(-17 474.2 591.4)" fill="#fff" fill-opacity="0.18"/>
<ellipse cx="474.5" cy="591.4" rx="2.0" ry="3.4" transform="rotate(-17 474.5 591.4)" fill="#fff" fill-opacity="0.24"/>
<ellipse cx="437.7" cy="592.5" rx="4.3" ry="6.5" transform="rotate(-20 437.7 592.5)" fill="#fff" fill-opacity="0.17"/>
<ellipse cx="438.0" cy="592.9" rx="2.3" ry="3.4" transform="rotate(-20 438.0 592.9)" fill="#fff" fill-opacity="0.23"/>
<ellipse cx="448.0" cy="593.8" rx="4.4" ry="5.8" transform="rotate(-48 448.0 593.8)" fill="#fff" fill-opacity="0.34"/>
<ellipse cx="448.3" cy="594.0" rx="2.4" ry="2.9" transform="rotate(-48 448.3 594.0)" fill="#fff" fill-opacity="0.46"/>
<ellipse cx="490.1" cy="593.5" rx="3.7" ry="5.6" transform="rotate(-41 490.1 593.5)" fill="#fff" fill-opacity="0.21"/>
<ellipse cx="490.2" cy="594.0" rx="1.9" ry="2.8" transform="rotate(-41 490.2 594.0)" fill="#fff" fill-opacity="0.28"/>
<ellipse cx="456.7" cy="599.1" rx="4.0" ry="5.6" transform="rotate(-21 456.7 599.1)" fill="#fff" fill-opacity="0.22"/>
<ellipse cx="457.1" cy="599.2" rx="2.1" ry="2.8" transform="rotate(-21 457.1 599.2)" fill="#fff" fill-opacity="0.31"/>
<ellipse cx="438.5" cy="600.5" rx="4.3" ry="6.4" transform="rotate(-19 438.5 600.5)" fill="#fff" fill-opacity="0.37"/>
<ellipse cx="438.7" cy="600.7" rx="2.3" ry="3.2" transform="rotate(-19 438.7 600.7)" fill="#fff" fill-opacity="0.51"/>
<ellipse cx="449.3" cy="599.8" rx="3.8" ry="6.4" transform="rotate(-48 449.3 599.8)" fill="#fff" fill-opacity="0.35"/>
<ellipse cx="449.5" cy="600.3" rx="1.9" ry="3.2" transform="rotate(-48 449.5 600.3)" fill="#fff" fill-opacity="0.49"/>
<ellipse cx="512.8" cy="602.4" rx="3.6" ry="6.2" transform="rotate(-21 512.8 602.4)" fill="#fff" fill-opacity="0.11"/>
<ellipse cx="513.0" cy="602.8" rx="1.8" ry="3.1" transform="rotate(-21 513.0 602.8)" fill="#fff" fill-opacity="0.16"/>
<ellipse cx="464.0" cy="607.2" rx="3.5" ry="6.0" transform="rotate(-30 464.0 607.2)" fill="#fff" fill-opacity="0.13"/>
<ellipse cx="464.1" cy="607.2" rx="1.7" ry="2.9" transform="rotate(-30 464.1 607.2)" fill="#fff" fill-opacity="0.18"/>
<ellipse cx="439.7" cy="611.6" rx="3.5" ry="7.0" transform="rotate(-39 439.7 611.6)" fill="#fff" fill-opacity="0.13"/>
<ellipse cx="439.9" cy="611.5" rx="1.7" ry="3.5" transform="rotate(-39 439.9 611.5)" fill="#fff" fill-opacity="0.19"/>
<ellipse cx="452.5" cy="610.0" rx="4.0" ry="6.8" transform="rotate(-46 452.5 610.0)" fill="#fff" fill-opacity="0.22"/>
<ellipse cx="452.7" cy="610.3" rx="2.0" ry="3.4" transform="rotate(-46 452.7 610.3)" fill="#fff" fill-opacity="0.32"/>
<ellipse cx="476.6" cy="611.2" rx="4.2" ry="6.9" transform="rotate(-17 476.6 611.2)" fill="#fff" fill-opacity="0.22"/>
<ellipse cx="476.6" cy="611.2" rx="2.1" ry="3.4" transform="rotate(-17 476.6 611.2)" fill="#fff" fill-opacity="0.32"/>
<ellipse cx="488.7" cy="613.5" rx="4.3" ry="6.2" transform="rotate(-19 488.7 613.5)" fill="#fff" fill-opacity="0.12"/>
<ellipse cx="489.1" cy="613.5" rx="2.2" ry="3.0" transform="rotate(-19 489.1 613.5)" fill="#fff" fill-opacity="0.17"/>
<ellipse cx="428.5" cy="613.0" rx="3.7" ry="6.0" transform="rotate(-39 428.5 613.0)" fill="#fff" fill-opacity="0.23"/>
<ellipse cx="428.9" cy="613.3" rx="1.8" ry="2.9" transform="rotate(-39 428.9 613.3)" fill="#fff" fill-opacity="0.34"/>
<ellipse cx="513.1" cy="612.5" rx="4.4" ry="7.1" transform="rotate(-23 513.1 612.5)" fill="#fff" fill-opacity="0.23"/>
<ellipse cx="513.2" cy="612.9" rx="2.2" ry="3.6" transform="rotate(-23 513.2 612.9)" fill="#fff" fill-opacity="0.33"/>
<ellipse cx="485.7" cy="616.1" rx="4.3" ry="7.2" transform="rotate(-42 485.7 616.1)" fill="#fff" fill-opacity="0.29"/>
<ellipse cx="486.0" cy="616.2" rx="2.2" ry="3.6" transform="rotate(-42 486.0 616.2)" fill="#fff" fill-opacity="0.43"/>
<ellipse cx="504.1" cy="617.6" rx="4.2" ry="5.4" transform="rotate(-31 504.1 617.6)" fill="#fff" fill-opacity="0.27"/>
<ellipse cx="504.4" cy="617.8" rx="2.1" ry="2.5" transform="rotate(-31 504.4 617.8)" fill="#fff" fill-opacity="0.39"/>
<ellipse cx="465.5" cy="619.6" rx="4.0" ry="6.4" transform="rotate(-44 465.5 619.6)" fill="#fff" fill-opacity="0.20"/>
<ellipse cx="465.7" cy="619.6" rx="2.0" ry="3.1" transform="rotate(-44 465.7 619.6)" fill="#fff" fill-opacity="0.30"/>
<ellipse cx="475.1" cy="621.4" rx="3.6" ry="5.4" transform="rotate(-15 475.1 621.4)" fill="#fff" fill-opacity="0.27"/>
<ellipse cx="475.4" cy="621.4" rx="1.7" ry="2.5" transform="rotate(-15 475.4 621.4)" fill="#fff" fill-opacity="0.39"/>
<ellipse cx="431.0" cy="622.9" rx="4.1" ry="6.2" transform="rotate(-44 431.0 622.9)" fill="#fff" fill-opacity="0.24"/>
<ellipse cx="431.1" cy="623.0" rx="2.0" ry="3.0" transform="rotate(-44 431.1 623.0)" fill="#fff" fill-opacity="0.34"/>
<ellipse cx="491.9" cy="624.6" rx="3.6" ry="6.8" transform="rotate(-49 491.9 624.6)" fill="#fff" fill-opacity="0.15"/>
<ellipse cx="492.2" cy="624.6" rx="1.7" ry="3.4" transform="rotate(-49 492.2 624.6)" fill="#fff" fill-opacity="0.22"/>
<ellipse cx="439.5" cy="624.8" rx="3.7" ry="6.8" transform="rotate(-28 439.5 624.8)" fill="#fff" fill-opacity="0.21"/>
<ellipse cx="439.9" cy="625.4" rx="1.8" ry="3.4" transform="rotate(-28 439.9 625.4)" fill="#fff" fill-opacity="0.31"/>
<ellipse cx="500.0" cy="628.0" rx="4.1" ry="7.4" transform="rotate(-32 500.0 628.0)" fill="#fff" fill-opacity="0.14"/>
<ellipse cx="500.3" cy="628.1" rx="2.0" ry="3.7" transform="rotate(-32 500.3 628.1)" fill="#fff" fill-opacity="0.20"/>
<ellipse cx="490.1" cy="628.8" rx="3.8" ry="6.8" transform="rotate(-35 490.1 628.8)" fill="#fff" fill-opacity="0.13"/>
<ellipse cx="490.1" cy="629.3" rx="1.9" ry="3.4" transform="rotate(-35 490.1 629.3)" fill="#fff" fill-opacity="0.19"/>
<ellipse cx="513.3" cy="631.0" rx="3.6" ry="7.1" transform="rotate(-49 513.3 631.0)" fill="#fff" fill-opacity="0.17"/>
<ellipse cx="513.4" cy="631.0" rx="1.8" ry="3.5" transform="rotate(-49 513.4 631.0)" fill="#fff" fill-opacity="0.25"/>
<ellipse cx="462.8" cy="631.5" rx="3.6" ry="7.3" transform="rotate(-43 462.8 631.5)" fill="#fff" fill-opacity="0.27"/>
<ellipse cx="462.9" cy="631.7" rx="1.7" ry="3.6" transform="rotate(-43 462.9 631.7)" fill="#fff" fill-opacity="0.39"/>
<ellipse cx="483.9" cy="636.4" rx="3.8" ry="7.5" transform="rotate(-47 483.9 636.4)" fill="#fff" fill-opacity="0.14"/>
<ellipse cx="484.0" cy="636.6" rx="1.8" ry="3.8" transform="rotate(-47 484.0 636.6)" fill="#fff" fill-opacity="0.21"/>
<ellipse cx="469.2" cy="638.7" rx="4.4" ry="5.5" transform="rotate(-19 469.2 638.7)" fill="#fff" fill-opacity="0.23"/>
<ellipse cx="469.4" cy="638.8" rx="2.2" ry="2.6" transform="rotate(-19 469.4 638.8)" fill="#fff" fill-opacity="0.34"/>
<ellipse cx="504.0" cy="642.1" rx="3.5" ry="6.4" transform="rotate(-37 504.0 642.1)" fill="#fff" fill-opacity="0.25"/>
<ellipse cx="504.3" cy="642.2" rx="1.7" ry="3.1" transform="rotate(-37 504.3 642.2)" fill="#fff" fill-opacity="0.36"/>
<ellipse cx="458.2" cy="641.8" rx="3.6" ry="5.6" transform="rotate(-42 458.2 641.8)" fill="#fff" fill-opacity="0.18"/>
<ellipse cx="458.4" cy="642.1" rx="1.7" ry="2.7" transform="rotate(-42 458.4 642.1)" fill="#fff" fill-opacity="0.26"/>
<ellipse cx="438.8" cy="642.9" rx="4.2" ry="6.7" transform="rotate(-48 438.8 642.9)" fill="#fff" fill-opacity="0.19"/>
<ellipse cx="439.2" cy="643.4" rx="2.1" ry="3.3" transform="rotate(-48 439.2 643.4)" fill="#fff" fill-opacity="0.28"/>
<ellipse cx="472.4" cy="646.2" rx="3.5" ry="5.4" transform="rotate(-24 472.4 646.2)" fill="#fff" fill-opacity="0.13"/>
<ellipse cx="472.6" cy="646.7" rx="1.7" ry="2.5" transform="rotate(-24 472.6 646.7)" fill="#fff" fill-opacity="0.19"/>
<ellipse cx="484.6" cy="648.2" rx="3.9" ry="6.0" transform="rotate(-48 484.6 648.2)" fill="#fff" fill-opacity="0.19"/>
<ellipse cx="484.5" cy="648.4" rx="1.9" ry="2.9" transform="rotate(-48 484.5 648.4)" fill="#fff" fill-opacity="0.27"/>
<ellipse cx="439.6" cy="650.7" rx="4.3" ry="7.4" transform="rotate(-19 439.6 650.7)" fill="#fff" fill-opacity="0.24"/>
<ellipse cx="440.0" cy="650.6" rx="2.1" ry="3.7" transform="rotate(-19 440.0 650.6)" fill="#fff" fill-opacity="0.35"/>
<ellipse cx="513.0" cy="653.4" rx="3.5" ry="5.7" transform="rotate(-19 513.0 653.4)" fill="#fff" fill-opacity="0.15"/>
<ellipse cx="513.3" cy="653.4" rx="1.7" ry="2.7" transform="rotate(-19 513.3 653.4)" fill="#fff" fill-opacity="0.22"/>
<ellipse cx="492.9" cy="653.9" rx="3.6" ry="5.9" transform="rotate(-34 492.9 653.9)" fill="#fff" fill-opacity="0.35"/>
<ellipse cx="493.0" cy="654.2" rx="1.7" ry="2.8" transform="rotate(-34 493.0 654.2)" fill="#fff" fill-opacity="0.51"/>
<ellipse cx="468.4" cy="655.2" rx="3.9" ry="6.7" transform="rotate(-50 468.4 655.2)" fill="#fff" fill-opacity="0.19"/>
<ellipse cx="468.8" cy="655.5" rx="1.9" ry="3.3" transform="rotate(-50 468.8 655.5)" fill="#fff" fill-opacity="0.28"/>
<ellipse cx="484.6" cy="656.2" rx="4.1" ry="6.6" transform="rotate(-32 484.6 656.2)" fill="#fff" fill-opacity="0.20"/>
<ellipse cx="484.9" cy="656.3" rx="2.0" ry="3.2" transform="rotate(-32 484.9 656.3)" fill="#fff" fill-opacity="0.30"/>
<ellipse cx="454.7" cy="661.5" rx="3.6" ry="7.3" transform="rotate(-37 454.7 661.5)" fill="#fff" fill-opacity="0.24"/>
<ellipse cx="455.1" cy="661.7" rx="1.7" ry="3.6" transform="rotate(-37 455.1 661.7)" fill="#fff" fill-opacity="0.35"/>
<ellipse cx="464.7" cy="662.7" rx="3.5" ry="6.2" transform="rotate(-49 464.7 662.7)" fill="#fff" fill-opacity="0.12"/>
<ellipse cx="465.0" cy="662.8" rx="1.7" ry="3.0" transform="rotate(-49 465.0 662.8)" fill="#fff" fill-opacity="0.18"/>
<ellipse cx="497.9" cy="661.2" rx="4.3" ry="5.2" transform="rotate(-26 497.9 661.2)" fill="#fff" fill-opacity="0.28"/>
<ellipse cx="498.3" cy="661.4" rx="2.2" ry="2.4" transform="rotate(-26 498.3 661.4)" fill="#fff" fill-opacity="0.40"/>
<ellipse cx="492.2" cy="662.1" rx="3.6" ry="6.6" transform="rotate(-14 492.2 662.1)" fill="#fff" fill-opacity="0.28"/>
<ellipse cx="492.2" cy="662.6" rx="1.7" ry="3.3" transform="rotate(-14 492.2 662.6)" fill="#fff" fill-opacity="0.40"/>
<ellipse cx="483.1" cy="664.6" rx="3.8" ry="5.9" transform="rotate(-15 483.1 664.6)" fill="#fff" fill-opacity="0.19"/>
<ellipse cx="483.4" cy="664.7" rx="1.9" ry="2.8" transform="rotate(-15 483.4 664.7)" fill="#fff" fill-opacity="0.28"/>
<ellipse cx="438.3" cy="664.3" rx="3.7" ry="6.6" transform="rotate(-50 438.3 664.3)" fill="#fff" fill-opacity="0.14"/>
<ellipse cx="438.5" cy="664.5" rx="1.8" ry="3.2" transform="rotate(-50 438.5 664.5)" fill="#fff" fill-opacity="0.20"/>
<ellipse cx="512.7" cy="667.3" rx="3.5" ry="7.4" transform="rotate(-46 512.7 667.3)" fill="#fff" fill-opacity="0.13"/>
<ellipse cx="513.0" cy="667.5" rx="1.7" ry="3.7" transform="rotate(-46 513.0 667.5)" fill="#fff" fill-opacity="0.20"/>
<ellipse cx="481.3" cy="672.0" rx="4.0" ry="5.6" transform="rotate(-42 481.3 672.0)" fill="#fff" fill-opacity="0.38"/>
<ellipse cx="481.5" cy="672.3" rx="2.0" ry="2.6" transform="rotate(-42 481.5 672.3)" fill="#fff" fill-opacity="0.55"/>
<ellipse cx="428.2" cy="674.8" rx="4.3" ry="5.8" transform="rotate(-16 428.2 674.8)" fill="#fff" fill-opacity="0.23"/>
<ellipse cx="428.4" cy="675.4" rx="2.2" ry="2.8" transform="rotate(-16 428.4 675.4)" fill="#fff" fill-opacity="0.33"/>
<ellipse cx="459.3" cy="675.0" rx="4.4" ry="5.9" transform="rotate(-40 459.3 675.0)" fill="#fff" fill-opacity="0.24"/>
<ellipse cx="459.4" cy="675.3" rx="2.2" ry="2.8" transform="rotate(-40 459.4 675.3)" fill="#fff" fill-opacity="0.35"/>
<ellipse cx="473.9" cy="675.7" rx="3.5" ry="6.4" transform="rotate(-26 473.9 675.7)" fill="#fff" fill-opacity="0.26"/>
<ellipse cx="474.3" cy="675.9" rx="1.7" ry="3.1" transform="rotate(-26 474.3 675.9)" fill="#fff" fill-opacity="0.38"/>
<ellipse cx="488.5" cy="676.4" rx="3.5" ry="5.6" transform="rotate(-15 488.5 676.4)" fill="#fff" fill-opacity="0.25"/>
<ellipse cx="488.5" cy="676.6" rx="1.7" ry="2.7" transform="rotate(-15 488.5 676.6)" fill="#fff" fill-opacity="0.37"/>
<ellipse cx="506.1" cy="673.9" rx="3.9" ry="6.0" transform="rotate(-41 506.1 673.9)" fill="#fff" fill-opacity="0.23"/>
<ellipse cx="506.2" cy="674.5" rx="1.9" ry="2.9" transform="rotate(-41 506.2 674.5)" fill="#fff" fill-opacity="0.34"/>
<ellipse cx="446.4" cy="678.8" rx="3.4" ry="7.0" transform="rotate(-26 446.4 678.8)" fill="#fff" fill-opacity="0.22"/>
<ellipse cx="446.6" cy="679.0" rx="1.6" ry="3.5" transform="rotate(-26 446.6 679.0)" fill="#fff" fill-opacity="0.32"/>
<ellipse cx="435.2" cy="682.6" rx="3.6" ry="7.0" transform="rotate(-15 435.2 682.6)" fill="#fff" fill-opacity="0.22"/>
<ellipse cx="435.4" cy="682.6" rx="1.8" ry="3.5" transform="rotate(-15 435.4 682.6)" fill="#fff" fill-opacity="0.33"/>
<ellipse cx="512.1" cy="683.6" rx="4.1" ry="5.7" transform="rotate(-18 512.1 683.6)" fill="#fff" fill-opacity="0.18"/>
<ellipse cx="512.4" cy="683.8" rx="2.1" ry="2.7" transform="rotate(-18 512.4 683.8)" fill="#fff" fill-opacity="0.26"/>
<ellipse cx="440.5" cy="688.8" rx="3.4" ry="5.8" transform="rotate(-42 440.5 688.8)" fill="#fff" fill-opacity="0.13"/>
<ellipse cx="440.9" cy="689.2" rx="1.6" ry="2.8" transform="rotate(-42 440.9 689.2)" fill="#fff" fill-opacity="0.19"/>
<ellipse cx="454.0" cy="688.9" rx="3.8" ry="6.5" transform="rotate(-16 454.0 688.9)" fill="#fff" fill-opacity="0.12"/>
<ellipse cx="454.1" cy="689.2" rx="1.8" ry="3.2" transform="rotate(-16 454.1 689.2)" fill="#fff" fill-opacity="0.18"/>
<ellipse cx="497.8" cy="689.9" rx="3.8" ry="5.6" transform="rotate(-26 497.8 689.9)" fill="#fff" fill-opacity="0.30"/>
<ellipse cx="497.8" cy="690.0" rx="1.8" ry="2.6" transform="rotate(-26 497.8 690.0)" fill="#fff" fill-opacity="0.44"/>
<ellipse cx="465.2" cy="694.5" rx="3.6" ry="7.4" transform="rotate(-25 465.2 694.5)" fill="#fff" fill-opacity="0.22"/>
<ellipse cx="465.3" cy="694.9" rx="1.7" ry="3.7" transform="rotate(-25 465.3 694.9)" fill="#fff" fill-opacity="0.32"/>
<ellipse cx="475.6" cy="694.7" rx="4.0" ry="7.2" transform="rotate(-19 475.6 694.7)" fill="#fff" fill-opacity="0.25"/>
<ellipse cx="476.0" cy="695.3" rx="2.0" ry="3.6" transform="rotate(-19 476.0 695.3)" fill="#fff" fill-opacity="0.37"/>
<ellipse cx="491.0" cy="693.6" rx="3.6" ry="5.2" transform="rotate(-47 491.0 693.6)" fill="#fff" fill-opacity="0.24"/>
<ellipse cx="491.1" cy="694.2" rx="1.7" ry="2.4" transform="rotate(-47 491.1 694.2)" fill="#fff" fill-opacity="0.35"/>
<ellipse cx="510.4" cy="698.4" rx="3.5" ry="5.2" transform="rotate(-14 510.4 698.4)" fill="#fff" fill-opacity="0.16"/>
<ellipse cx="510.3" cy="698.4" rx="1.7" ry="2.4" transform="rotate(-14 510.3 698.4)" fill="#fff" fill-opacity="0.23"/>
<ellipse cx="451.9" cy="701.8" rx="3.9" ry="6.2" transform="rotate(-38 451.9 701.8)" fill="#fff" fill-opacity="0.17"/>
<ellipse cx="452.2" cy="702.3" rx="1.9" ry="3.0" transform="rotate(-38 452.2 702.3)" fill="#fff" fill-opacity="0.25"/>
<ellipse cx="496.2" cy="707.6" rx="4.2" ry="5.8" transform="rotate(-25 496.2 707.6)" fill="#fff" fill-opacity="0.13"/>
<ellipse cx="496.3" cy="708.0" rx="2.1" ry="2.8" transform="rotate(-25 496.3 708.0)" fill="#fff" fill-opacity="0.18"/>
<ellipse cx="509.8" cy="706.9" rx="3.6" ry="5.3" transform="rotate(-30 509.8 706.9)" fill="#fff" fill-opacity="0.14"/>
<ellipse cx="509.9" cy="707.2" rx="1.7" ry="2.5" transform="rotate(-30 509.9 707.2)" fill="#fff" fill-opacity="0.21"/>
<ellipse cx="426.9" cy="710.8" rx="4.0" ry="5.4" transform="rotate(-21 426.9 710.8)" fill="#fff" fill-opacity="0.15"/>
<ellipse cx="427.3" cy="711.0" rx="2.0" ry="2.5" transform="rotate(-21 427.3 711.0)" fill="#fff" fill-opacity="0.22"/>
<ellipse cx="470.5" cy="713.2" rx="4.0" ry="6.7" transform="rotate(-47 470.5 713.2)" fill="#fff" fill-opacity="0.25"/>
<ellipse cx="470.9" cy="713.6" rx="2.0" ry="3.3" transform="rotate(-47 470.9 713.6)" fill="#fff" fill-opacity="0.36"/>
<ellipse cx="452.5" cy="715.8" rx="3.8" ry="5.8" transform="rotate(-41 452.5 715.8)" fill="#fff" fill-opacity="0.13"/>
<ellipse cx="452.7" cy="715.9" rx="1.9" ry="2.8" transform="rotate(-41 452.7 715.9)" fill="#fff" fill-opacity="0.19"/>
<ellipse cx="507.4" cy="715.3" rx="4.0" ry="6.8" transform="rotate(-27 507.4 715.3)" fill="#fff" fill-opacity="0.15"/>
<ellipse cx="507.4" cy="715.8" rx="2.0" ry="3.4" transform="rotate(-27 507.4 715.8)" fill="#fff" fill-opacity="0.22"/>
<ellipse cx="449.2" cy="722.7" rx="4.2" ry="5.7" transform="rotate(-44 449.2 722.7)" fill="#fff" fill-opacity="0.23"/>
<ellipse cx="449.3" cy="722.9" rx="2.1" ry="2.7" transform="rotate(-44 449.3 722.9)" fill="#fff" fill-opacity="0.33"/>
<ellipse cx="490.8" cy="720.9" rx="3.5" ry="6.9" transform="rotate(-39 490.8 720.9)" fill="#fff" fill-opacity="0.25"/>
<ellipse cx="491.0" cy="721.4" rx="1.6" ry="3.4" transform="rotate(-39 491.0 721.4)" fill="#fff" fill-opacity="0.36"/>
<ellipse cx="492.6" cy="726.0" rx="3.6" ry="6.3" transform="rotate(-18 492.6 726.0)" fill="#fff" fill-opacity="0.14"/>
<ellipse cx="493.0" cy="726.3" rx="1.7" ry="3.0" transform="rotate(-18 493.0 726.3)" fill="#fff" fill-opacity="0.20"/>
<ellipse cx="458.5" cy="729.9" rx="3.5" ry="7.0" transform="rotate(-31 458.5 729.9)" fill="#fff" fill-opacity="0.17"/>
<ellipse cx="458.9" cy="730.2" rx="1.7" ry="3.5" transform="rotate(-31 458.9 730.2)" fill="#fff" fill-opacity="0.25"/>
<ellipse cx="473.0" cy="730.0" rx="3.9" ry="5.9" transform="rotate(-42 473.0 730.0)" fill="#fff" fill-opacity="0.15"/>
<ellipse cx="473.1" cy="730.1" rx="1.9" ry="2.8" transform="rotate(-42 473.1 730.1)" fill="#fff" fill-opacity="0.22"/>
<ellipse cx="488.4" cy="731.5" rx="3.5" ry="6.6" transform="rotate(-16 488.4 731.5)" fill="#fff" fill-opacity="0.19"/>
<ellipse cx="488.6" cy="731.6" rx="1.7" ry="3.3" transform="rotate(-16 488.6 731.6)" fill="#fff" fill-opacity="0.27"/>
<ellipse cx="506.8" cy="731.5" rx="3.9" ry="5.5" transform="rotate(-17 506.8 731.5)" fill="#fff" fill-opacity="0.12"/>
<ellipse cx="506.9" cy="731.9" rx="1.9" ry="2.6" transform="rotate(-17 506.9 731.9)" fill="#fff" fill-opacity="0.17"/>
<ellipse cx="486.5" cy="735.9" rx="3.5" ry="6.1" transform="rotate(-47 486.5 735.9)" fill="#fff" fill-opacity="0.25"/>
<ellipse cx="486.5" cy="736.4" rx="1.7" ry="2.9" transform="rotate(-47 486.5 736.4)" fill="#fff" fill-opacity="0.36"/>
<ellipse cx="446.5" cy="741.2" rx="3.6" ry="5.4" transform="rotate(-46 446.5 741.2)" fill="#fff" fill-opacity="0.25"/>
<ellipse cx="446.7" cy="741.3" rx="1.7" ry="2.5" transform="rotate(-46 446.7 741.3)" fill="#fff" fill-opacity="0.36"/>
<ellipse cx="482.9" cy="744.8" rx="3.5" ry="6.0" transform="rotate(-35 482.9 744.8)" fill="#fff" fill-opacity="0.14"/>
<ellipse cx="483.2" cy="744.8" rx="1.7" ry="2.9" transform="rotate(-35 483.2 744.8)" fill="#fff" fill-opacity="0.20"/>
<ellipse cx="434.8" cy="752.4" rx="4.4" ry="6.3" transform="rotate(-17 434.8 752.4)" fill="#fff" fill-opacity="0.24"/>
<ellipse cx="434.9" cy="752.8" rx="2.2" ry="3.1" transform="rotate(-17 434.9 752.8)" fill="#fff" fill-opacity="0.35"/>
<ellipse cx="511.5" cy="757.0" rx="4.4" ry="5.6" transform="rotate(-45 511.5 757.0)" fill="#fff" fill-opacity="0.24"/>
<ellipse cx="511.9" cy="757.0" rx="2.2" ry="2.7" transform="rotate(-45 511.9 757.0)" fill="#fff" fill-opacity="0.34"/>
<ellipse cx="457.3" cy="756.5" rx="3.5" ry="7.5" transform="rotate(-33 457.3 756.5)" fill="#fff" fill-opacity="0.15"/>
<ellipse cx="457.3" cy="756.9" rx="1.7" ry="3.8" transform="rotate(-33 457.3 756.9)" fill="#fff" fill-opacity="0.22"/>
<ellipse cx="499.4" cy="760.2" rx="4.2" ry="6.2" transform="rotate(-43 499.4 760.2)" fill="#fff" fill-opacity="0.24"/>
<ellipse cx="499.5" cy="760.5" rx="2.1" ry="3.0" transform="rotate(-43 499.5 760.5)" fill="#fff" fill-opacity="0.35"/>
<ellipse cx="491.3" cy="762.8" rx="4.2" ry="6.0" transform="rotate(-16 491.3 762.8)" fill="#fff" fill-opacity="0.22"/>
<ellipse cx="491.4" cy="763.2" rx="2.1" ry="2.9" transform="rotate(-16 491.4 763.2)" fill="#fff" fill-opacity="0.32"/>
<ellipse cx="436.4" cy="765.7" rx="3.6" ry="5.5" transform="rotate(-36 436.4 765.7)" fill="#fff" fill-opacity="0.18"/>
<ellipse cx="436.4" cy="766.1" rx="1.8" ry="2.6" transform="rotate(-36 436.4 766.1)" fill="#fff" fill-opacity="0.26"/>
<ellipse cx="484.7" cy="767.9" rx="4.2" ry="7.3" transform="rotate(-41 484.7 767.9)" fill="#fff" fill-opacity="0.27"/>
<ellipse cx="484.6" cy="768.0" rx="2.1" ry="3.7" transform="rotate(-41 484.6 768.0)" fill="#fff" fill-opacity="0.39"/>
<ellipse cx="449.5" cy="769.3" rx="4.2" ry="6.1" transform="rotate(-26 449.5 769.3)" fill="#fff" fill-opacity="0.25"/>
<ellipse cx="449.8" cy="769.5" rx="2.1" ry="2.9" transform="rotate(-26 449.8 769.5)" fill="#fff" fill-opacity="0.37"/>
<ellipse cx="494.8" cy="771.5" rx="4.3" ry="7.2" transform="rotate(-20 494.8 771.5)" fill="#fff" fill-opacity="0.25"/>
<ellipse cx="495.1" cy="771.5" rx="2.2" ry="3.6" transform="rotate(-20 495.1 771.5)" fill="#fff" fill-opacity="0.37"/>
<ellipse cx="441.3" cy="773.8" rx="3.9" ry="7.2" transform="rotate(-48 441.3 773.8)" fill="#fff" fill-opacity="0.23"/>
<ellipse cx="441.5" cy="774.1" rx="2.0" ry="3.6" transform="rotate(-48 441.5 774.1)" fill="#fff" fill-opacity="0.33"/>
<ellipse cx="477.5" cy="773.7" rx="3.6" ry="6.0" transform="rotate(-42 477.5 773.7)" fill="#fff" fill-opacity="0.25"/>
<ellipse cx="477.9" cy="774.1" rx="1.8" ry="2.9" transform="rotate(-42 477.9 774.1)" fill="#fff" fill-opacity="0.36"/>
<ellipse cx="512.4" cy="777.8" rx="3.6" ry="6.9" transform="rotate(-48 512.4 777.8)" fill="#fff" fill-opacity="0.26"/>
<ellipse cx="512.6" cy="778.2" rx="1.7" ry="3.4" transform="rotate(-48 512.6 778.2)" fill="#fff" fill-opacity="0.38"/>
<ellipse cx="448.3" cy="780.7" rx="3.9" ry="7.3" transform="rotate(-27 448.3 780.7)" fill="#fff" fill-opacity="0.28"/>
<ellipse cx="448.3" cy="780.8" rx="1.9" ry="3.6" transform="rotate(-27 448.3 780.8)" fill="#fff" fill-opacity="0.40"/>
<ellipse cx="459.5" cy="781.0" rx="4.2" ry="6.6" transform="rotate(-46 459.5 781.0)" fill="#fff" fill-opacity="0.26"/>
<ellipse cx="459.7" cy="781.3" rx="2.1" ry="3.2" transform="rotate(-46 459.7 781.3)" fill="#fff" fill-opacity="0.38"/>
<ellipse cx="473.5" cy="781.7" rx="3.8" ry="6.0" transform="rotate(-43 473.5 781.7)" fill="#fff" fill-opacity="0.26"/>
<ellipse cx="473.5" cy="781.8" rx="1.8" ry="2.9" transform="rotate(-43 473.5 781.8)" fill="#fff" fill-opacity="0.39"/>
<ellipse cx="495.4" cy="778.1" rx="4.1" ry="6.2" transform="rotate(-29 495.4 778.1)" fill="#fff" fill-opacity="0.38"/>
<ellipse cx="495.7" cy="778.6" rx="2.1" ry="3.0" transform="rotate(-29 495.7 778.6)" fill="#fff" fill-opacity="0.55"/>
<ellipse cx="487.2" cy="782.3" rx="4.1" ry="5.7" transform="rotate(-37 487.2 782.3)" fill="#fff" fill-opacity="0.25"/>
<ellipse cx="487.2" cy="782.8" rx="2.1" ry="2.7" transform="rotate(-37 487.2 782.8)" fill="#fff" fill-opacity="0.37"/>
<ellipse cx="438.8" cy="784.7" rx="4.3" ry="6.8" transform="rotate(-36 438.8 784.7)" fill="#fff" fill-opacity="0.28"/>
<ellipse cx="439.1" cy="785.1" rx="2.2" ry="3.4" transform="rotate(-36 439.1 785.1)" fill="#fff" fill-opacity="0.41"/>
<ellipse cx="475.5" cy="790.6" rx="4.1" ry="6.4" transform="rotate(-30 475.5 790.6)" fill="#fff" fill-opacity="0.24"/>
<ellipse cx="475.9" cy="790.5" rx="2.0" ry="3.1" transform="rotate(-30 475.9 790.5)" fill="#fff" fill-opacity="0.35"/>
<ellipse cx="514.1" cy="792.4" rx="4.0" ry="7.3" transform="rotate(-43 514.1 792.4)" fill="#fff" fill-opacity="0.21"/>
<ellipse cx="514.2" cy="792.4" rx="2.0" ry="3.7" transform="rotate(-43 514.2 792.4)" fill="#fff" fill-opacity="0.30"/>
<ellipse cx="469.4" cy="795.6" rx="4.3" ry="6.4" transform="rotate(-49 469.4 795.6)" fill="#fff" fill-opacity="0.27"/>
<ellipse cx="469.4" cy="795.6" rx="2.2" ry="3.1" transform="rotate(-49 469.4 795.6)" fill="#fff" fill-opacity="0.40"/>
<ellipse cx="503.3" cy="797.5" rx="4.2" ry="6.7" transform="rotate(-45 503.3 797.5)" fill="#fff" fill-opacity="0.27"/>
<ellipse cx="503.6" cy="797.7" rx="2.1" ry="3.3" transform="rotate(-45 503.6 797.7)" fill="#fff" fill-opacity="0.40"/>
<ellipse cx="461.3" cy="798.7" rx="3.5" ry="6.3" transform="rotate(-32 461.3 798.7)" fill="#fff" fill-opacity="0.16"/>
<ellipse cx="461.7" cy="799.1" rx="1.7" ry="3.0" transform="rotate(-32 461.7 799.1)" fill="#fff" fill-opacity="0.23"/>
<ellipse cx="498.8" cy="803.4" rx="3.6" ry="6.4" transform="rotate(-41 498.8 803.4)" fill="#fff" fill-opacity="0.24"/>
<ellipse cx="499.0" cy="803.4" rx="1.7" ry="3.1" transform="rotate(-41 499.0 803.4)" fill="#fff" fill-opacity="0.35"/>
<ellipse cx="427.1" cy="805.3" rx="4.1" ry="6.8" transform="rotate(-23 427.1 805.3)" fill="#fff" fill-opacity="0.21"/>
<ellipse cx="427.4" cy="805.3" rx="2.1" ry="3.4" transform="rotate(-23 427.4 805.3)" fill="#fff" fill-opacity="0.31"/>
<ellipse cx="491.3" cy="809.7" rx="3.5" ry="5.4" transform="rotate(-34 491.3 809.7)" fill="#fff" fill-opacity="0.12"/>
<ellipse cx="491.3" cy="809.9" rx="1.7" ry="2.5" transform="rotate(-34 491.3 809.9)" fill="#fff" fill-opacity="0.17"/>
<ellipse cx="448.9" cy="810.2" rx="4.2" ry="6.0" transform="rotate(-14 448.9 810.2)" fill="#fff" fill-opacity="0.19"/>
<ellipse cx="449.2" cy="810.6" rx="2.1" ry="2.9" transform="rotate(-14 449.2 810.6)" fill="#fff" fill-opacity="0.28"/>
<ellipse cx="463.6" cy="812.3" rx="3.6" ry="5.6" transform="rotate(-39 463.6 812.3)" fill="#fff" fill-opacity="0.18"/>
<ellipse cx="464.0" cy="812.7" rx="1.7" ry="2.6" transform="rotate(-39 464.0 812.7)" fill="#fff" fill-opacity="0.26"/>
<ellipse cx="445.6" cy="818.5" rx="4.4" ry="6.2" transform="rotate(-33 445.6 818.5)" fill="#fff" fill-opacity="0.20"/>
<ellipse cx="445.8" cy="818.5" rx="2.2" ry="3.0" transform="rotate(-33 445.8 818.5)" fill="#fff" fill-opacity="0.29"/>
<ellipse cx="478.9" cy="822.5" rx="3.5" ry="5.6" transform="rotate(-45 478.9 822.5)" fill="#fff" fill-opacity="0.14"/>
<ellipse cx="479.0" cy="822.5" rx="1.7" ry="2.6" transform="rotate(-45 479.0 822.5)" fill="#fff" fill-opacity="0.21"/>
<ellipse cx="465.6" cy="825.1" rx="3.8" ry="6.8" transform="rotate(-37 465.6 825.1)" fill="#fff" fill-opacity="0.17"/>
<ellipse cx="466.0" cy="825.2" rx="1.9" ry="3.4" transform="rotate(-37 466.0 825.2)" fill="#fff" fill-opacity="0.25"/>
<ellipse cx="431.5" cy="827.9" rx="4.0" ry="6.0" transform="rotate(-24 431.5 827.9)" fill="#fff" fill-opacity="0.11"/>
<ellipse cx="431.5" cy="828.2" rx="2.0" ry="2.9" transform="rotate(-24 431.5 828.2)" fill="#fff" fill-opacity="0.16"/>
<ellipse cx="488.7" cy="827.8" rx="4.3" ry="6.9" transform="rotate(-26 488.7 827.8)" fill="#fff" fill-opacity="0.16"/>
<ellipse cx="489.0" cy="828.1" rx="2.2" ry="3.4" transform="rotate(-26 489.0 828.1)" fill="#fff" fill-opacity="0.24"/>
<ellipse cx="497.5" cy="830.8" rx="4.3" ry="6.0" transform="rotate(-26 497.5 830.8)" fill="#fff" fill-opacity="0.25"/>
<ellipse cx="497.7" cy="831.1" rx="2.2" ry="2.9" transform="rotate(-26 497.7 831.1)" fill="#fff" fill-opacity="0.36"/>
<ellipse cx="449.4" cy="834.0" rx="3.7" ry="5.3" transform="rotate(-21 449.4 834.0)" fill="#fff" fill-opacity="0.13"/>
<ellipse cx="449.6" cy="834.3" rx="1.8" ry="2.4" transform="rotate(-21 449.6 834.3)" fill="#fff" fill-opacity="0.19"/>
<ellipse cx="508.4" cy="834.8" rx="4.0" ry="7.3" transform="rotate(-31 508.4 834.8)" fill="#fff" fill-opacity="0.27"/>
<ellipse cx="508.6" cy="835.2" rx="2.0" ry="3.7" transform="rotate(-31 508.6 835.2)" fill="#fff" fill-opacity="0.39"/>
<ellipse cx="480.2" cy="841.3" rx="3.8" ry="6.1" transform="rotate(-41 480.2 841.3)" fill="#fff" fill-opacity="0.22"/>
<ellipse cx="480.5" cy="841.3" rx="1.9" ry="2.9" transform="rotate(-41 480.5 841.3)" fill="#fff" fill-opacity="0.32"/>
<ellipse cx="442.3" cy="841.2" rx="4.1" ry="5.6" transform="rotate(-20 442.3 841.2)" fill="#fff" fill-opacity="0.16"/>
<ellipse cx="442.8" cy="841.7" rx="2.0" ry="2.6" transform="rotate(-20 442.8 841.7)" fill="#fff" fill-opacity="0.23"/>
<ellipse cx="507.0" cy="846.3" rx="4.1" ry="5.8" transform="rotate(-48 507.0 846.3)" fill="#fff" fill-opacity="0.14"/>
<ellipse cx="507.1" cy="846.4" rx="2.1" ry="2.8" transform="rotate(-48 507.1 846.4)" fill="#fff" fill-opacity="0.20"/>
<ellipse cx="462.8" cy="848.7" rx="3.8" ry="7.3" transform="rotate(-47 462.8 848.7)" fill="#fff" fill-opacity="0.21"/>
<ellipse cx="463.1" cy="848.8" rx="1.9" ry="3.7" transform="rotate(-47 463.1 848.8)" fill="#fff" fill-opacity="0.30"/>
<ellipse cx="439.6" cy="850.8" rx="4.0" ry="6.9" transform="rotate(-19 439.6 850.8)" fill="#fff" fill-opacity="0.18"/>
<ellipse cx="439.5" cy="851.3" rx="2.0" ry="3.4" transform="rotate(-19 439.5 851.3)" fill="#fff" fill-opacity="0.26"/>
<ellipse cx="192.8" cy="495.0" rx="3.9" ry="5.4" transform="rotate(-24 192.8 495.0)" fill="#fff" fill-opacity="0.05"/>
<ellipse cx="213.8" cy="711.2" rx="4.5" ry="6.4" transform="rotate(-25 213.8 711.2)" fill="#fff" fill-opacity="0.13"/>
<ellipse cx="307.3" cy="630.9" rx="3.3" ry="8.9" transform="rotate(-42 307.3 630.9)" fill="#fff" fill-opacity="0.13"/>
<ellipse cx="407.5" cy="551.4" rx="3.2" ry="6.4" transform="rotate(-45 407.5 551.4)" fill="#fff" fill-opacity="0.11"/>
<ellipse cx="168.7" cy="682.1" rx="3.1" ry="6.8" transform="rotate(-25 168.7 682.1)" fill="#fff" fill-opacity="0.11"/>
<ellipse cx="359.4" cy="653.2" rx="3.9" ry="6.3" transform="rotate(-17 359.4 653.2)" fill="#fff" fill-opacity="0.08"/>
<ellipse cx="495.1" cy="803.3" rx="3.8" ry="5.6" transform="rotate(-15 495.1 803.3)" fill="#fff" fill-opacity="0.06"/>
<ellipse cx="288.4" cy="741.2" rx="4.2" ry="8.1" transform="rotate(-52 288.4 741.2)" fill="#fff" fill-opacity="0.09"/>
<ellipse cx="149.1" cy="780.7" rx="4.0" ry="7.3" transform="rotate(-35 149.1 780.7)" fill="#fff" fill-opacity="0.11"/>
<ellipse cx="297.8" cy="840.3" rx="4.4" ry="7.5" transform="rotate(-14 297.8 840.3)" fill="#fff" fill-opacity="0.07"/>
<ellipse cx="286.0" cy="586.0" rx="4.2" ry="8.2" transform="rotate(-16 286.0 586.0)" fill="#fff" fill-opacity="0.11"/>
<ellipse cx="512.6" cy="740.2" rx="4.1" ry="6.0" transform="rotate(-39 512.6 740.2)" fill="#fff" fill-opacity="0.09"/>
<ellipse cx="205.5" cy="802.6" rx="3.4" ry="8.7" transform="rotate(-32 205.5 802.6)" fill="#fff" fill-opacity="0.05"/>
<ellipse cx="490.2" cy="765.6" rx="4.1" ry="7.3" transform="rotate(-46 490.2 765.6)" fill="#fff" fill-opacity="0.12"/>
<ellipse cx="363.4" cy="644.2" rx="3.1" ry="8.1" transform="rotate(-15 363.4 644.2)" fill="#fff" fill-opacity="0.05"/>
<ellipse cx="249.1" cy="528.8" rx="3.7" ry="7.9" transform="rotate(-17 249.1 528.8)" fill="#fff" fill-opacity="0.06"/>
<ellipse cx="416.5" cy="725.7" rx="3.7" ry="7.9" transform="rotate(-48 416.5 725.7)" fill="#fff" fill-opacity="0.06"/>
<ellipse cx="388.4" cy="589.3" rx="4.4" ry="8.8" transform="rotate(-37 388.4 589.3)" fill="#fff" fill-opacity="0.13"/>
<ellipse cx="304.5" cy="697.4" rx="4.1" ry="6.8" transform="rotate(-20 304.5 697.4)" fill="#fff" fill-opacity="0.12"/>
<ellipse cx="295.1" cy="836.6" rx="3.2" ry="8.0" transform="rotate(-33 295.1 836.6)" fill="#fff" fill-opacity="0.05"/>
<ellipse cx="397.8" cy="506.7" rx="3.8" ry="8.0" transform="rotate(-12 397.8 506.7)" fill="#fff" fill-opacity="0.05"/>
<ellipse cx="382.0" cy="625.6" rx="4.2" ry="5.1" transform="rotate(-42 382.0 625.6)" fill="#fff" fill-opacity="0.08"/>
<ellipse cx="179.1" cy="800.3" rx="3.1" ry="6.9" transform="rotate(-16 179.1 800.3)" fill="#fff" fill-opacity="0.08"/>
<ellipse cx="412.2" cy="755.3" rx="4.4" ry="5.7" transform="rotate(-38 412.2 755.3)" fill="#fff" fill-opacity="0.05"/>
<ellipse cx="447.6" cy="531.2" rx="3.8" ry="6.3" transform="rotate(-45 447.6 531.2)" fill="#fff" fill-opacity="0.05"/>
<ellipse cx="490.1" cy="661.4" rx="3.4" ry="8.7" transform="rotate(-21 490.1 661.4)" fill="#fff" fill-opacity="0.06"/>
<ellipse cx="481.5" cy="712.5" rx="4.2" ry="7.5" transform="rotate(-13 481.5 712.5)" fill="#fff" fill-opacity="0.09"/>
<ellipse cx="462.4" cy="650.2" rx="4.4" ry="8.2" transform="rotate(-48 462.4 650.2)" fill="#fff" fill-opacity="0.10"/>
<ellipse cx="421.8" cy="572.4" rx="4.2" ry="8.8" transform="rotate(-33 421.8 572.4)" fill="#fff" fill-opacity="0.12"/>
<ellipse cx="206.2" cy="738.7" rx="3.6" ry="5.7" transform="rotate(-30 206.2 738.7)" fill="#fff" fill-opacity="0.05"/>
<ellipse cx="320.5" cy="668.5" rx="3.6" ry="7.2" transform="rotate(-41 320.5 668.5)" fill="#fff" fill-opacity="0.11"/>
<ellipse cx="364.5" cy="546.7" rx="3.6" ry="8.8" transform="rotate(-17 364.5 546.7)" fill="#fff" fill-opacity="0.13"/>
<ellipse cx="198.8" cy="701.3" rx="3.6" ry="7.2" transform="rotate(-13 198.8 701.3)" fill="#fff" fill-opacity="0.07"/>
<ellipse cx="157.6" cy="562.3" rx="3.4" ry="7.5" transform="rotate(-47 157.6 562.3)" fill="#fff" fill-opacity="0.09"/>
<ellipse cx="496.9" cy="739.2" rx="4.4" ry="7.5" transform="rotate(-38 496.9 739.2)" fill="#fff" fill-opacity="0.09"/>
<ellipse cx="465.3" cy="733.5" rx="3.9" ry="6.2" transform="rotate(-38 465.3 733.5)" fill="#fff" fill-opacity="0.13"/>
<ellipse cx="237.1" cy="845.0" rx="3.0" ry="7.2" transform="rotate(-49 237.1 845.0)" fill="#fff" fill-opacity="0.06"/>
<ellipse cx="334.3" cy="530.5" rx="4.0" ry="7.7" transform="rotate(-19 334.3 530.5)" fill="#fff" fill-opacity="0.12"/>
<ellipse cx="513.1" cy="736.6" rx="3.0" ry="5.2" transform="rotate(-23 513.1 736.6)" fill="#fff" fill-opacity="0.08"/>
<ellipse cx="504.6" cy="602.2" rx="3.0" ry="6.7" transform="rotate(-29 504.6 602.2)" fill="#fff" fill-opacity="0.12"/>
<ellipse cx="364.5" cy="790.4" rx="3.3" ry="5.7" transform="rotate(-51 364.5 790.4)" fill="#fff" fill-opacity="0.11"/>
<ellipse cx="184.5" cy="830.0" rx="4.3" ry="7.1" transform="rotate(-41 184.5 830.0)" fill="#fff" fill-opacity="0.07"/>
<ellipse cx="503.6" cy="636.1" rx="3.1" ry="8.3" transform="rotate(-24 503.6 636.1)" fill="#fff" fill-opacity="0.13"/>
<ellipse cx="187.8" cy="761.6" rx="3.2" ry="6.5" transform="rotate(-41 187.8 761.6)" fill="#fff" fill-opacity="0.10"/>
<ellipse cx="498.9" cy="852.8" rx="3.9" ry="7.6" transform="rotate(-12 498.9 852.8)" fill="#fff" fill-opacity="0.05"/>
<ellipse cx="414.9" cy="689.9" rx="4.4" ry="6.0" transform="rotate(-38 414.9 689.9)" fill="#fff" fill-opacity="0.05"/>
<ellipse cx="205.4" cy="542.0" rx="4.2" ry="5.6" transform="rotate(-28 205.4 542.0)" fill="#fff" fill-opacity="0.09"/>
<ellipse cx="359.0" cy="693.3" rx="3.8" ry="5.1" transform="rotate(-35 359.0 693.3)" fill="#fff" fill-opacity="0.05"/>
<ellipse cx="303.0" cy="574.1" rx="3.4" ry="8.3" transform="rotate(-22 303.0 574.1)" fill="#fff" fill-opacity="0.06"/>
<ellipse cx="181.2" cy="662.7" rx="3.5" ry="8.1" transform="rotate(-36 181.2 662.7)" fill="#fff" fill-opacity="0.06"/>
<ellipse cx="394.2" cy="794.2" rx="3.8" ry="8.7" transform="rotate(-34 394.2 794.2)" fill="#fff" fill-opacity="0.09"/>
<ellipse cx="213.8" cy="512.6" rx="3.5" ry="5.4" transform="rotate(-49 213.8 512.6)" fill="#fff" fill-opacity="0.10"/>
<ellipse cx="303.3" cy="600.5" rx="4.4" ry="6.0" transform="rotate(-32 303.3 600.5)" fill="#fff" fill-opacity="0.05"/>
<ellipse cx="259.7" cy="606.3" rx="4.1" ry="6.7" transform="rotate(-16 259.7 606.3)" fill="#fff" fill-opacity="0.05"/>
<ellipse cx="163.8" cy="532.1" rx="4.0" ry="5.6" transform="rotate(-18 163.8 532.1)" fill="#fff" fill-opacity="0.10"/>
<ellipse cx="168.5" cy="673.5" rx="3.2" ry="8.0" transform="rotate(-39 168.5 673.5)" fill="#fff" fill-opacity="0.10"/>
<ellipse cx="335.4" cy="548.9" rx="3.6" ry="7.6" transform="rotate(-25 335.4 548.9)" fill="#fff" fill-opacity="0.05"/>
<ellipse cx="480.1" cy="488.3" rx="3.6" ry="5.8" transform="rotate(-43 480.1 488.3)" fill="#fff" fill-opacity="0.05"/>
<ellipse cx="400.7" cy="852.7" rx="3.4" ry="7.7" transform="rotate(-39 400.7 852.7)" fill="#fff" fill-opacity="0.06"/>
<ellipse cx="294.9" cy="740.3" rx="3.2" ry="5.3" transform="rotate(-35 294.9 740.3)" fill="#fff" fill-opacity="0.09"/>
<ellipse cx="512.5" cy="825.5" rx="3.8" ry="7.0" transform="rotate(-48 512.5 825.5)" fill="#fff" fill-opacity="0.06"/>
<ellipse cx="394.2" cy="669.4" rx="3.4" ry="8.7" transform="rotate(-20 394.2 669.4)" fill="#fff" fill-opacity="0.11"/>
<ellipse cx="321.7" cy="539.0" rx="3.2" ry="7.7" transform="rotate(-33 321.7 539.0)" fill="#fff" fill-opacity="0.10"/>
<ellipse cx="360.3" cy="846.3" rx="4.1" ry="8.2" transform="rotate(-50 360.3 846.3)" fill="#fff" fill-opacity="0.05"/>
<ellipse cx="265.8" cy="506.8" rx="4.1" ry="6.4" transform="rotate(-29 265.8 506.8)" fill="#fff" fill-opacity="0.10"/>
<ellipse cx="282.3" cy="749.1" rx="4.5" ry="6.8" transform="rotate(-41 282.3 749.1)" fill="#fff" fill-opacity="0.04"/>
<ellipse cx="180.8" cy="754.2" rx="4.0" ry="5.6" transform="rotate(-17 180.8 754.2)" fill="#fff" fill-opacity="0.12"/>
<ellipse cx="411.5" cy="529.4" rx="4.0" ry="5.0" transform="rotate(-37 411.5 529.4)" fill="#fff" fill-opacity="0.04"/>
<ellipse cx="277.5" cy="808.9" rx="3.5" ry="8.6" transform="rotate(-12 277.5 808.9)" fill="#fff" fill-opacity="0.11"/>
<ellipse cx="466.2" cy="703.5" rx="4.0" ry="8.8" transform="rotate(-13 466.2 703.5)" fill="#fff" fill-opacity="0.09"/>
<ellipse cx="219.5" cy="677.9" rx="3.5" ry="6.5" transform="rotate(-33 219.5 677.9)" fill="#fff" fill-opacity="0.09"/>
<ellipse cx="364.0" cy="568.9" rx="3.8" ry="7.0" transform="rotate(-41 364.0 568.9)" fill="#fff" fill-opacity="0.08"/>
<ellipse cx="392.1" cy="555.2" rx="3.4" ry="8.1" transform="rotate(-31 392.1 555.2)" fill="#fff" fill-opacity="0.10"/>
<ellipse cx="435.2" cy="677.4" rx="4.4" ry="7.0" transform="rotate(-42 435.2 677.4)" fill="#fff" fill-opacity="0.07"/>
<ellipse cx="254.2" cy="634.9" rx="4.2" ry="6.9" transform="rotate(-24 254.2 634.9)" fill="#fff" fill-opacity="0.11"/>
<ellipse cx="225.6" cy="653.3" rx="3.5" ry="6.4" transform="rotate(-38 225.6 653.3)" fill="#fff" fill-opacity="0.11"/>
<ellipse cx="417.6" cy="563.3" rx="4.2" ry="7.6" transform="rotate(-43 417.6 563.3)" fill="#fff" fill-opacity="0.10"/>
<ellipse cx="381.4" cy="742.2" rx="3.1" ry="6.4" transform="rotate(-41 381.4 742.2)" fill="#fff" fill-opacity="0.04"/>
<ellipse cx="502.0" cy="680.1" rx="4.4" ry="8.2" transform="rotate(-25 502.0 680.1)" fill="#fff" fill-opacity="0.06"/>
<ellipse cx="271.3" cy="527.0" rx="4.1" ry="7.0" transform="rotate(-20 271.3 527.0)" fill="#fff" fill-opacity="0.07"/>
<ellipse cx="246.6" cy="666.3" rx="4.3" ry="8.4" transform="rotate(-24 246.6 666.3)" fill="#fff" fill-opacity="0.12"/>
<ellipse cx="309.1" cy="642.0" rx="4.5" ry="5.7" transform="rotate(-39 309.1 642.0)" fill="#fff" fill-opacity="0.05"/>
<ellipse cx="250.7" cy="826.3" rx="3.5" ry="8.4" transform="rotate(-18 250.7 826.3)" fill="#fff" fill-opacity="0.12"/>
<ellipse cx="304.6" cy="557.8" rx="3.6" ry="5.5" transform="rotate(-21 304.6 557.8)" fill="#fff" fill-opacity="0.12"/>
<ellipse cx="309.2" cy="633.3" rx="3.4" ry="5.1" transform="rotate(-28 309.2 633.3)" fill="#fff" fill-opacity="0.08"/>
<ellipse cx="287.0" cy="491.1" rx="4.1" ry="6.3" transform="rotate(-37 287.0 491.1)" fill="#fff" fill-opacity="0.10"/>
<ellipse cx="377.5" cy="556.3" rx="4.0" ry="7.4" transform="rotate(-51 377.5 556.3)" fill="#fff" fill-opacity="0.07"/>
<ellipse cx="220.9" cy="801.8" rx="3.4" ry="7.3" transform="rotate(-16 220.9 801.8)" fill="#fff" fill-opacity="0.09"/>
<ellipse cx="265.8" cy="500.4" rx="4.0" ry="7.4" transform="rotate(-39 265.8 500.4)" fill="#fff" fill-opacity="0.09"/>
<ellipse cx="192.1" cy="565.3" rx="3.6" ry="6.5" transform="rotate(-40 192.1 565.3)" fill="#fff" fill-opacity="0.12"/>
<ellipse cx="189.8" cy="850.0" rx="4.3" ry="6.0" transform="rotate(-42 189.8 850.0)" fill="#fff" fill-opacity="0.09"/>
<ellipse cx="286.2" cy="501.0" rx="4.2" ry="6.1" transform="rotate(-20 286.2 501.0)" fill="#fff" fill-opacity="0.11"/>
<ellipse cx="323.8" cy="850.2" rx="3.6" ry="5.9" transform="rotate(-50 323.8 850.2)" fill="#fff" fill-opacity="0.10"/>
<ellipse cx="434.1" cy="796.9" rx="3.6" ry="8.2" transform="rotate(-30 434.1 796.9)" fill="#fff" fill-opacity="0.05"/>
<ellipse cx="242.9" cy="764.0" rx="4.5" ry="5.4" transform="rotate(-34 242.9 764.0)" fill="#fff" fill-opacity="0.08"/>
<ellipse cx="225.4" cy="487.8" rx="3.1" ry="6.5" transform="rotate(-48 225.4 487.8)" fill="#fff" fill-opacity="0.08"/>
<ellipse cx="334.4" cy="593.5" rx="3.8" ry="8.9" transform="rotate(-24 334.4 593.5)" fill="#fff" fill-opacity="0.06"/>
<ellipse cx="335.4" cy="668.7" rx="4.3" ry="5.8" transform="rotate(-37 335.4 668.7)" fill="#fff" fill-opacity="0.12"/>
<ellipse cx="279.0" cy="610.5" rx="3.8" ry="6.1" transform="rotate(-27 279.0 610.5)" fill="#fff" fill-opacity="0.05"/>
<ellipse cx="499.5" cy="622.9" rx="4.0" ry="7.1" transform="rotate(-47 499.5 622.9)" fill="#fff" fill-opacity="0.07"/>
<ellipse cx="268.2" cy="798.0" rx="3.6" ry="8.8" transform="rotate(-38 268.2 798.0)" fill="#fff" fill-opacity="0.07"/>
<ellipse cx="295.3" cy="546.6" rx="4.0" ry="6.8" transform="rotate(-26 295.3 546.6)" fill="#fff" fill-opacity="0.08"/>
<ellipse cx="232.9" cy="777.7" rx="4.2" ry="6.5" transform="rotate(-34 232.9 777.7)" fill="#fff" fill-opacity="0.11"/>
<ellipse cx="157.6" cy="567.9" rx="4.0" ry="7.7" transform="rotate(-14 157.6 567.9)" fill="#fff" fill-opacity="0.08"/>
<ellipse cx="321.3" cy="559.7" rx="4.0" ry="7.8" transform="rotate(-45 321.3 559.7)" fill="#fff" fill-opacity="0.06"/>
<ellipse cx="384.8" cy="537.1" rx="3.3" ry="7.0" transform="rotate(-27 384.8 537.1)" fill="#fff" fill-opacity="0.07"/>
<ellipse cx="350.2" cy="536.3" rx="3.9" ry="5.5" transform="rotate(-33 350.2 536.3)" fill="#fff" fill-opacity="0.07"/>
<ellipse cx="397.4" cy="688.0" rx="4.2" ry="7.3" transform="rotate(-27 397.4 688.0)" fill="#fff" fill-opacity="0.06"/>
<ellipse cx="310.3" cy="792.5" rx="4.1" ry="6.5" transform="rotate(-29 310.3 792.5)" fill="#fff" fill-opacity="0.08"/>
<ellipse cx="504.9" cy="789.6" rx="3.2" ry="7.4" transform="rotate(-26 504.9 789.6)" fill="#fff" fill-opacity="0.04"/>
<ellipse cx="491.6" cy="844.7" rx="3.4" ry="8.4" transform="rotate(-23 491.6 844.7)" fill="#fff" fill-opacity="0.06"/>
<ellipse cx="452.5" cy="678.6" rx="4.3" ry="6.8" transform="rotate(-51 452.5 678.6)" fill="#fff" fill-opacity="0.11"/>
<ellipse cx="401.0" cy="683.0" rx="3.3" ry="8.6" transform="rotate(-18 401.0 683.0)" fill="#fff" fill-opacity="0.07"/>
<ellipse cx="156.6" cy="610.9" rx="3.1" ry="7.5" transform="rotate(-49 156.6 610.9)" fill="#fff" fill-opacity="0.05"/>
<ellipse cx="205.9" cy="594.7" rx="4.4" ry="8.6" transform="rotate(-41 205.9 594.7)" fill="#fff" fill-opacity="0.12"/>
<ellipse cx="512.2" cy="649.0" rx="3.4" ry="8.7" transform="rotate(-20 512.2 649.0)" fill="#fff" fill-opacity="0.11"/>
<ellipse cx="417.2" cy="570.8" rx="4.4" ry="7.2" transform="rotate(-48 417.2 570.8)" fill="#fff" fill-opacity="0.10"/>
<ellipse cx="465.1" cy="539.8" rx="3.7" ry="8.1" transform="rotate(-24 465.1 539.8)" fill="#fff" fill-opacity="0.08"/>
<ellipse cx="219.6" cy="838.9" rx="4.1" ry="8.3" transform="rotate(-41 219.6 838.9)" fill="#fff" fill-opacity="0.06"/>
<ellipse cx="403.5" cy="632.8" rx="3.3" ry="8.8" transform="rotate(-43 403.5 632.8)" fill="#fff" fill-opacity="0.07"/>
<ellipse cx="335.1" cy="671.5" rx="4.1" ry="8.0" transform="rotate(-51 335.1 671.5)" fill="#fff" fill-opacity="0.12"/>
<ellipse cx="278.7" cy="564.2" rx="4.1" ry="7.6" transform="rotate(-38 278.7 564.2)" fill="#fff" fill-opacity="0.08"/>
<ellipse cx="340.6" cy="543.7" rx="3.7" ry="7.0" transform="rotate(-15 340.6 543.7)" fill="#fff" fill-opacity="0.11"/>
<ellipse cx="220.0" cy="752.9" rx="4.2" ry="5.4" transform="rotate(-38 220.0 752.9)" fill="#fff" fill-opacity="0.06"/>
<ellipse cx="381.5" cy="664.5" rx="3.9" ry="5.9" transform="rotate(-37 381.5 664.5)" fill="#fff" fill-opacity="0.08"/>
<ellipse cx="147.7" cy="780.9" rx="4.2" ry="7.2" transform="rotate(-42 147.7 780.9)" fill="#fff" fill-opacity="0.09"/>
<ellipse cx="378.0" cy="533.2" rx="3.4" ry="8.5" transform="rotate(-21 378.0 533.2)" fill="#fff" fill-opacity="0.11"/>
<ellipse cx="397.2" cy="787.0" rx="4.0" ry="8.8" transform="rotate(-35 397.2 787.0)" fill="#fff" fill-opacity="0.06"/>
<ellipse cx="184.2" cy="638.6" rx="3.2" ry="5.9" transform="rotate(-32 184.2 638.6)" fill="#fff" fill-opacity="0.12"/>
<ellipse cx="290.2" cy="541.8" rx="3.9" ry="5.8" transform="rotate(-45 290.2 541.8)" fill="#fff" fill-opacity="0.08"/>
<ellipse cx="345.4" cy="648.8" rx="4.3" ry="5.1" transform="rotate(-32 345.4 648.8)" fill="#fff" fill-opacity="0.12"/>
<ellipse cx="220.5" cy="501.1" rx="3.9" ry="7.2" transform="rotate(-21 220.5 501.1)" fill="#fff" fill-opacity="0.06"/>
<ellipse cx="435.2" cy="599.8" rx="3.3" ry="7.3" transform="rotate(-23 435.2 599.8)" fill="#fff" fill-opacity="0.10"/>
<ellipse cx="284.1" cy="663.6" rx="4.0" ry="7.8" transform="rotate(-49 284.1 663.6)" fill="#fff" fill-opacity="0.05"/>
<ellipse cx="350.2" cy="756.8" rx="4.3" ry="8.5" transform="rotate(-48 350.2 756.8)" fill="#fff" fill-opacity="0.04"/>
<ellipse cx="238.7" cy="517.9" rx="3.1" ry="7.0" transform="rotate(-42 238.7 517.9)" fill="#fff" fill-opacity="0.06"/>
<ellipse cx="257.7" cy="656.8" rx="4.2" ry="7.9" transform="rotate(-37 257.7 656.8)" fill="#fff" fill-opacity="0.05"/>
<ellipse cx="229.5" cy="490.0" rx="3.2" ry="7.8" transform="rotate(-39 229.5 490.0)" fill="#fff" fill-opacity="0.11"/>
<ellipse cx="514.4" cy="563.9" rx="4.1" ry="6.6" transform="rotate(-51 514.4 563.9)" fill="#fff" fill-opacity="0.12"/>
<ellipse cx="291.8" cy="602.0" rx="4.4" ry="7.0" transform="rotate(-49 291.8 602.0)" fill="#fff" fill-opacity="0.08"/>
<ellipse cx="308.3" cy="769.8" rx="3.7" ry="5.7" transform="rotate(-19 308.3 769.8)" fill="#fff" fill-opacity="0.08"/>
<ellipse cx="475.9" cy="637.0" rx="3.8" ry="6.8" transform="rotate(-26 475.9 637.0)" fill="#fff" fill-opacity="0.09"/>
<ellipse cx="237.4" cy="692.1" rx="3.1" ry="6.5" transform="rotate(-17 237.4 692.1)" fill="#fff" fill-opacity="0.12"/>
<ellipse cx="508.0" cy="491.9" rx="3.9" ry="8.4" transform="rotate(-27 508.0 491.9)" fill="#fff" fill-opacity="0.08"/>
<ellipse cx="195.3" cy="597.5" rx="4.1" ry="5.8" transform="rotate(-23 195.3 597.5)" fill="#fff" fill-opacity="0.10"/>
<ellipse cx="389.3" cy="729.1" rx="3.7" ry="6.3" transform="rotate(-51 389.3 729.1)" fill="#fff" fill-opacity="0.09"/>
<ellipse cx="271.3" cy="534.2" rx="3.4" ry="8.2" transform="rotate(-25 271.3 534.2)" fill="#fff" fill-opacity="0.07"/>
<ellipse cx="348.4" cy="784.4" rx="4.1" ry="5.3" transform="rotate(-47 348.4 784.4)" fill="#fff" fill-opacity="0.12"/>
<ellipse cx="156.3" cy="753.4" rx="3.3" ry="6.6" transform="rotate(-37 156.3 753.4)" fill="#fff" fill-opacity="0.09"/>
<ellipse cx="300.1" cy="532.0" rx="3.5" ry="8.9" transform="rotate(-31 300.1 532.0)" fill="#fff" fill-opacity="0.07"/>
<ellipse cx="307.6" cy="570.9" rx="3.5" ry="7.6" transform="rotate(-13 307.6 570.9)" fill="#fff" fill-opacity="0.11"/>
<ellipse cx="292.1" cy="765.0" rx="3.2" ry="5.2" transform="rotate(-41 292.1 765.0)" fill="#fff" fill-opacity="0.08"/>
<ellipse cx="469.5" cy="561.7" rx="4.1" ry="6.1" transform="rotate(-34 469.5 561.7)" fill="#fff" fill-opacity="0.05"/>
<ellipse cx="338.6" cy="643.5" rx="4.3" ry="6.0" transform="rotate(-14 338.6 643.5)" fill="#fff" fill-opacity="0.09"/>
<ellipse cx="300.6" cy="499.5" rx="4.4" ry="6.2" transform="rotate(-34 300.6 499.5)" fill="#fff" fill-opacity="0.09"/>
<ellipse cx="409.1" cy="510.2" rx="3.2" ry="6.2" transform="rotate(-15 409.1 510.2)" fill="#fff" fill-opacity="0.10"/>
<ellipse cx="154.1" cy="625.2" rx="3.7" ry="5.1" transform="rotate(-47 154.1 625.2)" fill="#fff" fill-opacity="0.05"/>
<ellipse cx="229.1" cy="517.0" rx="3.3" ry="7.1" transform="rotate(-48 229.1 517.0)" fill="#fff" fill-opacity="0.05"/>
<ellipse cx="450.0" cy="640.4" rx="3.4" ry="8.4" transform="rotate(-42 450.0 640.4)" fill="#fff" fill-opacity="0.04"/>
<ellipse cx="420.9" cy="522.9" rx="3.6" ry="7.4" transform="rotate(-14 420.9 522.9)" fill="#fff" fill-opacity="0.12"/>
<ellipse cx="184.1" cy="510.6" rx="3.9" ry="7.9" transform="rotate(-24 184.1 510.6)" fill="#fff" fill-opacity="0.07"/>
<ellipse cx="330.4" cy="555.7" rx="3.4" ry="7.3" transform="rotate(-35 330.4 555.7)" fill="#fff" fill-opacity="0.07"/>
<ellipse cx="248.4" cy="723.4" rx="4.2" ry="7.0" transform="rotate(-49 248.4 723.4)" fill="#fff" fill-opacity="0.06"/>
<ellipse cx="189.4" cy="674.2" rx="4.1" ry="6.5" transform="rotate(-32 189.4 674.2)" fill="#fff" fill-opacity="0.08"/>
<ellipse cx="476.4" cy="587.8" rx="4.3" ry="9.0" transform="rotate(-13 476.4 587.8)" fill="#fff" fill-opacity="0.12"/>
<ellipse cx="241.9" cy="786.7" rx="3.3" ry="9.0" transform="rotate(-28 241.9 786.7)" fill="#fff" fill-opacity="0.10"/>
<ellipse cx="445.8" cy="692.4" rx="4.3" ry="5.7" transform="rotate(-49 445.8 692.4)" fill="#fff" fill-opacity="0.06"/>
<ellipse cx="374.4" cy="558.4" rx="4.1" ry="5.4" transform="rotate(-33 374.4 558.4)" fill="#fff" fill-opacity="0.10"/>
<ellipse cx="185.6" cy="662.0" rx="4.0" ry="5.2" transform="rotate(-26 185.6 662.0)" fill="#fff" fill-opacity="0.06"/>
<ellipse cx="501.3" cy="630.9" rx="3.6" ry="7.8" transform="rotate(-35 501.3 630.9)" fill="#fff" fill-opacity="0.11"/>
<ellipse cx="386.9" cy="635.1" rx="3.8" ry="5.8" transform="rotate(-29 386.9 635.1)" fill="#fff" fill-opacity="0.13"/>
<ellipse cx="503.0" cy="773.1" rx="3.7" ry="8.4" transform="rotate(-12 503.0 773.1)" fill="#fff" fill-opacity="0.06"/>
<ellipse cx="421.1" cy="750.1" rx="4.3" ry="8.5" transform="rotate(-14 421.1 750.1)" fill="#fff" fill-opacity="0.06"/>
<ellipse cx="437.6" cy="661.9" rx="3.6" ry="8.2" transform="rotate(-40 437.6 661.9)" fill="#fff" fill-opacity="0.12"/>
<ellipse cx="458.7" cy="733.4" rx="3.2" ry="7.3" transform="rotate(-45 458.7 733.4)" fill="#fff" fill-opacity="0.06"/>
<ellipse cx="271.2" cy="524.7" rx="4.1" ry="5.9" transform="rotate(-46 271.2 524.7)" fill="#fff" fill-opacity="0.12"/>
<ellipse cx="268.4" cy="799.4" rx="3.4" ry="6.6" transform="rotate(-40 268.4 799.4)" fill="#fff" fill-opacity="0.04"/>
<ellipse cx="307.7" cy="626.8" rx="4.3" ry="6.5" transform="rotate(-51 307.7 626.8)" fill="#fff" fill-opacity="0.04"/>
<ellipse cx="501.4" cy="571.1" rx="3.0" ry="5.4" transform="rotate(-42 501.4 571.1)" fill="#fff" fill-opacity="0.10"/>
<ellipse cx="361.8" cy="672.5" rx="3.4" ry="8.9" transform="rotate(-42 361.8 672.5)" fill="#fff" fill-opacity="0.07"/>
<ellipse cx="512.1" cy="813.3" rx="4.3" ry="5.1" transform="rotate(-47 512.1 813.3)" fill="#fff" fill-opacity="0.10"/>
<ellipse cx="445.7" cy="742.9" rx="4.2" ry="5.6" transform="rotate(-30 445.7 742.9)" fill="#fff" fill-opacity="0.09"/>
<ellipse cx="245.1" cy="633.9" rx="4.1" ry="7.3" transform="rotate(-44 245.1 633.9)" fill="#fff" fill-opacity="0.11"/>
<ellipse cx="378.8" cy="707.5" rx="4.2" ry="7.3" transform="rotate(-15 378.8 707.5)" fill="#fff" fill-opacity="0.07"/>
<ellipse cx="489.4" cy="623.6" rx="3.5" ry="7.8" transform="rotate(-48 489.4 623.6)" fill="#fff" fill-opacity="0.12"/>
<ellipse cx="385.3" cy="730.8" rx="4.2" ry="6.8" transform="rotate(-15 385.3 730.8)" fill="#fff" fill-opacity="0.08"/>
<ellipse cx="427.3" cy="603.9" rx="3.9" ry="8.2" transform="rotate(-48 427.3 603.9)" fill="#fff" fill-opacity="0.06"/>
<ellipse cx="399.3" cy="815.5" rx="3.2" ry="7.0" transform="rotate(-47 399.3 815.5)" fill="#fff" fill-opacity="0.07"/>
<ellipse cx="497.3" cy="853.8" rx="4.2" ry="7.5" transform="rotate(-34 497.3 853.8)" fill="#fff" fill-opacity="0.06"/>
<ellipse cx="505.6" cy="551.2" rx="3.7" ry="5.1" transform="rotate(-49 505.6 551.2)" fill="#fff" fill-opacity="0.08"/>
<ellipse cx="299.0" cy="838.2" rx="4.3" ry="8.1" transform="rotate(-35 299.0 838.2)" fill="#fff" fill-opacity="0.09"/>
<ellipse cx="234.7" cy="599.2" rx="3.6" ry="7.6" transform="rotate(-32 234.7 599.2)" fill="#fff" fill-opacity="0.09"/>
<ellipse cx="266.2" cy="710.3" rx="3.3" ry="6.3" transform="rotate(-12 266.2 710.3)" fill="#fff" fill-opacity="0.04"/>
<ellipse cx="181.6" cy="507.4" rx="4.3" ry="7.8" transform="rotate(-35 181.6 507.4)" fill="#fff" fill-opacity="0.13"/>
<ellipse cx="455.8" cy="702.6" rx="3.0" ry="6.5" transform="rotate(-29 455.8 702.6)" fill="#fff" fill-opacity="0.06"/>
<ellipse cx="376.0" cy="511.1" rx="3.6" ry="7.0" transform="rotate(-30 376.0 511.1)" fill="#fff" fill-opacity="0.08"/>
<ellipse cx="184.7" cy="756.2" rx="3.9" ry="5.5" transform="rotate(-20 184.7 756.2)" fill="#fff" fill-opacity="0.09"/>
<ellipse cx="468.4" cy="850.1" rx="3.1" ry="8.5" transform="rotate(-22 468.4 850.1)" fill="#fff" fill-opacity="0.10"/>
<ellipse cx="249.0" cy="825.6" rx="4.3" ry="6.0" transform="rotate(-19 249.0 825.6)" fill="#fff" fill-opacity="0.09"/>
<ellipse cx="286.8" cy="595.9" rx="3.9" ry="6.3" transform="rotate(-22 286.8 595.9)" fill="#fff" fill-opacity="0.09"/>
<ellipse cx="489.6" cy="695.6" rx="3.8" ry="9.0" transform="rotate(-15 489.6 695.6)" fill="#fff" fill-opacity="0.04"/>
<ellipse cx="316.7" cy="690.2" rx="4.5" ry="7.5" transform="rotate(-23 316.7 690.2)" fill="#fff" fill-opacity="0.08"/>
<ellipse cx="381.0" cy="683.3" rx="4.4" ry="5.1" transform="rotate(-24 381.0 683.3)" fill="#fff" fill-opacity="0.07"/>
<ellipse cx="470.4" cy="509.0" rx="3.0" ry="7.6" transform="rotate(-20 470.4 509.0)" fill="#fff" fill-opacity="0.11"/>
<ellipse cx="234.9" cy="627.3" rx="4.1" ry="7.1" transform="rotate(-43 234.9 627.3)" fill="#fff" fill-opacity="0.09"/>
<ellipse cx="267.1" cy="702.9" rx="4.2" ry="8.8" transform="rotate(-14 267.1 702.9)" fill="#fff" fill-opacity="0.06"/>
<ellipse cx="337.4" cy="628.9" rx="4.2" ry="5.7" transform="rotate(-38 337.4 628.9)" fill="#fff" fill-opacity="0.09"/>
<ellipse cx="432.6" cy="831.3" rx="3.4" ry="7.0" transform="rotate(-51 432.6 831.3)" fill="#fff" fill-opacity="0.12"/>
<ellipse cx="207.2" cy="796.4" rx="3.8" ry="8.7" transform="rotate(-36 207.2 796.4)" fill="#fff" fill-opacity="0.05"/>
<ellipse cx="268.6" cy="544.3" rx="3.5" ry="7.8" transform="rotate(-47 268.6 544.3)" fill="#fff" fill-opacity="0.09"/>
<ellipse cx="191.9" cy="781.9" rx="3.2" ry="8.3" transform="rotate(-32 191.9 781.9)" fill="#fff" fill-opacity="0.11"/>
<ellipse cx="227.0" cy="832.8" rx="3.3" ry="5.0" transform="rotate(-20 227.0 832.8)" fill="#fff" fill-opacity="0.12"/>
<ellipse cx="451.8" cy="522.9" rx="4.2" ry="7.5" transform="rotate(-21 451.8 522.9)" fill="#fff" fill-opacity="0.11"/>
<ellipse cx="510.4" cy="607.6" rx="4.4" ry="6.3" transform="rotate(-19 510.4 607.6)" fill="#fff" fill-opacity="0.10"/>
<ellipse cx="399.5" cy="799.4" rx="3.4" ry="6.0" transform="rotate(-29 399.5 799.4)" fill="#fff" fill-opacity="0.09"/>
<ellipse cx="196.9" cy="803.3" rx="3.4" ry="7.8" transform="rotate(-16 196.9 803.3)" fill="#fff" fill-opacity="0.10"/>
<ellipse cx="192.0" cy="773.5" rx="3.5" ry="5.4" transform="rotate(-21 192.0 773.5)" fill="#fff" fill-opacity="0.07"/>
<ellipse cx="431.7" cy="658.7" rx="3.2" ry="5.4" transform="rotate(-19 431.7 658.7)" fill="#fff" fill-opacity="0.07"/>
<ellipse cx="471.7" cy="546.6" rx="4.1" ry="5.4" transform="rotate(-49 471.7 546.6)" fill="#fff" fill-opacity="0.10"/>
<ellipse cx="177.8" cy="577.8" rx="4.3" ry="6.6" transform="rotate(-25 177.8 577.8)" fill="#fff" fill-opacity="0.08"/>
</g>
<path d="M157.3 485.4l4.4 4.4m0 -4.4l-4.4 4.4M163.3 489.3l4.4 4.4m0 -4.4l-4.4 4.4M178.3 485.4l4.4 4.4m0 -4.4l-4.4 4.4M188.4 489.3l4.4 4.4m0 -4.4l-4.4 4.4M212.5 487.5l4.4 4.4m0 -4.4l-4.4 4.4M229.3 490.3l4.4 4.4m0 -4.4l-4.4 4.4M181.2 494.3l4.4 4.4m0 -4.4l-4.4 4.4M201.3 497.3l4.4 4.4m0 -4.4l-4.4 4.4M157.3 501.2l4.4 4.4m0 -4.4l-4.4 4.4M163.3 501.2l4.4 4.4m0 -4.4l-4.4 4.4M184.3 501.2l4.4 4.4m0 -4.4l-4.4 4.4M214.2 501.2l4.4 4.4m0 -4.4l-4.4 4.4M165.4 510.3l4.4 4.4m0 -4.4l-4.4 4.4M176.2 510.1l4.4 4.4m0 -4.4l-4.4 4.4M208.3 513.3l4.4 4.4m0 -4.4l-4.4 4.4M227.3 513.1l4.4 4.4m0 -4.4l-4.4 4.4M154.3 518.3l4.4 4.4m0 -4.4l-4.4 4.4M187.2 518.0l4.4 4.4m0 -4.4l-4.4 4.4M226.5 519.4l4.4 4.4m0 -4.4l-4.4 4.4M206.3 524.3l4.4 4.4m0 -4.4l-4.4 4.4M185.2 526.2l4.4 4.4m0 -4.4l-4.4 4.4M177.3 528.2l4.4 4.4m0 -4.4l-4.4 4.4M195.4 530.4l4.4 4.4m0 -4.4l-4.4 4.4M151.4 536.1l4.4 4.4m0 -4.4l-4.4 4.4M157.3 535.4l4.4 4.4m0 -4.4l-4.4 4.4M226.2 535.4l4.4 4.4m0 -4.4l-4.4 4.4M233.1 534.4l4.4 4.4m0 -4.4l-4.4 4.4M233.1 542.3l4.4 4.4m0 -4.4l-4.4 4.4M215.4 545.2l4.4 4.4m0 -4.4l-4.4 4.4M167.2 552.5l4.4 4.4m0 -4.4l-4.4 4.4M169.3 557.2l4.4 4.4m0 -4.4l-4.4 4.4M233.3 556.3l4.4 4.4m0 -4.4l-4.4 4.4M147.5 561.5l4.4 4.4m0 -4.4l-4.4 4.4M184.3 562.3l4.4 4.4m0 -4.4l-4.4 4.4M205.2 561.4l4.4 4.4m0 -4.4l-4.4 4.4M220.4 563.3l4.4 4.4m0 -4.4l-4.4 4.4M237.4 563.2l4.4 4.4m0 -4.4l-4.4 4.4M201.2 570.2l4.4 4.4m0 -4.4l-4.4 4.4M209.1 570.2l4.4 4.4m0 -4.4l-4.4 4.4M218.4 569.3l4.4 4.4m0 -4.4l-4.4 4.4M172.2 574.2l4.4 4.4m0 -4.4l-4.4 4.4M199.2 577.6l4.4 4.4m0 -4.4l-4.4 4.4M164.3 579.7l4.4 4.4m0 -4.4l-4.4 4.4M205.2 582.3l4.4 4.4m0 -4.4l-4.4 4.4M195.4 585.2l4.4 4.4m0 -4.4l-4.4 4.4M157.3 586.3l4.4 4.4m0 -4.4l-4.4 4.4M219.4 586.3l4.4 4.4m0 -4.4l-4.4 4.4M172.2 589.2l4.4 4.4m0 -4.4l-4.4 4.4M155.2 591.2l4.4 4.4m0 -4.4l-4.4 4.4M162.2 601.2l4.4 4.4m0 -4.4l-4.4 4.4M150.3 603.3l4.4 4.4m0 -4.4l-4.4 4.4M203.3 604.2l4.4 4.4m0 -4.4l-4.4 4.4M223.3 604.2l4.4 4.4m0 -4.4l-4.4 4.4M237.3 601.2l4.4 4.4m0 -4.4l-4.4 4.4M179.3 613.3l4.4 4.4m0 -4.4l-4.4 4.4M147.5 614.4l4.4 4.4m0 -4.4l-4.4 4.4M221.4 616.3l4.4 4.4m0 -4.4l-4.4 4.4M152.2 619.2l4.4 4.4m0 -4.4l-4.4 4.4M167.2 620.2l4.4 4.4m0 -4.4l-4.4 4.4M181.2 621.2l4.4 4.4m0 -4.4l-4.4 4.4M236.1 618.2l4.4 4.4m0 -4.4l-4.4 4.4M192.2 626.3l4.4 4.4m0 -4.4l-4.4 4.4M147.5 632.3l4.4 4.4m0 -4.4l-4.4 4.4M178.2 633.1l4.4 4.4m0 -4.4l-4.4 4.4M161.2 635.3l4.4 4.4m0 -4.4l-4.4 4.4M187.2 636.3l4.4 4.4m0 -4.4l-4.4 4.4M198.3 640.3l4.4 4.4m0 -4.4l-4.4 4.4M209.3 640.3l4.4 4.4m0 -4.4l-4.4 4.4M221.4 640.3l4.4 4.4m0 -4.4l-4.4 4.4M229.3 646.3l4.4 4.4m0 -4.4l-4.4 4.4M187.2 647.2l4.4 4.4m0 -4.4l-4.4 4.4M156.2 651.3l4.4 4.4m0 -4.4l-4.4 4.4M167.2 651.3l4.4 4.4m0 -4.4l-4.4 4.4M176.2 652.3l4.4 4.4m0 -4.4l-4.4 4.4M169.3 660.3l4.4 4.4m0 -4.4l-4.4 4.4M189.3 660.3l4.4 4.4m0 -4.4l-4.4 4.4M205.2 659.2l4.4 4.4m0 -4.4l-4.4 4.4M151.4 662.1l4.4 4.4m0 -4.4l-4.4 4.4M214.2 665.1l4.4 4.4m0 -4.4l-4.4 4.4M146.4 669.3l4.4 4.4m0 -4.4l-4.4 4.4M171.2 670.0l4.4 4.4m0 -4.4l-4.4 4.4M192.2 670.0l4.4 4.4m0 -4.4l-4.4 4.4M180.3 674.3l4.4 4.4m0 -4.4l-4.4 4.4M232.3 674.3l4.4 4.4m0 -4.4l-4.4 4.4M190.1 678.2l4.4 4.4m0 -4.4l-4.4 4.4M157.3 680.3l4.4 4.4m0 -4.4l-4.4 4.4M236.4 680.3l4.4 4.4m0 -4.4l-4.4 4.4M198.3 684.2l4.4 4.4m0 -4.4l-4.4 4.4M189.3 688.2l4.4 4.4m0 -4.4l-4.4 4.4M223.3 688.2l4.4 4.4m0 -4.4l-4.4 4.4M156.2 691.4l4.4 4.4m0 -4.4l-4.4 4.4M209.3 691.4l4.4 4.4m0 -4.4l-4.4 4.4M172.2 699.3l4.4 4.4m0 -4.4l-4.4 4.4M161.2 701.4l4.4 4.4m0 -4.4l-4.4 4.4M190.1 701.4l4.4 4.4m0 -4.4l-4.4 4.4M206.3 701.4l4.4 4.4m0 -4.4l-4.4 4.4M221.4 705.3l4.4 4.4m0 -4.4l-4.4 4.4M164.3 709.3l4.4 4.4m0 -4.4l-4.4 4.4M201.2 709.3l4.4 4.4m0 -4.4l-4.4 4.4M214.2 709.3l4.4 4.4m0 -4.4l-4.4 4.4M237.3 703.4l4.4 4.4m0 -4.4l-4.4 4.4M150.3 713.2l4.4 4.4m0 -4.4l-4.4 4.4M188.2 717.2l4.4 4.4m0 -4.4l-4.4 4.4M209.3 718.2l4.4 4.4m0 -4.4l-4.4 4.4M167.2 719.3l4.4 4.4m0 -4.4l-4.4 4.4M179.3 721.2l4.4 4.4m0 -4.4l-4.4 4.4M160.3 727.2l4.4 4.4m0 -4.4l-4.4 4.4M170.1 728.3l4.4 4.4m0 -4.4l-4.4 4.4M224.4 731.2l4.4 4.4m0 -4.4l-4.4 4.4M163.3 734.3l4.4 4.4m0 -4.4l-4.4 4.4M148.2 735.3l4.4 4.4m0 -4.4l-4.4 4.4M171.2 737.2l4.4 4.4m0 -4.4l-4.4 4.4M202.3 737.2l4.4 4.4m0 -4.4l-4.4 4.4M187.2 741.2l4.4 4.4m0 -4.4l-4.4 4.4M164.3 742.3l4.4 4.4m0 -4.4l-4.4 4.4M232.3 743.2l4.4 4.4m0 -4.4l-4.4 4.4M182.2 745.1l4.4 4.4m0 -4.4l-4.4 4.4M194.4 745.3l4.4 4.4m0 -4.4l-4.4 4.4M215.4 747.2l4.4 4.4m0 -4.4l-4.4 4.4M162.2 748.3l4.4 4.4m0 -4.4l-4.4 4.4M177.3 749.3l4.4 4.4m0 -4.4l-4.4 4.4M224.4 751.2l4.4 4.4m0 -4.4l-4.4 4.4M179.3 759.1l4.4 4.4m0 -4.4l-4.4 4.4M232.3 760.2l4.4 4.4m0 -4.4l-4.4 4.4M183.3 762.6l4.4 4.4m0 -4.4l-4.4 4.4M187.2 770.4l4.4 4.4m0 -4.4l-4.4 4.4M218.4 771.2l4.4 4.4m0 -4.4l-4.4 4.4M195.4 782.3l4.4 4.4m0 -4.4l-4.4 4.4M214.2 782.3l4.4 4.4m0 -4.4l-4.4 4.4M232.3 781.2l4.4 4.4m0 -4.4l-4.4 4.4M150.3 789.1l4.4 4.4m0 -4.4l-4.4 4.4M159.3 791.2l4.4 4.4m0 -4.4l-4.4 4.4M170.1 791.2l4.4 4.4m0 -4.4l-4.4 4.4M196.1 792.3l4.4 4.4m0 -4.4l-4.4 4.4M212.3 798.3l4.4 4.4m0 -4.4l-4.4 4.4M189.3 800.2l4.4 4.4m0 -4.4l-4.4 4.4M198.3 801.2l4.4 4.4m0 -4.4l-4.4 4.4M226.3 800.2l4.4 4.4m0 -4.4l-4.4 4.4M158.2 805.2l4.4 4.4m0 -4.4l-4.4 4.4M164.3 805.2l4.4 4.4m0 -4.4l-4.4 4.4M184.3 807.2l4.4 4.4m0 -4.4l-4.4 4.4M209.3 805.2l4.4 4.4m0 -4.4l-4.4 4.4M194.4 809.1l4.4 4.4m0 -4.4l-4.4 4.4M236.4 808.3l4.4 4.4m0 -4.4l-4.4 4.4M162.2 813.1l4.4 4.4m0 -4.4l-4.4 4.4M221.4 820.2l4.4 4.4m0 -4.4l-4.4 4.4M153.3 822.3l4.4 4.4m0 -4.4l-4.4 4.4M200.4 825.3l4.4 4.4m0 -4.4l-4.4 4.4M164.3 826.3l4.4 4.4m0 -4.4l-4.4 4.4M187.2 827.3l4.4 4.4m0 -4.4l-4.4 4.4M213.3 830.2l4.4 4.4m0 -4.4l-4.4 4.4M175.2 832.3l4.4 4.4m0 -4.4l-4.4 4.4M235.6 831.3l4.4 4.4m0 -4.4l-4.4 4.4M151.4 835.3l4.4 4.4m0 -4.4l-4.4 4.4M164.3 835.3l4.4 4.4m0 -4.4l-4.4 4.4M207.3 836.2l4.4 4.4m0 -4.4l-4.4 4.4M199.3 838.3l4.4 4.4m0 -4.4l-4.4 4.4M156.2 843.4l4.4 4.4m0 -4.4l-4.4 4.4M175.2 845.2l4.4 4.4m0 -4.4l-4.4 4.4M205.2 846.3l4.4 4.4m0 -4.4l-4.4 4.4M145.4 848.1l4.4 4.4m0 -4.4l-4.4 4.4M250.5 485.4l4.4 4.4m0 -4.4l-4.4 4.4M280.2 486.7l4.4 4.4m0 -4.4l-4.4 4.4M317.4 487.5l4.4 4.4m0 -4.4l-4.4 4.4M282.3 493.1l4.4 4.4m0 -4.4l-4.4 4.4M298.2 493.3l4.4 4.4m0 -4.4l-4.4 4.4M274.2 494.3l4.4 4.4m0 -4.4l-4.4 4.4M266.3 496.2l4.4 4.4m0 -4.4l-4.4 4.4M259.2 499.4l4.4 4.4m0 -4.4l-4.4 4.4M289.1 499.4l4.4 4.4m0 -4.4l-4.4 4.4M246.3 501.2l4.4 4.4m0 -4.4l-4.4 4.4M239.1 504.3l4.4 4.4m0 -4.4l-4.4 4.4M316.0 506.1l4.4 4.4m0 -4.4l-4.4 4.4M321.6 507.2l4.4 4.4m0 -4.4l-4.4 4.4M254.2 508.0l4.4 4.4m0 -4.4l-4.4 4.4M248.1 510.1l4.4 4.4m0 -4.4l-4.4 4.4M296.3 508.2l4.4 4.4m0 -4.4l-4.4 4.4M308.2 510.1l4.4 4.4m0 -4.4l-4.4 4.4M258.4 512.2l4.4 4.4m0 -4.4l-4.4 4.4M272.3 516.2l4.4 4.4m0 -4.4l-4.4 4.4M241.2 518.3l4.4 4.4m0 -4.4l-4.4 4.4M298.2 521.2l4.4 4.4m0 -4.4l-4.4 4.4M249.2 524.3l4.4 4.4m0 -4.4l-4.4 4.4M286.3 525.2l4.4 4.4m0 -4.4l-4.4 4.4M256.3 528.2l4.4 4.4m0 -4.4l-4.4 4.4M269.1 528.0l4.4 4.4m0 -4.4l-4.4 4.4M299.3 528.2l4.4 4.4m0 -4.4l-4.4 4.4M310.2 529.8l4.4 4.4m0 -4.4l-4.4 4.4M239.1 531.2l4.4 4.4m0 -4.4l-4.4 4.4M329.9 531.2l4.4 4.4m0 -4.4l-4.4 4.4M317.4 534.1l4.4 4.4m0 -4.4l-4.4 4.4M309.5 534.6l4.4 4.4m0 -4.4l-4.4 4.4M277.3 536.1l4.4 4.4m0 -4.4l-4.4 4.4M246.3 538.3l4.4 4.4m0 -4.4l-4.4 4.4M325.3 538.3l4.4 4.4m0 -4.4l-4.4 4.4M266.1 539.3l4.4 4.4m0 -4.4l-4.4 4.4M306.3 540.4l4.4 4.4m0 -4.4l-4.4 4.4M283.1 541.2l4.4 4.4m0 -4.4l-4.4 4.4M274.2 543.3l4.4 4.4m0 -4.4l-4.4 4.4M282.3 549.1l4.4 4.4m0 -4.4l-4.4 4.4M245.2 552.5l4.4 4.4m0 -4.4l-4.4 4.4M294.2 553.1l4.4 4.4m0 -4.4l-4.4 4.4M271.2 555.4l4.4 4.4m0 -4.4l-4.4 4.4M300.3 558.3l4.4 4.4m0 -4.4l-4.4 4.4M322.3 560.2l4.4 4.4m0 -4.4l-4.4 4.4M280.2 561.2l4.4 4.4m0 -4.4l-4.4 4.4M317.4 565.2l4.4 4.4m0 -4.4l-4.4 4.4M329.9 564.0l4.4 4.4m0 -4.4l-4.4 4.4M297.1 566.2l4.4 4.4m0 -4.4l-4.4 4.4M323.2 569.1l4.4 4.4m0 -4.4l-4.4 4.4M257.3 569.1l4.4 4.4m0 -4.4l-4.4 4.4M249.2 570.2l4.4 4.4m0 -4.4l-4.4 4.4M277.3 574.2l4.4 4.4m0 -4.4l-4.4 4.4M303.2 574.2l4.4 4.4m0 -4.4l-4.4 4.4M274.2 581.3l4.4 4.4m0 -4.4l-4.4 4.4M289.1 581.3l4.4 4.4m0 -4.4l-4.4 4.4M311.4 579.4l4.4 4.4m0 -4.4l-4.4 4.4M264.2 584.4l4.4 4.4m0 -4.4l-4.4 4.4M281.2 588.2l4.4 4.4m0 -4.4l-4.4 4.4M259.2 591.2l4.4 4.4m0 -4.4l-4.4 4.4M312.4 592.4l4.4 4.4m0 -4.4l-4.4 4.4M251.2 595.2l4.4 4.4m0 -4.4l-4.4 4.4M296.3 602.3l4.4 4.4m0 -4.4l-4.4 4.4M322.3 601.2l4.4 4.4m0 -4.4l-4.4 4.4M302.3 607.3l4.4 4.4m0 -4.4l-4.4 4.4M274.2 608.4l4.4 4.4m0 -4.4l-4.4 4.4M328.9 608.2l4.4 4.4m0 -4.4l-4.4 4.4M244.4 612.3l4.4 4.4m0 -4.4l-4.4 4.4M252.3 614.2l4.4 4.4m0 -4.4l-4.4 4.4M294.2 613.1l4.4 4.4m0 -4.4l-4.4 4.4M320.3 615.0l4.4 4.4m0 -4.4l-4.4 4.4M266.3 617.3l4.4 4.4m0 -4.4l-4.4 4.4M283.4 618.2l4.4 4.4m0 -4.4l-4.4 4.4M323.4 621.2l4.4 4.4m0 -4.4l-4.4 4.4M308.4 624.2l4.4 4.4m0 -4.4l-4.4 4.4M244.4 629.1l4.4 4.4m0 -4.4l-4.4 4.4M306.3 629.1l4.4 4.4m0 -4.4l-4.4 4.4M258.4 632.1l4.4 4.4m0 -4.4l-4.4 4.4M280.2 636.3l4.4 4.4m0 -4.4l-4.4 4.4M250.3 640.3l4.4 4.4m0 -4.4l-4.4 4.4M263.1 640.3l4.4 4.4m0 -4.4l-4.4 4.4M269.2 642.1l4.4 4.4m0 -4.4l-4.4 4.4M293.4 647.2l4.4 4.4m0 -4.4l-4.4 4.4M303.4 646.3l4.4 4.4m0 -4.4l-4.4 4.4M316.3 645.3l4.4 4.4m0 -4.4l-4.4 4.4M328.9 646.3l4.4 4.4m0 -4.4l-4.4 4.4M243.3 649.3l4.4 4.4m0 -4.4l-4.4 4.4M260.2 651.3l4.4 4.4m0 -4.4l-4.4 4.4M312.4 663.2l4.4 4.4m0 -4.4l-4.4 4.4M260.2 664.2l4.4 4.4m0 -4.4l-4.4 4.4M320.3 666.1l4.4 4.4m0 -4.4l-4.4 4.4M272.3 670.4l4.4 4.4m0 -4.4l-4.4 4.4M283.4 673.3l4.4 4.4m0 -4.4l-4.4 4.4M241.2 675.3l4.4 4.4m0 -4.4l-4.4 4.4M315.3 677.4l4.4 4.4m0 -4.4l-4.4 4.4M266.3 677.4l4.4 4.4m0 -4.4l-4.4 4.4M255.2 678.2l4.4 4.4m0 -4.4l-4.4 4.4M249.2 682.2l4.4 4.4m0 -4.4l-4.4 4.4M294.2 686.4l4.4 4.4m0 -4.4l-4.4 4.4M276.3 687.2l4.4 4.4m0 -4.4l-4.4 4.4M252.3 691.4l4.4 4.4m0 -4.4l-4.4 4.4M306.3 694.2l4.4 4.4m0 -4.4l-4.4 4.4M323.4 694.2l4.4 4.4m0 -4.4l-4.4 4.4M277.3 697.2l4.4 4.4m0 -4.4l-4.4 4.4M253.3 702.2l4.4 4.4m0 -4.4l-4.4 4.4M257.3 705.3l4.4 4.4m0 -4.4l-4.4 4.4M270.3 706.3l4.4 4.4m0 -4.4l-4.4 4.4M303.4 704.2l4.4 4.4m0 -4.4l-4.4 4.4M244.4 708.2l4.4 4.4m0 -4.4l-4.4 4.4M249.2 711.2l4.4 4.4m0 -4.4l-4.4 4.4M301.3 713.2l4.4 4.4m0 -4.4l-4.4 4.4M311.4 713.2l4.4 4.4m0 -4.4l-4.4 4.4M283.1 715.3l4.4 4.4m0 -4.4l-4.4 4.4M330.3 713.7l4.4 4.4m0 -4.4l-4.4 4.4M294.2 717.2l4.4 4.4m0 -4.4l-4.4 4.4M301.3 719.3l4.4 4.4m0 -4.4l-4.4 4.4M240.5 718.2l4.4 4.4m0 -4.4l-4.4 4.4M270.3 720.1l4.4 4.4m0 -4.4l-4.4 4.4M289.1 725.3l4.4 4.4m0 -4.4l-4.4 4.4M330.3 724.9l4.4 4.4m0 -4.4l-4.4 4.4M249.2 728.3l4.4 4.4m0 -4.4l-4.4 4.4M265.2 728.3l4.4 4.4m0 -4.4l-4.4 4.4M300.3 728.3l4.4 4.4m0 -4.4l-4.4 4.4M246.3 735.3l4.4 4.4m0 -4.4l-4.4 4.4M272.3 737.2l4.4 4.4m0 -4.4l-4.4 4.4M325.3 737.2l4.4 4.4m0 -4.4l-4.4 4.4M289.1 742.3l4.4 4.4m0 -4.4l-4.4 4.4M320.3 744.3l4.4 4.4m0 -4.4l-4.4 4.4M327.4 745.3l4.4 4.4m0 -4.4l-4.4 4.4M282.3 746.2l4.4 4.4m0 -4.4l-4.4 4.4M286.3 750.4l4.4 4.4m0 -4.4l-4.4 4.4M278.2 752.2l4.4 4.4m0 -4.4l-4.4 4.4M300.3 752.2l4.4 4.4m0 -4.4l-4.4 4.4M251.2 754.3l4.4 4.4m0 -4.4l-4.4 4.4M309.5 756.2l4.4 4.4m0 -4.4l-4.4 4.4M247.3 761.9l4.4 4.4m0 -4.4l-4.4 4.4M280.2 760.2l4.4 4.4m0 -4.4l-4.4 4.4M266.3 765.4l4.4 4.4m0 -4.4l-4.4 4.4M239.4 768.3l4.4 4.4m0 -4.4l-4.4 4.4M268.2 775.2l4.4 4.4m0 -4.4l-4.4 4.4M317.4 778.4l4.4 4.4m0 -4.4l-4.4 4.4M280.2 780.2l4.4 4.4m0 -4.4l-4.4 4.4M299.3 780.2l4.4 4.4m0 -4.4l-4.4 4.4M330.3 782.3l4.4 4.4m0 -4.4l-4.4 4.4M264.2 785.2l4.4 4.4m0 -4.4l-4.4 4.4M294.2 785.2l4.4 4.4m0 -4.4l-4.4 4.4M248.2 788.3l4.4 4.4m0 -4.4l-4.4 4.4M255.2 788.3l4.4 4.4m0 -4.4l-4.4 4.4M278.2 789.1l4.4 4.4m0 -4.4l-4.4 4.4M243.3 793.3l4.4 4.4m0 -4.4l-4.4 4.4M317.4 793.3l4.4 4.4m0 -4.4l-4.4 4.4M257.3 796.3l4.4 4.4m0 -4.4l-4.4 4.4M265.2 796.3l4.4 4.4m0 -4.4l-4.4 4.4M294.2 797.2l4.4 4.4m0 -4.4l-4.4 4.4M248.2 802.3l4.4 4.4m0 -4.4l-4.4 4.4M309.5 802.3l4.4 4.4m0 -4.4l-4.4 4.4M257.3 805.2l4.4 4.4m0 -4.4l-4.4 4.4M284.2 805.2l4.4 4.4m0 -4.4l-4.4 4.4M323.4 807.2l4.4 4.4m0 -4.4l-4.4 4.4M276.3 808.3l4.4 4.4m0 -4.4l-4.4 4.4M289.1 812.3l4.4 4.4m0 -4.4l-4.4 4.4M310.2 812.3l4.4 4.4m0 -4.4l-4.4 4.4M259.2 815.1l4.4 4.4m0 -4.4l-4.4 4.4M303.4 819.4l4.4 4.4m0 -4.4l-4.4 4.4M240.5 825.3l4.4 4.4m0 -4.4l-4.4 4.4M280.2 825.3l4.4 4.4m0 -4.4l-4.4 4.4M291.3 824.2l4.4 4.4m0 -4.4l-4.4 4.4M319.3 825.3l4.4 4.4m0 -4.4l-4.4 4.4M322.3 831.3l4.4 4.4m0 -4.4l-4.4 4.4M283.1 833.2l4.4 4.4m0 -4.4l-4.4 4.4M301.3 838.3l4.4 4.4m0 -4.4l-4.4 4.4M252.3 842.3l4.4 4.4m0 -4.4l-4.4 4.4M306.3 846.3l4.4 4.4m0 -4.4l-4.4 4.4M314.4 846.3l4.4 4.4m0 -4.4l-4.4 4.4M284.2 850.2l4.4 4.4m0 -4.4l-4.4 4.4M293.1 850.2l4.4 4.4m0 -4.4l-4.4 4.4M269.2 852.3l4.4 4.4m0 -4.4l-4.4 4.4M343.3 488.3l4.4 4.4m0 -4.4l-4.4 4.4M363.3 490.1l4.4 4.4m0 -4.4l-4.4 4.4M375.3 486.7l4.4 4.4m0 -4.4l-4.4 4.4M386.1 485.4l4.4 4.4m0 -4.4l-4.4 4.4M385.3 493.3l4.4 4.4m0 -4.4l-4.4 4.4M351.4 496.2l4.4 4.4m0 -4.4l-4.4 4.4M408.3 498.2l4.4 4.4m0 -4.4l-4.4 4.4M423.0 495.3l4.4 4.4m0 -4.4l-4.4 4.4M372.2 502.2l4.4 4.4m0 -4.4l-4.4 4.4M355.3 510.1l4.4 4.4m0 -4.4l-4.4 4.4M420.4 509.3l4.4 4.4m0 -4.4l-4.4 4.4M406.2 513.3l4.4 4.4m0 -4.4l-4.4 4.4M388.3 517.3l4.4 4.4m0 -4.4l-4.4 4.4M400.2 518.2l4.4 4.4m0 -4.4l-4.4 4.4M349.3 524.3l4.4 4.4m0 -4.4l-4.4 4.4M395.3 526.2l4.4 4.4m0 -4.4l-4.4 4.4M369.3 528.2l4.4 4.4m0 -4.4l-4.4 4.4M389.3 528.2l4.4 4.4m0 -4.4l-4.4 4.4M406.2 529.3l4.4 4.4m0 -4.4l-4.4 4.4M382.1 536.1l4.4 4.4m0 -4.4l-4.4 4.4M344.2 537.3l4.4 4.4m0 -4.4l-4.4 4.4M359.1 538.3l4.4 4.4m0 -4.4l-4.4 4.4M345.4 544.4l4.4 4.4m0 -4.4l-4.4 4.4M407.4 549.1l4.4 4.4m0 -4.4l-4.4 4.4M422.9 547.0l4.4 4.4m0 -4.4l-4.4 4.4M386.1 554.2l4.4 4.4m0 -4.4l-4.4 4.4M395.3 560.2l4.4 4.4m0 -4.4l-4.4 4.4M355.3 563.3l4.4 4.4m0 -4.4l-4.4 4.4M337.4 569.3l4.4 4.4m0 -4.4l-4.4 4.4M411.4 576.9l4.4 4.4m0 -4.4l-4.4 4.4M363.3 580.3l4.4 4.4m0 -4.4l-4.4 4.4M383.3 580.3l4.4 4.4m0 -4.4l-4.4 4.4M332.4 589.2l4.4 4.4m0 -4.4l-4.4 4.4M350.3 589.2l4.4 4.4m0 -4.4l-4.4 4.4M381.4 591.2l4.4 4.4m0 -4.4l-4.4 4.4M415.3 592.4l4.4 4.4m0 -4.4l-4.4 4.4M395.3 593.1l4.4 4.4m0 -4.4l-4.4 4.4M360.3 595.2l4.4 4.4m0 -4.4l-4.4 4.4M389.3 595.2l4.4 4.4m0 -4.4l-4.4 4.4M401.4 596.3l4.4 4.4m0 -4.4l-4.4 4.4M334.2 597.3l4.4 4.4m0 -4.4l-4.4 4.4M341.2 600.2l4.4 4.4m0 -4.4l-4.4 4.4M405.4 603.1l4.4 4.4m0 -4.4l-4.4 4.4M350.3 604.2l4.4 4.4m0 -4.4l-4.4 4.4M366.3 605.2l4.4 4.4m0 -4.4l-4.4 4.4M381.4 606.3l4.4 4.4m0 -4.4l-4.4 4.4M348.2 609.5l4.4 4.4m0 -4.4l-4.4 4.4M349.3 614.2l4.4 4.4m0 -4.4l-4.4 4.4M335.3 615.2l4.4 4.4m0 -4.4l-4.4 4.4M394.3 614.2l4.4 4.4m0 -4.4l-4.4 4.4M390.1 619.2l4.4 4.4m0 -4.4l-4.4 4.4M348.2 622.3l4.4 4.4m0 -4.4l-4.4 4.4M361.2 622.3l4.4 4.4m0 -4.4l-4.4 4.4M375.3 623.1l4.4 4.4m0 -4.4l-4.4 4.4M416.4 622.3l4.4 4.4m0 -4.4l-4.4 4.4M383.3 626.3l4.4 4.4m0 -4.4l-4.4 4.4M360.3 628.2l4.4 4.4m0 -4.4l-4.4 4.4M369.3 628.2l4.4 4.4m0 -4.4l-4.4 4.4M400.2 628.2l4.4 4.4m0 -4.4l-4.4 4.4M406.4 627.1l4.4 4.4m0 -4.4l-4.4 4.4M337.4 632.3l4.4 4.4m0 -4.4l-4.4 4.4M353.2 632.3l4.4 4.4m0 -4.4l-4.4 4.4M374.2 633.4l4.4 4.4m0 -4.4l-4.4 4.4M408.3 636.3l4.4 4.4m0 -4.4l-4.4 4.4M401.2 637.1l4.4 4.4m0 -4.4l-4.4 4.4M352.2 639.3l4.4 4.4m0 -4.4l-4.4 4.4M344.2 643.4l4.4 4.4m0 -4.4l-4.4 4.4M360.3 643.4l4.4 4.4m0 -4.4l-4.4 4.4M420.4 643.4l4.4 4.4m0 -4.4l-4.4 4.4M341.2 647.2l4.4 4.4m0 -4.4l-4.4 4.4M415.3 647.2l4.4 4.4m0 -4.4l-4.4 4.4M352.2 649.3l4.4 4.4m0 -4.4l-4.4 4.4M383.3 648.4l4.4 4.4m0 -4.4l-4.4 4.4M420.4 654.2l4.4 4.4m0 -4.4l-4.4 4.4M332.4 657.4l4.4 4.4m0 -4.4l-4.4 4.4M372.2 657.4l4.4 4.4m0 -4.4l-4.4 4.4M410.4 660.3l4.4 4.4m0 -4.4l-4.4 4.4M345.3 662.1l4.4 4.4m0 -4.4l-4.4 4.4M369.3 664.2l4.4 4.4m0 -4.4l-4.4 4.4M402.5 666.1l4.4 4.4m0 -4.4l-4.4 4.4M341.2 670.1l4.4 4.4m0 -4.4l-4.4 4.4M381.4 670.4l4.4 4.4m0 -4.4l-4.4 4.4M396.4 673.3l4.4 4.4m0 -4.4l-4.4 4.4M420.4 673.3l4.4 4.4m0 -4.4l-4.4 4.4M333.5 676.3l4.4 4.4m0 -4.4l-4.4 4.4M364.2 680.3l4.4 4.4m0 -4.4l-4.4 4.4M383.3 680.3l4.4 4.4m0 -4.4l-4.4 4.4M401.4 681.2l4.4 4.4m0 -4.4l-4.4 4.4M408.3 685.4l4.4 4.4m0 -4.4l-4.4 4.4M334.2 686.4l4.4 4.4m0 -4.4l-4.4 4.4M341.2 687.2l4.4 4.4m0 -4.4l-4.4 4.4M375.3 688.2l4.4 4.4m0 -4.4l-4.4 4.4M385.3 688.2l4.4 4.4m0 -4.4l-4.4 4.4M357.2 694.2l4.4 4.4m0 -4.4l-4.4 4.4M417.2 694.2l4.4 4.4m0 -4.4l-4.4 4.4M380.4 698.2l4.4 4.4m0 -4.4l-4.4 4.4M387.2 698.2l4.4 4.4m0 -4.4l-4.4 4.4M396.4 700.3l4.4 4.4m0 -4.4l-4.4 4.4M350.3 701.2l4.4 4.4m0 -4.4l-4.4 4.4M414.3 705.3l4.4 4.4m0 -4.4l-4.4 4.4M344.2 708.2l4.4 4.4m0 -4.4l-4.4 4.4M369.3 711.2l4.4 4.4m0 -4.4l-4.4 4.4M360.3 714.2l4.4 4.4m0 -4.4l-4.4 4.4M406.4 714.2l4.4 4.4m0 -4.4l-4.4 4.4M422.4 714.2l4.4 4.4m0 -4.4l-4.4 4.4M352.2 719.3l4.4 4.4m0 -4.4l-4.4 4.4M376.1 722.1l4.4 4.4m0 -4.4l-4.4 4.4M358.2 725.3l4.4 4.4m0 -4.4l-4.4 4.4M374.2 729.3l4.4 4.4m0 -4.4l-4.4 4.4M386.4 731.2l4.4 4.4m0 -4.4l-4.4 4.4M414.3 733.3l4.4 4.4m0 -4.4l-4.4 4.4M335.3 735.3l4.4 4.4m0 -4.4l-4.4 4.4M401.4 739.3l4.4 4.4m0 -4.4l-4.4 4.4M374.2 740.2l4.4 4.4m0 -4.4l-4.4 4.4M337.4 744.3l4.4 4.4m0 -4.4l-4.4 4.4M383.3 744.3l4.4 4.4m0 -4.4l-4.4 4.4M415.3 745.3l4.4 4.4m0 -4.4l-4.4 4.4M423.1 748.3l4.4 4.4m0 -4.4l-4.4 4.4M364.2 751.2l4.4 4.4m0 -4.4l-4.4 4.4M411.4 753.3l4.4 4.4m0 -4.4l-4.4 4.4M342.2 756.2l4.4 4.4m0 -4.4l-4.4 4.4M404.4 757.2l4.4 4.4m0 -4.4l-4.4 4.4M417.2 762.4l4.4 4.4m0 -4.4l-4.4 4.4M385.3 765.1l4.4 4.4m0 -4.4l-4.4 4.4M392.3 767.3l4.4 4.4m0 -4.4l-4.4 4.4M409.3 770.4l4.4 4.4m0 -4.4l-4.4 4.4M422.9 768.2l4.4 4.4m0 -4.4l-4.4 4.4M377.2 774.2l4.4 4.4m0 -4.4l-4.4 4.4M349.3 775.2l4.4 4.4m0 -4.4l-4.4 4.4M343.3 779.1l4.4 4.4m0 -4.4l-4.4 4.4M341.2 782.3l4.4 4.4m0 -4.4l-4.4 4.4M358.2 782.3l4.4 4.4m0 -4.4l-4.4 4.4M370.3 784.4l4.4 4.4m0 -4.4l-4.4 4.4M406.4 785.2l4.4 4.4m0 -4.4l-4.4 4.4M349.3 790.2l4.4 4.4m0 -4.4l-4.4 4.4M335.3 793.3l4.4 4.4m0 -4.4l-4.4 4.4M361.2 793.3l4.4 4.4m0 -4.4l-4.4 4.4M389.3 793.3l4.4 4.4m0 -4.4l-4.4 4.4M332.4 799.3l4.4 4.4m0 -4.4l-4.4 4.4M373.2 799.3l4.4 4.4m0 -4.4l-4.4 4.4M350.3 802.3l4.4 4.4m0 -4.4l-4.4 4.4M376.1 811.2l4.4 4.4m0 -4.4l-4.4 4.4M367.2 813.1l4.4 4.4m0 -4.4l-4.4 4.4M400.2 813.1l4.4 4.4m0 -4.4l-4.4 4.4M380.4 817.3l4.4 4.4m0 -4.4l-4.4 4.4M331.4 818.3l4.4 4.4m0 -4.4l-4.4 4.4M357.2 818.3l4.4 4.4m0 -4.4l-4.4 4.4M363.3 820.2l4.4 4.4m0 -4.4l-4.4 4.4M336.3 823.1l4.4 4.4m0 -4.4l-4.4 4.4M397.2 824.2l4.4 4.4m0 -4.4l-4.4 4.4M346.3 825.3l4.4 4.4m0 -4.4l-4.4 4.4M417.2 827.3l4.4 4.4m0 -4.4l-4.4 4.4M360.3 830.2l4.4 4.4m0 -4.4l-4.4 4.4M392.3 830.2l4.4 4.4m0 -4.4l-4.4 4.4M398.3 833.2l4.4 4.4m0 -4.4l-4.4 4.4M414.3 834.4l4.4 4.4m0 -4.4l-4.4 4.4M422.9 835.3l4.4 4.4m0 -4.4l-4.4 4.4M351.2 840.2l4.4 4.4m0 -4.4l-4.4 4.4M377.2 843.4l4.4 4.4m0 -4.4l-4.4 4.4M386.1 844.2l4.4 4.4m0 -4.4l-4.4 4.4M397.2 849.2l4.4 4.4m0 -4.4l-4.4 4.4M335.3 851.3l4.4 4.4m0 -4.4l-4.4 4.4M362.2 851.8l4.4 4.4m0 -4.4l-4.4 4.4M450.2 487.5l4.4 4.4m0 -4.4l-4.4 4.4M462.3 491.2l4.4 4.4m0 -4.4l-4.4 4.4M484.2 490.3l4.4 4.4m0 -4.4l-4.4 4.4M505.3 486.1l4.4 4.4m0 -4.4l-4.4 4.4M452.3 494.3l4.4 4.4m0 -4.4l-4.4 4.4M496.2 495.2l4.4 4.4m0 -4.4l-4.4 4.4M508.1 493.1l4.4 4.4m0 -4.4l-4.4 4.4M452.3 501.2l4.4 4.4m0 -4.4l-4.4 4.4M468.3 502.2l4.4 4.4m0 -4.4l-4.4 4.4M496.2 512.2l4.4 4.4m0 -4.4l-4.4 4.4M512.1 516.2l4.4 4.4m0 -4.4l-4.4 4.4M430.4 519.3l4.4 4.4m0 -4.4l-4.4 4.4M482.3 518.2l4.4 4.4m0 -4.4l-4.4 4.4M468.3 521.2l4.4 4.4m0 -4.4l-4.4 4.4M508.1 522.2l4.4 4.4m0 -4.4l-4.4 4.4M485.3 527.2l4.4 4.4m0 -4.4l-4.4 4.4M454.2 531.2l4.4 4.4m0 -4.4l-4.4 4.4M433.3 535.4l4.4 4.4m0 -4.4l-4.4 4.4M486.3 541.2l4.4 4.4m0 -4.4l-4.4 4.4M502.3 541.2l4.4 4.4m0 -4.4l-4.4 4.4M512.3 541.2l4.4 4.4m0 -4.4l-4.4 4.4M428.3 552.3l4.4 4.4m0 -4.4l-4.4 4.4M440.2 551.2l4.4 4.4m0 -4.4l-4.4 4.4M450.2 552.3l4.4 4.4m0 -4.4l-4.4 4.4M462.3 553.3l4.4 4.4m0 -4.4l-4.4 4.4M491.3 551.2l4.4 4.4m0 -4.4l-4.4 4.4M502.3 556.3l4.4 4.4m0 -4.4l-4.4 4.4M507.3 563.3l4.4 4.4m0 -4.4l-4.4 4.4M477.3 567.3l4.4 4.4m0 -4.4l-4.4 4.4M431.2 568.1l4.4 4.4m0 -4.4l-4.4 4.4M494.4 570.2l4.4 4.4m0 -4.4l-4.4 4.4M433.3 576.0l4.4 4.4m0 -4.4l-4.4 4.4M471.2 574.2l4.4 4.4m0 -4.4l-4.4 4.4M481.3 576.5l4.4 4.4m0 -4.4l-4.4 4.4M498.3 577.3l4.4 4.4m0 -4.4l-4.4 4.4M440.2 583.3l4.4 4.4m0 -4.4l-4.4 4.4M471.2 583.3l4.4 4.4m0 -4.4l-4.4 4.4M449.1 587.3l4.4 4.4m0 -4.4l-4.4 4.4M498.4 588.2l4.4 4.4m0 -4.4l-4.4 4.4M467.2 589.2l4.4 4.4m0 -4.4l-4.4 4.4M473.4 589.2l4.4 4.4m0 -4.4l-4.4 4.4M437.2 592.4l4.4 4.4m0 -4.4l-4.4 4.4M447.2 592.4l4.4 4.4m0 -4.4l-4.4 4.4M488.3 593.4l4.4 4.4m0 -4.4l-4.4 4.4M456.3 597.3l4.4 4.4m0 -4.4l-4.4 4.4M437.2 599.2l4.4 4.4m0 -4.4l-4.4 4.4M448.3 600.2l4.4 4.4m0 -4.4l-4.4 4.4M511.3 602.3l4.4 4.4m0 -4.4l-4.4 4.4M462.3 605.2l4.4 4.4m0 -4.4l-4.4 4.4M438.3 609.2l4.4 4.4m0 -4.4l-4.4 4.4M451.2 609.2l4.4 4.4m0 -4.4l-4.4 4.4M474.4 609.2l4.4 4.4m0 -4.4l-4.4 4.4M488.3 611.2l4.4 4.4m0 -4.4l-4.4 4.4M428.3 612.3l4.4 4.4m0 -4.4l-4.4 4.4M511.3 612.3l4.4 4.4m0 -4.4l-4.4 4.4M484.9 614.4l4.4 4.4m0 -4.4l-4.4 4.4M503.4 616.3l4.4 4.4m0 -4.4l-4.4 4.4M464.2 617.3l4.4 4.4m0 -4.4l-4.4 4.4M474.4 619.2l4.4 4.4m0 -4.4l-4.4 4.4M451.2 619.2l4.4 4.4m0 -4.4l-4.4 4.4M429.3 621.2l4.4 4.4m0 -4.4l-4.4 4.4M491.3 622.3l4.4 4.4m0 -4.4l-4.4 4.4M439.3 625.2l4.4 4.4m0 -4.4l-4.4 4.4M447.2 625.2l4.4 4.4m0 -4.4l-4.4 4.4M499.4 626.3l4.4 4.4m0 -4.4l-4.4 4.4M488.3 629.1l4.4 4.4m0 -4.4l-4.4 4.4M511.3 629.1l4.4 4.4m0 -4.4l-4.4 4.4M461.2 630.3l4.4 4.4m0 -4.4l-4.4 4.4M482.3 635.3l4.4 4.4m0 -4.4l-4.4 4.4M468.3 637.1l4.4 4.4m0 -4.4l-4.4 4.4M503.4 640.3l4.4 4.4m0 -4.4l-4.4 4.4M457.2 641.3l4.4 4.4m0 -4.4l-4.4 4.4M438.3 643.4l4.4 4.4m0 -4.4l-4.4 4.4M471.2 646.3l4.4 4.4m0 -4.4l-4.4 4.4M482.3 647.2l4.4 4.4m0 -4.4l-4.4 4.4M465.2 648.4l4.4 4.4m0 -4.4l-4.4 4.4M439.3 648.4l4.4 4.4m0 -4.4l-4.4 4.4M512.3 651.3l4.4 4.4m0 -4.4l-4.4 4.4M491.3 653.4l4.4 4.4m0 -4.4l-4.4 4.4M448.3 654.4l4.4 4.4m0 -4.4l-4.4 4.4M468.3 654.4l4.4 4.4m0 -4.4l-4.4 4.4M484.2 654.4l4.4 4.4m0 -4.4l-4.4 4.4M454.2 660.3l4.4 4.4m0 -4.4l-4.4 4.4M464.2 661.1l4.4 4.4m0 -4.4l-4.4 4.4M497.4 660.3l4.4 4.4m0 -4.4l-4.4 4.4M490.2 662.1l4.4 4.4m0 -4.4l-4.4 4.4M482.3 663.2l4.4 4.4m0 -4.4l-4.4 4.4M431.2 664.2l4.4 4.4m0 -4.4l-4.4 4.4M437.2 663.2l4.4 4.4m0 -4.4l-4.4 4.4M512.3 666.3l4.4 4.4m0 -4.4l-4.4 4.4M480.2 671.4l4.4 4.4m0 -4.4l-4.4 4.4M427.2 675.3l4.4 4.4m0 -4.4l-4.4 4.4M457.2 674.3l4.4 4.4m0 -4.4l-4.4 4.4M473.4 674.3l4.4 4.4m0 -4.4l-4.4 4.4M486.3 675.3l4.4 4.4m0 -4.4l-4.4 4.4M504.4 674.3l4.4 4.4m0 -4.4l-4.4 4.4M445.2 677.4l4.4 4.4m0 -4.4l-4.4 4.4M434.2 680.3l4.4 4.4m0 -4.4l-4.4 4.4M511.3 682.2l4.4 4.4m0 -4.4l-4.4 4.4M440.2 688.2l4.4 4.4m0 -4.4l-4.4 4.4M452.3 688.2l4.4 4.4m0 -4.4l-4.4 4.4M495.5 688.2l4.4 4.4m0 -4.4l-4.4 4.4M463.3 694.2l4.4 4.4m0 -4.4l-4.4 4.4M475.1 695.3l4.4 4.4m0 -4.4l-4.4 4.4M489.4 694.2l4.4 4.4m0 -4.4l-4.4 4.4M508.1 696.1l4.4 4.4m0 -4.4l-4.4 4.4M451.2 702.2l4.4 4.4m0 -4.4l-4.4 4.4M441.2 706.3l4.4 4.4m0 -4.4l-4.4 4.4M494.4 707.2l4.4 4.4m0 -4.4l-4.4 4.4M508.1 706.3l4.4 4.4m0 -4.4l-4.4 4.4M426.5 709.3l4.4 4.4m0 -4.4l-4.4 4.4M470.2 713.2l4.4 4.4m0 -4.4l-4.4 4.4M451.2 714.2l4.4 4.4m0 -4.4l-4.4 4.4M495.5 715.3l4.4 4.4m0 -4.4l-4.4 4.4M505.3 715.3l4.4 4.4m0 -4.4l-4.4 4.4M447.2 721.2l4.4 4.4m0 -4.4l-4.4 4.4M489.4 721.2l4.4 4.4m0 -4.4l-4.4 4.4M431.2 725.3l4.4 4.4m0 -4.4l-4.4 4.4M492.3 725.1l4.4 4.4m0 -4.4l-4.4 4.4M458.3 729.3l4.4 4.4m0 -4.4l-4.4 4.4M471.2 728.3l4.4 4.4m0 -4.4l-4.4 4.4M487.3 730.1l4.4 4.4m0 -4.4l-4.4 4.4M505.3 731.2l4.4 4.4m0 -4.4l-4.4 4.4M462.3 735.3l4.4 4.4m0 -4.4l-4.4 4.4M484.2 736.4l4.4 4.4m0 -4.4l-4.4 4.4M445.2 739.3l4.4 4.4m0 -4.4l-4.4 4.4M482.3 742.5l4.4 4.4m0 -4.4l-4.4 4.4M503.4 751.2l4.4 4.4m0 -4.4l-4.4 4.4M433.3 752.2l4.4 4.4m0 -4.4l-4.4 4.4M511.3 755.1l4.4 4.4m0 -4.4l-4.4 4.4M455.2 756.2l4.4 4.4m0 -4.4l-4.4 4.4M497.4 759.1l4.4 4.4m0 -4.4l-4.4 4.4M477.3 763.0l4.4 4.4m0 -4.4l-4.4 4.4M489.4 762.6l4.4 4.4m0 -4.4l-4.4 4.4M434.2 765.1l4.4 4.4m0 -4.4l-4.4 4.4M482.3 766.3l4.4 4.4m0 -4.4l-4.4 4.4M449.1 768.3l4.4 4.4m0 -4.4l-4.4 4.4M494.4 769.3l4.4 4.4m0 -4.4l-4.4 4.4M440.2 773.3l4.4 4.4m0 -4.4l-4.4 4.4M477.3 773.3l4.4 4.4m0 -4.4l-4.4 4.4M430.4 776.3l4.4 4.4m0 -4.4l-4.4 4.4M511.3 777.2l4.4 4.4m0 -4.4l-4.4 4.4M446.2 779.1l4.4 4.4m0 -4.4l-4.4 4.4M458.3 780.2l4.4 4.4m0 -4.4l-4.4 4.4M471.2 780.2l4.4 4.4m0 -4.4l-4.4 4.4M494.4 778.4l4.4 4.4m0 -4.4l-4.4 4.4M485.3 782.3l4.4 4.4m0 -4.4l-4.4 4.4M438.3 784.4l4.4 4.4m0 -4.4l-4.4 4.4M475.1 788.3l4.4 4.4m0 -4.4l-4.4 4.4M512.3 790.4l4.4 4.4m0 -4.4l-4.4 4.4M467.2 793.3l4.4 4.4m0 -4.4l-4.4 4.4M502.3 796.3l4.4 4.4m0 -4.4l-4.4 4.4M461.2 798.3l4.4 4.4m0 -4.4l-4.4 4.4M497.4 801.2l4.4 4.4m0 -4.4l-4.4 4.4M426.5 803.3l4.4 4.4m0 -4.4l-4.4 4.4M489.4 808.3l4.4 4.4m0 -4.4l-4.4 4.4M448.3 810.2l4.4 4.4m0 -4.4l-4.4 4.4M463.3 812.3l4.4 4.4m0 -4.4l-4.4 4.4M444.4 816.3l4.4 4.4m0 -4.4l-4.4 4.4M477.3 820.2l4.4 4.4m0 -4.4l-4.4 4.4M465.2 823.1l4.4 4.4m0 -4.4l-4.4 4.4M429.3 827.3l4.4 4.4m0 -4.4l-4.4 4.4M488.3 827.3l4.4 4.4m0 -4.4l-4.4 4.4M496.2 830.2l4.4 4.4m0 -4.4l-4.4 4.4M448.3 833.2l4.4 4.4m0 -4.4l-4.4 4.4M507.3 834.4l4.4 4.4m0 -4.4l-4.4 4.4M479.4 839.2l4.4 4.4m0 -4.4l-4.4 4.4M442.3 841.3l4.4 4.4m0 -4.4l-4.4 4.4M493.4 841.3l4.4 4.4m0 -4.4l-4.4 4.4M505.3 844.2l4.4 4.4m0 -4.4l-4.4 4.4M462.3 847.1l4.4 4.4m0 -4.4l-4.4 4.4M437.2 851.3l4.4 4.4m0 -4.4l-4.4 4.4M468.3 851.3l4.4 4.4m0 -4.4l-4.4 4.4" stroke="#fff" stroke-width="2.05" fill="none"/>
</g>
<rect x="146.5" y="486.5" width="370" height="369" fill="none" stroke="#000" stroke-width="1.1"/>
<path d="M146.5 486.5h-4.9M146.5 855.5v4.9M146.5 560.3h-4.9M220.5 855.5v4.9M146.5 634.1h-4.9M294.5 855.5v4.9M146.5 707.9h-4.9M368.5 855.5v4.9M146.5 781.7h-4.9M442.5 855.5v4.9M146.5 855.5h-4.9M516.5 855.5v4.9" stroke="#000" stroke-width="1.1" fill="none"/>
<g font-family="DejaVu Sans, sans-serif" font-size="13.89" fill="#000">
<text x="137.1" y="491.9" text-anchor="end">2500</text>
<text x="137.1" y="565.7" text-anchor="end">2600</text>
<text x="137.1" y="639.5" text-anchor="end">2700</text>
<text x="137.1" y="713.3" text-anchor="end">2800</text>
<text x="137.1" y="787.1" text-anchor="end">2900</text>
<text x="137.1" y="860.9" text-anchor="end">3000</text>
<text x="145.8" y="877" text-anchor="middle" font-size="13.65">43000</text>
<text x="219.8" y="877" text-anchor="middle" font-size="13.65">43100</text>
<text x="293.8" y="877" text-anchor="middle" font-size="13.65">43200</text>
<text x="367.8" y="877" text-anchor="middle" font-size="13.65">43300</text>
<text x="441.8" y="877" text-anchor="middle" font-size="13.65">43400</text>
<text x="515.8" y="877" text-anchor="middle" font-size="13.65">43500</text>
</g>
</svg>
</body>
</html>
